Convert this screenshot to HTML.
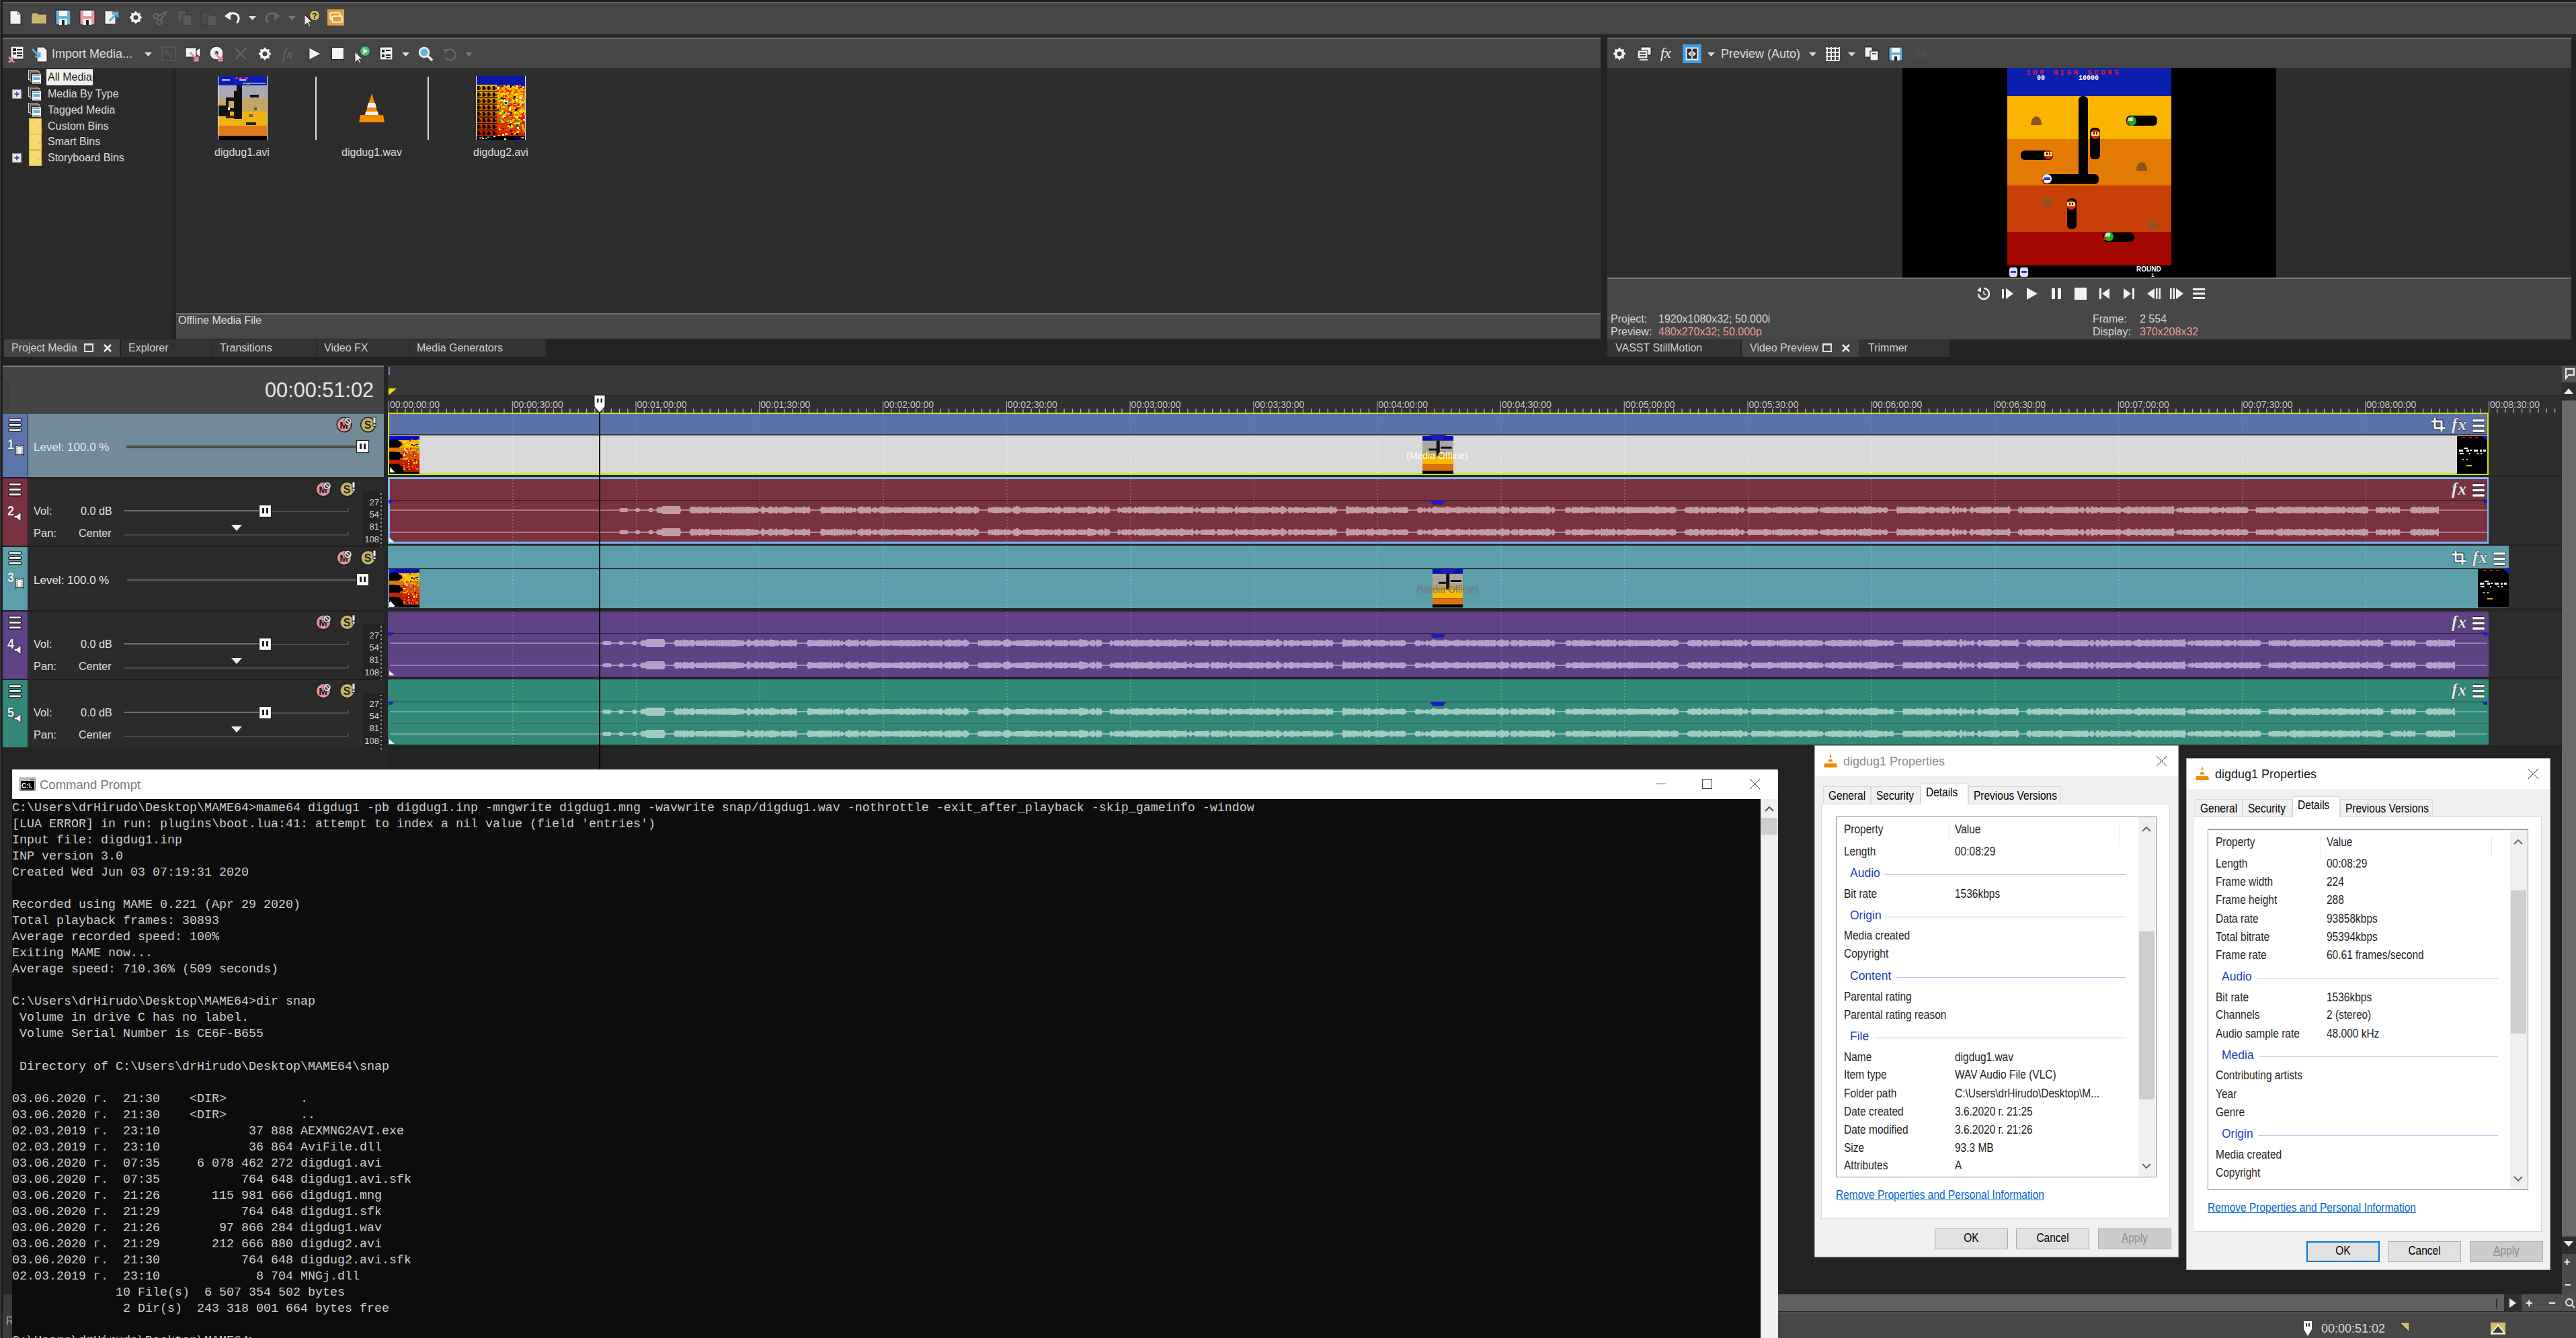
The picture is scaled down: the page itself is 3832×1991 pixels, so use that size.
<!DOCTYPE html>
<html><head><meta charset="utf-8">
<style>
*{margin:0;padding:0;box-sizing:border-box}
html,body{width:3832px;height:1991px;overflow:hidden;background:#252525;font-family:"Liberation Sans",sans-serif;color:#ddd}
.a{position:absolute}
.t{position:absolute;white-space:nowrap}
svg.a{overflow:visible}
</style></head><body>
<div class="a" style="left:0px;top:0px;width:3832px;height:3px;background:#1e1e1e;"></div>
<div class="a" style="left:0px;top:0px;width:5px;height:1991px;background:#1e1e1e;"></div>
<div class="a" style="left:0px;top:0px;width:1px;height:1991px;background:#3e3e3e;"></div>
<div class="a" style="left:4px;top:3px;width:3828px;height:48px;background:#464646;border-top:1px solid #6a6a6a"></div>
<div class="a" style="left:4px;top:51px;width:3828px;height:5px;background:#262626;"></div>
<svg class="a" style="left:14px;top:15px;" width="18" height="22" viewBox="0 0 18 22"><path d="M1 1 L12 1 L17 6 L17 21 L1 21 Z" fill="#f2f2f2" stroke="#2a2a2a" stroke-width="1"/><path d="M12 1 L12 6 L17 6" fill="none" stroke="#666" stroke-width="1"/></svg>
<svg class="a" style="left:46px;top:16px;" width="24" height="20" viewBox="0 0 24 20"><path d="M1 3 L9 3 L11 5 L23 5 L23 19 L1 19 Z" fill="#c8b46a" stroke="#2a2a2a" stroke-width="1"/><rect x="1" y="7" width="22" height="12" fill="#c9b56b"/></svg>
<svg class="a" style="left:82px;top:14px;" width="24" height="24" viewBox="0 0 24 24"><rect x="1" y="1" width="22" height="22" fill="#68b4d8" stroke="#222" stroke-width="1"/><rect x="6" y="2" width="12" height="8" fill="#f4f4f4"/><rect x="6" y="14" width="12" height="9" fill="#f4f4f4"/><rect x="10" y="16" width="4" height="7" fill="#222"/></svg>
<svg class="a" style="left:118px;top:14px;" width="24" height="24" viewBox="0 0 24 24"><rect x="1" y="1" width="22" height="22" fill="#e898a4" stroke="#222" stroke-width="1"/><rect x="6" y="2" width="12" height="8" fill="#f4f4f4"/><rect x="6" y="14" width="12" height="9" fill="#f4f4f4"/><rect x="10" y="16" width="4" height="7" fill="#222"/></svg>
<svg class="a" style="left:155px;top:15px;" width="18" height="22" viewBox="0 0 18 22"><path d="M1 1 L12 1 L17 6 L17 21 L1 21 Z" fill="#f2f2f2" stroke="#2a2a2a" stroke-width="1"/><path d="M12 1 L12 6 L17 6" fill="none" stroke="#666" stroke-width="1"/></svg>
<svg class="a" style="left:160px;top:16px;" width="18" height="18" viewBox="0 0 18 18"><path d="M3 15 L14 4 M8 3 L15 3 L15 10" fill="none" stroke="#5aaee0" stroke-width="3"/></svg>
<svg class="a" style="left:191px;top:15px;" width="22" height="22" viewBox="0 0 22 22"><polygon points="21.5,11.0 17.9,13.9 18.4,18.4 13.9,17.9 11.0,21.5 8.1,17.9 3.6,18.4 4.1,13.9 0.5,11.0 4.1,8.1 3.6,3.6 8.1,4.1 11.0,0.5 13.9,4.1 18.4,3.6 17.9,8.1" fill="#f2f2f2" stroke="#222" stroke-width="0.8"/><circle cx="11" cy="11" r="3.5" fill="#444"/></svg>
<svg class="a" style="left:227px;top:15px;" width="22" height="22" viewBox="0 0 22 22"><circle cx="5" cy="9" r="3.5" fill="none" stroke="#6a6a6a" stroke-width="2"/><circle cx="10" cy="18" r="3.5" fill="none" stroke="#6a6a6a" stroke-width="2"/><path d="M8 9 L21 2 M11 15 L20 5" stroke="#6a6a6a" stroke-width="2"/></svg>
<svg class="a" style="left:263px;top:15px;" width="24" height="24" viewBox="0 0 24 24"><rect x="1" y="1" width="13" height="16" fill="#555" stroke="#3a3a3a"/><rect x="9" y="7" width="13" height="16" fill="#5a5a5a" stroke="#3a3a3a"/></svg>
<svg class="a" style="left:299px;top:15px;" width="24" height="24" viewBox="0 0 24 24"><rect x="1" y="3" width="15" height="19" fill="#4e4e4e" stroke="#3a3a3a"/><rect x="10" y="8" width="13" height="15" fill="#5a5a5a" stroke="#3a3a3a"/></svg>
<svg class="a" style="left:334px;top:16px;" width="24" height="20" viewBox="0 0 24 20"><path d="M6 8 A8 8 0 1 1 18 18" fill="none" stroke="#f2f2f2" stroke-width="3"/><path d="M0 8 L9 1 L9 14 Z" fill="#f2f2f2"/></svg>
<svg class="a" style="left:370px;top:24px;" width="11" height="6" viewBox="0 0 11 6"><path d="M0 0 L11 0 L5.5 6 Z" fill="#ddd"/></svg>
<svg class="a" style="left:393px;top:16px;" width="24" height="20" viewBox="0 0 24 20"><path d="M18 8 A8 8 0 1 0 6 18" fill="none" stroke="#666" stroke-width="3"/><path d="M24 8 L15 1 L15 14 Z" fill="#666"/></svg>
<svg class="a" style="left:429px;top:24px;" width="11" height="6" viewBox="0 0 11 6"><path d="M0 0 L11 0 L5.5 6 Z" fill="#777"/></svg>
<svg class="a" style="left:452px;top:14px;" width="24" height="26" viewBox="0 0 24 26"><path d="M1 8 L1 24 L5 20 L8 26 L10 25 L7 19 L12 19 Z" fill="#eee" stroke="#222" stroke-width="0.8"/><circle cx="16" cy="9" r="7.5" fill="#d4c060" stroke="#222" stroke-width="0.8"/><text x="16" y="13.5" font-family="Liberation Sans" font-weight="bold" font-size="12" fill="#222" text-anchor="middle">?</text></svg>
<div class="a" style="left:487px;top:14px;width:25px;height:24px;background:#e0a040;"></div>
<svg class="a" style="left:490px;top:18px;" width="20" height="17" viewBox="0 0 20 17"><rect x="1" y="1" width="15" height="9" rx="2" fill="none" stroke="#fff" stroke-width="1.6"/><rect x="4" y="6" width="15" height="9" rx="2" fill="#e0a040" stroke="#fff" stroke-width="1.6"/></svg>
<div class="a" style="left:4px;top:56px;width:2377px;height:45px;background:#464646;border-top:2px solid #6e6e6e"></div>
<svg class="a" style="left:13px;top:68px;" width="24" height="26" viewBox="0 0 24 26"><rect x="3" y="1" width="19" height="19" fill="#f2f2f2" stroke="#222"/><rect x="6" y="4" width="5" height="4" fill="#222"/><rect x="12" y="5" width="8" height="2" fill="#222"/><rect x="6" y="10" width="5" height="3" fill="#222"/><rect x="12" y="10" width="8" height="2" fill="#222"/><rect x="12" y="14" width="8" height="2" fill="#222"/><path d="M0 17 L8 25 M8 17 L0 25" stroke="#e88a98" stroke-width="2.5"/></svg>
<svg class="a" style="left:47px;top:68px;" width="24" height="26" viewBox="0 0 24 26"><path d="M8 2 L18 2 L23 7 L23 24 L8 24 Z" fill="#f2f2f2" stroke="#222"/><path d="M1 5 L12 16 M5 16 L12 16 L12 9" fill="none" stroke="#5aaee0" stroke-width="3"/></svg>
<div class="t" style="left:77px;top:71.0px;font-size:18px;line-height:18px;color:#dcdcdc;font-family:'Liberation Sans';">Import Media...</div>
<svg class="a" style="left:215px;top:78px;" width="11" height="6" viewBox="0 0 11 6"><path d="M0 0 L11 0 L5.5 6 Z" fill="#ddd"/></svg>
<svg class="a" style="left:240px;top:69px;" width="22" height="22" viewBox="0 0 22 22"><rect x="1" y="1" width="20" height="20" fill="none" stroke="#5a5a5a" stroke-width="1.5"/><path d="M4 6 L16 18 M6 4 L18 16" stroke="#555" stroke-width="1.5"/></svg>
<svg class="a" style="left:275px;top:68px;" width="24" height="26" viewBox="0 0 24 26"><rect x="1" y="3" width="16" height="14" fill="#f2f2f2" stroke="#222"/><path d="M17 7 L23 3 L23 17 L17 13 Z" fill="#f2f2f2" stroke="#222"/><path d="M8 10 L19 22 M13 22 L19 22 L19 16" fill="none" stroke="#e88a98" stroke-width="3"/></svg>
<svg class="a" style="left:311px;top:68px;" width="24" height="26" viewBox="0 0 24 26"><circle cx="11" cy="11" r="10" fill="#f2f2f2" stroke="#222"/><circle cx="11" cy="11" r="3" fill="#444"/><path d="M8 10 L19 22 M13 22 L19 22 L19 16" fill="none" stroke="#e88a98" stroke-width="3"/></svg>
<svg class="a" style="left:348px;top:70px;" width="20" height="20" viewBox="0 0 20 20"><path d="M2 2 L18 18 M18 2 L2 18" stroke="#666" stroke-width="2"/></svg>
<svg class="a" style="left:383px;top:69px;" width="22" height="22" viewBox="0 0 22 22"><polygon points="21.5,11.0 17.9,13.9 18.4,18.4 13.9,17.9 11.0,21.5 8.1,17.9 3.6,18.4 4.1,13.9 0.5,11.0 4.1,8.1 3.6,3.6 8.1,4.1 11.0,0.5 13.9,4.1 18.4,3.6 17.9,8.1" fill="#f2f2f2" stroke="#222" stroke-width="0.8"/><circle cx="11" cy="11" r="3.5" fill="#444"/></svg>
<div class="t" style="left:420px;top:69.0px;font-size:22px;line-height:22px;color:#666;font-family:'Liberation Serif';"><i>fx</i></div>
<svg class="a" style="left:459px;top:70px;" width="19" height="20" viewBox="0 0 19 20"><path d="M1 1 L18 10 L1 19 Z" fill="#f2f2f2" stroke="#222" stroke-width="0.8"/></svg>
<div class="a" style="left:493px;top:70px;width:19px;height:19px;background:#f2f2f2;border:1px solid #222"></div>
<svg class="a" style="left:527px;top:67px;" width="24" height="28" viewBox="0 0 24 28"><path d="M1 10 L1 26 L5 22 L8 27 L10 26 L7 21 L12 21 Z" fill="#eee" stroke="#222" stroke-width="0.8"/><circle cx="16" cy="9" r="7.5" fill="#4ec070" stroke="#222" stroke-width="0.8"/><path d="M13.5 5 L20 9 L13.5 13 Z" fill="#fff"/></svg>
<svg class="a" style="left:564px;top:69px;" width="21" height="21" viewBox="0 0 21 21"><rect x="1" y="1" width="19" height="19" fill="#f2f2f2" stroke="#222"/><rect x="4" y="5" width="4" height="4" fill="#222"/><rect x="10" y="5" width="7" height="2" fill="#222"/><rect x="4" y="12" width="4" height="4" fill="#222"/><rect x="10" y="12" width="7" height="2" fill="#222"/><rect x="10" y="16" width="7" height="1.5" fill="#222"/></svg>
<svg class="a" style="left:598px;top:78px;" width="11" height="6" viewBox="0 0 11 6"><path d="M0 0 L11 0 L5.5 6 Z" fill="#ddd"/></svg>
<svg class="a" style="left:622px;top:69px;" width="22" height="22" viewBox="0 0 22 22"><circle cx="9" cy="9" r="7" fill="#6ab4e0" stroke="#f2f2f2" stroke-width="2.5"/><line x1="14" y1="14" x2="21" y2="21" stroke="#f2f2f2" stroke-width="3.5"/></svg>
<svg class="a" style="left:658px;top:70px;" width="21" height="21" viewBox="0 0 21 21"><path d="M6 6 A8 8 0 1 1 5 16" fill="none" stroke="#666" stroke-width="2.5"/><path d="M1 3 L9 3 L5 10 Z" fill="#666"/></svg>
<svg class="a" style="left:692px;top:78px;" width="11" height="6" viewBox="0 0 11 6"><path d="M0 0 L11 0 L5.5 6 Z" fill="#777"/></svg>
<div class="a" style="left:4px;top:101px;width:251px;height:430px;background:#2b2b2b;"></div>
<div class="a" style="left:255px;top:101px;width:7px;height:430px;background:#252525;"></div>
<div class="a" style="left:69px;top:103px;width:69px;height:24px;background:#efefef;"></div>
<svg class="a" style="left:42px;top:104px;" width="21" height="22" viewBox="0 0 21 22"><rect x="0.5" y="0.5" width="14" height="14" fill="#2b2b2b" stroke="#ddd"/><rect x="3" y="3" width="14" height="14" fill="#2b2b2b" stroke="#ddd"/><rect x="5.5" y="6" width="14" height="15" fill="#f2f2f2" stroke="#333"/><rect x="7.5" y="11" width="10" height="4" fill="#6ab4e0"/><path d="M7 8.5 L18 8.5 M7 18.5 L18 18.5" stroke="#555" stroke-dasharray="1.5 1.2"/></svg>
<div class="t" style="left:71px;top:107.0px;font-size:16px;line-height:16px;color:#1a1a1a;font-family:'Liberation Sans';">All Media</div>
<svg class="a" style="left:18px;top:132.6px;" width="14" height="14" viewBox="0 0 14 14"><rect x="0.5" y="0.5" width="13" height="13" fill="#e8e8e8" stroke="#999"/><path d="M3.5 7 L10.5 7 M7 3.5 L7 10.5" stroke="#3050a0" stroke-width="1.8"/></svg>
<svg class="a" style="left:42px;top:128.6px;" width="21" height="22" viewBox="0 0 21 22"><rect x="0.5" y="0.5" width="14" height="14" fill="#2b2b2b" stroke="#ddd"/><rect x="3" y="3" width="14" height="14" fill="#2b2b2b" stroke="#ddd"/><rect x="5.5" y="6" width="14" height="15" fill="#f2f2f2" stroke="#333"/><rect x="7.5" y="11" width="10" height="4" fill="#6ab4e0"/><path d="M7 8.5 L18 8.5 M7 18.5 L18 18.5" stroke="#555" stroke-dasharray="1.5 1.2"/></svg>
<div class="t" style="left:71px;top:131.6px;font-size:16px;line-height:16px;color:#dcdcdc;font-family:'Liberation Sans';">Media By Type</div>
<svg class="a" style="left:42px;top:152.5px;" width="21" height="22" viewBox="0 0 21 22"><rect x="0.5" y="0.5" width="14" height="14" fill="#2b2b2b" stroke="#ddd"/><rect x="3" y="3" width="14" height="14" fill="#2b2b2b" stroke="#ddd"/><rect x="5.5" y="6" width="14" height="15" fill="#f2f2f2" stroke="#333"/><rect x="7.5" y="11" width="10" height="4" fill="#6ab4e0"/><path d="M7 8.5 L18 8.5 M7 18.5 L18 18.5" stroke="#555" stroke-dasharray="1.5 1.2"/></svg>
<div class="t" style="left:71px;top:155.5px;font-size:16px;line-height:16px;color:#dcdcdc;font-family:'Liberation Sans';">Tagged Media</div>
<svg class="a" style="left:43px;top:175.7px;" width="21" height="24" viewBox="0 0 21 24"><rect x="0.5" y="0.5" width="18" height="23" fill="#f5d870" stroke="#d4b040" stroke-width="1"/><path d="M14 14 L19 14 L19 24" fill="none" stroke="#d4b040"/></svg>
<div class="t" style="left:71px;top:179.7px;font-size:16px;line-height:16px;color:#dcdcdc;font-family:'Liberation Sans';">Custom Bins</div>
<svg class="a" style="left:43px;top:199.4px;" width="21" height="24" viewBox="0 0 21 24"><rect x="0.5" y="0.5" width="18" height="23" fill="#f5d870" stroke="#d4b040" stroke-width="1"/><path d="M14 14 L19 14 L19 24" fill="none" stroke="#d4b040"/></svg>
<div class="t" style="left:71px;top:203.4px;font-size:16px;line-height:16px;color:#dcdcdc;font-family:'Liberation Sans';">Smart Bins</div>
<svg class="a" style="left:18px;top:228.3px;" width="14" height="14" viewBox="0 0 14 14"><rect x="0.5" y="0.5" width="13" height="13" fill="#e8e8e8" stroke="#999"/><path d="M3.5 7 L10.5 7 M7 3.5 L7 10.5" stroke="#3050a0" stroke-width="1.8"/></svg>
<svg class="a" style="left:43px;top:223.3px;" width="21" height="24" viewBox="0 0 21 24"><rect x="0.5" y="0.5" width="18" height="23" fill="#f5d870" stroke="#d4b040" stroke-width="1"/><path d="M14 14 L19 14 L19 24" fill="none" stroke="#d4b040"/></svg>
<div class="t" style="left:71px;top:227.3px;font-size:16px;line-height:16px;color:#dcdcdc;font-family:'Liberation Sans';">Storyboard Bins</div>
<div class="a" style="left:262px;top:101px;width:2119px;height:365px;background:#2d2d2d;"></div>
<svg class="a" style="left:324px;top:113px;" width="74" height="95" viewBox="0 0 74 95"><rect width="74" height="95" fill="#eee"/><rect x="1" y="0" width="72" height="95" fill="#000"/><rect x="1" y="0" width="72" height="14" fill="#0c1cb8"/><rect x="1" y="14" width="72" height="19" fill="#aaa8b4"/><rect x="1" y="33" width="72" height="20" fill="#c4a664"/><rect x="1" y="53" width="72" height="21" fill="#eeb414"/><rect x="1" y="74" width="72" height="15" fill="#e07a18"/><rect x="28" y="14" width="8" height="50" fill="#111"/><rect x="24" y="22" width="6" height="42" fill="#111"/><path d="M1 44 L12 44 L12 32 L26 32 L26 37 L16 37 L16 48 L8 48 L8 60 L1 60 Z" fill="#111"/><path d="M1 48 L36 48 L36 53 L18 53 L18 60 L1 60 Z" fill="#111"/><rect x="48" y="28" width="13" height="4" fill="#111"/><rect x="12" y="59" width="13" height="4" fill="#222"/><rect x="42" y="69" width="15" height="4" fill="#222"/><rect x="26" y="2" width="4" height="3" fill="#e03040"/><rect x="32" y="2" width="4" height="3" fill="#e03040"/><rect x="40" y="2" width="5" height="3" fill="#e03040"/><rect x="6" y="5" width="12" height="2" fill="#ccd"/><rect x="32" y="5" width="10" height="2" fill="#ccd"/><rect x="37" y="10" width="34" height="2" fill="#aab" opacity="0.8"/><rect x="43" y="12" width="4" height="4" fill="#30b040"/><rect x="15" y="47" width="3" height="4" fill="#fff"/><rect x="46" y="57" width="6" height="4" fill="#806030"/><rect x="54" y="47" width="4" height="4" fill="#705020"/></svg>
<div class="t" style="left:300.0px;top:219.0px;width:120px;text-align:center;font-size:16px;line-height:16px;color:#dcdcdc;font-family:'Liberation Sans';">digdug1.avi</div>
<div class="a" style="left:469px;top:114px;width:2px;height:94px;background:#dcdcdc;"></div>
<svg class="a" style="left:533px;top:137px;" width="40" height="46" viewBox="0 0 40 46"><path d="M20 2 L30 34 L10 34 Z" fill="#f28a00"/><path d="M15 16 L25 16 L27 23 L13 23 Z" fill="#f4f4f4"/><path d="M11 29 L29 29 L30 34 L10 34 Z" fill="#f4f4f4"/><path d="M3 34 L37 34 L39 45 L1 45 Z" fill="#f28a00"/></svg>
<div class="t" style="left:493.0px;top:219.0px;width:120px;text-align:center;font-size:16px;line-height:16px;color:#dcdcdc;font-family:'Liberation Sans';">digdug1.wav</div>
<div class="a" style="left:636px;top:114px;width:2px;height:94px;background:#dcdcdc;"></div>
<svg class="a" style="left:708px;top:113px;overflow:hidden" width="74" height="95" viewBox="0 0 74 95"><defs><linearGradient id="fg" x1="0" y1="0" x2="0" y2="1"><stop offset="0" stop-color="#f8c400"/><stop offset="0.45" stop-color="#f08000"/><stop offset="1" stop-color="#c01400"/></linearGradient></defs><rect width="74" height="95" fill="#eee"/><rect x="1" y="0" width="72" height="95" fill="url(#fg)"/><rect x="1" y="0" width="72" height="13" fill="#0818a8"/><rect x="32" y="13" width="41" height="5" fill="#0818a8"/><rect x="2.0" y="15.0" width="3.5" height="6" fill="#000"/><rect x="5.5" y="17.0" width="2.5" height="3" fill="#000" opacity="0.7"/><rect x="9.6" y="15.0" width="3.5" height="6" fill="#000"/><rect x="13.1" y="17.0" width="2.5" height="3" fill="#000" opacity="0.7"/><rect x="17.2" y="15.0" width="3.5" height="6" fill="#000"/><rect x="20.7" y="17.0" width="2.5" height="3" fill="#000" opacity="0.7"/><rect x="24.8" y="15.0" width="3.5" height="6" fill="#000"/><rect x="28.3" y="17.0" width="2.5" height="3" fill="#000" opacity="0.7"/><rect x="1" y="22.0" width="31" height="1.6" fill="#000" opacity="0.8"/><rect x="2.0" y="24.6" width="3.5" height="6" fill="#000"/><rect x="5.5" y="26.6" width="2.5" height="3" fill="#000" opacity="0.7"/><rect x="9.6" y="24.6" width="3.5" height="6" fill="#000"/><rect x="13.1" y="26.6" width="2.5" height="3" fill="#000" opacity="0.7"/><rect x="17.2" y="24.6" width="3.5" height="6" fill="#000"/><rect x="20.7" y="26.6" width="2.5" height="3" fill="#000" opacity="0.7"/><rect x="24.8" y="24.6" width="3.5" height="6" fill="#000"/><rect x="28.3" y="26.6" width="2.5" height="3" fill="#000" opacity="0.7"/><rect x="1" y="31.6" width="31" height="1.6" fill="#000" opacity="0.8"/><rect x="2.0" y="34.2" width="3.5" height="6" fill="#000"/><rect x="5.5" y="36.2" width="2.5" height="3" fill="#000" opacity="0.7"/><rect x="9.6" y="34.2" width="3.5" height="6" fill="#000"/><rect x="13.1" y="36.2" width="2.5" height="3" fill="#000" opacity="0.7"/><rect x="17.2" y="34.2" width="3.5" height="6" fill="#000"/><rect x="20.7" y="36.2" width="2.5" height="3" fill="#000" opacity="0.7"/><rect x="24.8" y="34.2" width="3.5" height="6" fill="#000"/><rect x="28.3" y="36.2" width="2.5" height="3" fill="#000" opacity="0.7"/><rect x="1" y="41.2" width="31" height="1.6" fill="#000" opacity="0.8"/><rect x="2.0" y="43.8" width="3.5" height="6" fill="#000"/><rect x="5.5" y="45.8" width="2.5" height="3" fill="#000" opacity="0.7"/><rect x="9.6" y="43.8" width="3.5" height="6" fill="#000"/><rect x="13.1" y="45.8" width="2.5" height="3" fill="#000" opacity="0.7"/><rect x="17.2" y="43.8" width="3.5" height="6" fill="#000"/><rect x="20.7" y="45.8" width="2.5" height="3" fill="#000" opacity="0.7"/><rect x="24.8" y="43.8" width="3.5" height="6" fill="#000"/><rect x="28.3" y="45.8" width="2.5" height="3" fill="#000" opacity="0.7"/><rect x="1" y="50.8" width="31" height="1.6" fill="#000" opacity="0.8"/><rect x="2.0" y="53.4" width="3.5" height="6" fill="#000"/><rect x="5.5" y="55.4" width="2.5" height="3" fill="#000" opacity="0.7"/><rect x="9.6" y="53.4" width="3.5" height="6" fill="#000"/><rect x="13.1" y="55.4" width="2.5" height="3" fill="#000" opacity="0.7"/><rect x="17.2" y="53.4" width="3.5" height="6" fill="#000"/><rect x="20.7" y="55.4" width="2.5" height="3" fill="#000" opacity="0.7"/><rect x="24.8" y="53.4" width="3.5" height="6" fill="#000"/><rect x="28.3" y="55.4" width="2.5" height="3" fill="#000" opacity="0.7"/><rect x="1" y="60.4" width="31" height="1.6" fill="#000" opacity="0.8"/><rect x="2.0" y="63.0" width="3.5" height="6" fill="#000"/><rect x="5.5" y="65.0" width="2.5" height="3" fill="#000" opacity="0.7"/><rect x="9.6" y="63.0" width="3.5" height="6" fill="#000"/><rect x="13.1" y="65.0" width="2.5" height="3" fill="#000" opacity="0.7"/><rect x="17.2" y="63.0" width="3.5" height="6" fill="#000"/><rect x="20.7" y="65.0" width="2.5" height="3" fill="#000" opacity="0.7"/><rect x="24.8" y="63.0" width="3.5" height="6" fill="#000"/><rect x="28.3" y="65.0" width="2.5" height="3" fill="#000" opacity="0.7"/><rect x="1" y="70.0" width="31" height="1.6" fill="#000" opacity="0.8"/><rect x="2.0" y="72.6" width="3.5" height="6" fill="#000"/><rect x="5.5" y="74.6" width="2.5" height="3" fill="#000" opacity="0.7"/><rect x="9.6" y="72.6" width="3.5" height="6" fill="#000"/><rect x="13.1" y="74.6" width="2.5" height="3" fill="#000" opacity="0.7"/><rect x="17.2" y="72.6" width="3.5" height="6" fill="#000"/><rect x="20.7" y="74.6" width="2.5" height="3" fill="#000" opacity="0.7"/><rect x="24.8" y="72.6" width="3.5" height="6" fill="#000"/><rect x="28.3" y="74.6" width="2.5" height="3" fill="#000" opacity="0.7"/><rect x="1" y="79.6" width="31" height="1.6" fill="#000" opacity="0.8"/><rect x="2.0" y="82.2" width="3.5" height="6" fill="#000"/><rect x="5.5" y="84.2" width="2.5" height="3" fill="#000" opacity="0.7"/><rect x="9.6" y="82.2" width="3.5" height="6" fill="#000"/><rect x="13.1" y="84.2" width="2.5" height="3" fill="#000" opacity="0.7"/><rect x="17.2" y="82.2" width="3.5" height="6" fill="#000"/><rect x="20.7" y="84.2" width="2.5" height="3" fill="#000" opacity="0.7"/><rect x="24.8" y="82.2" width="3.5" height="6" fill="#000"/><rect x="28.3" y="84.2" width="2.5" height="3" fill="#000" opacity="0.7"/><rect x="1" y="89.2" width="31" height="1.6" fill="#000" opacity="0.8"/><rect x="2.0" y="91.8" width="3.5" height="6" fill="#000"/><rect x="5.5" y="93.8" width="2.5" height="3" fill="#000" opacity="0.7"/><rect x="9.6" y="91.8" width="3.5" height="6" fill="#000"/><rect x="13.1" y="93.8" width="2.5" height="3" fill="#000" opacity="0.7"/><rect x="17.2" y="91.8" width="3.5" height="6" fill="#000"/><rect x="20.7" y="93.8" width="2.5" height="3" fill="#000" opacity="0.7"/><rect x="24.8" y="91.8" width="3.5" height="6" fill="#000"/><rect x="28.3" y="93.8" width="2.5" height="3" fill="#000" opacity="0.7"/><rect x="1" y="98.8" width="31" height="1.6" fill="#000" opacity="0.8"/><rect x="56" y="70" width="3" height="3" fill="#fff"/><rect x="69" y="70" width="3" height="3" fill="#000"/><rect x="33" y="49" width="3" height="3" fill="#000"/><rect x="57" y="82" width="3" height="3" fill="#e02000"/><rect x="42" y="55" width="3" height="3" fill="#ff2000"/><rect x="33" y="30" width="3" height="3" fill="#ffe000"/><rect x="68" y="72" width="3" height="3" fill="#ffe000"/><rect x="37" y="61" width="3" height="3" fill="#e02000"/><rect x="66" y="29" width="3" height="3" fill="#ffe000"/><rect x="70" y="80" width="3" height="3" fill="#ffe000"/><rect x="53" y="65" width="3" height="3" fill="#ffe000"/><rect x="59" y="87" width="3" height="3" fill="#1020c0"/><rect x="44" y="41" width="3" height="3" fill="#ffe000"/><rect x="38" y="18" width="3" height="3" fill="#f8b000"/><rect x="56" y="13" width="3" height="3" fill="#e05000"/><rect x="45" y="37" width="3" height="3" fill="#fff"/><rect x="51" y="37" width="3" height="3" fill="#f8b000"/><rect x="59" y="17" width="3" height="3" fill="#f0a000"/><rect x="33" y="71" width="3" height="3" fill="#20c020"/><rect x="33" y="74" width="3" height="3" fill="#f8b000"/><rect x="32" y="17" width="3" height="3" fill="#ffe000"/><rect x="69" y="28" width="3" height="3" fill="#e05000"/><rect x="68" y="86" width="3" height="3" fill="#e02000"/><rect x="52" y="73" width="3" height="3" fill="#ffe000"/><rect x="63" y="79" width="3" height="3" fill="#ffe000"/><rect x="36" y="39" width="3" height="3" fill="#ff2000"/><rect x="68" y="39" width="3" height="3" fill="#000"/><rect x="53" y="37" width="3" height="3" fill="#f8b000"/><rect x="39" y="19" width="3" height="3" fill="#ffe000"/><rect x="59" y="90" width="3" height="3" fill="#e02000"/><rect x="70" y="54" width="3" height="3" fill="#f8b000"/><rect x="41" y="59" width="3" height="3" fill="#fff"/><rect x="50" y="45" width="3" height="3" fill="#ffe000"/><rect x="68" y="16" width="3" height="3" fill="#f8b000"/><rect x="65" y="23" width="3" height="3" fill="#e05000"/><rect x="69" y="62" width="3" height="3" fill="#fff"/><rect x="36" y="46" width="3" height="3" fill="#ffe000"/><rect x="65" y="36" width="3" height="3" fill="#f8b000"/><rect x="71" y="79" width="3" height="3" fill="#f0a000"/><rect x="50" y="51" width="3" height="3" fill="#e05000"/><rect x="51" y="35" width="3" height="3" fill="#f8b000"/><rect x="38" y="42" width="3" height="3" fill="#e02000"/><rect x="69" y="61" width="3" height="3" fill="#e02000"/><rect x="35" y="34" width="3" height="3" fill="#fff"/><rect x="66" y="41" width="3" height="3" fill="#fff"/><rect x="62" y="66" width="3" height="3" fill="#e05000"/><rect x="62" y="41" width="3" height="3" fill="#e05000"/><rect x="43" y="50" width="3" height="3" fill="#e05000"/><rect x="59" y="36" width="3" height="3" fill="#000"/><rect x="57" y="58" width="3" height="3" fill="#ffe000"/><rect x="42" y="65" width="3" height="3" fill="#f8b000"/><rect x="57" y="74" width="3" height="3" fill="#f8b000"/><rect x="61" y="77" width="3" height="3" fill="#f8b000"/><rect x="66" y="66" width="3" height="3" fill="#f0a000"/><rect x="69" y="53" width="3" height="3" fill="#ff2000"/><rect x="38" y="77" width="3" height="3" fill="#000"/><rect x="51" y="66" width="3" height="3" fill="#e05000"/><rect x="60" y="26" width="3" height="3" fill="#fff"/><rect x="55" y="64" width="3" height="3" fill="#f8b000"/><rect x="62" y="62" width="3" height="3" fill="#e05000"/><rect x="33" y="25" width="3" height="3" fill="#f8b000"/><rect x="57" y="30" width="3" height="3" fill="#e05000"/><rect x="57" y="16" width="3" height="3" fill="#f8b000"/><rect x="41" y="17" width="3" height="3" fill="#ffe000"/><rect x="44" y="27" width="3" height="3" fill="#ffe000"/><rect x="33" y="49" width="3" height="3" fill="#f8b000"/><rect x="56" y="58" width="3" height="3" fill="#ffe000"/><rect x="32" y="44" width="3" height="3" fill="#ffe000"/><rect x="48" y="22" width="3" height="3" fill="#20c020"/><rect x="47" y="16" width="3" height="3" fill="#ff2000"/><rect x="36" y="55" width="3" height="3" fill="#f8b000"/><rect x="55" y="87" width="3" height="3" fill="#fff"/><rect x="48" y="76" width="3" height="3" fill="#ff2000"/><rect x="46" y="24" width="3" height="3" fill="#ff2000"/><rect x="54" y="87" width="3" height="3" fill="#f0a000"/><rect x="56" y="40" width="3" height="3" fill="#1020c0"/><rect x="32" y="21" width="3" height="3" fill="#ff2000"/><rect x="56" y="24" width="3" height="3" fill="#ff2000"/><rect x="67" y="42" width="3" height="3" fill="#f8b000"/><rect x="41" y="35" width="3" height="3" fill="#f0a000"/><rect x="47" y="87" width="3" height="3" fill="#1020c0"/><rect x="55" y="33" width="3" height="3" fill="#e02000"/><rect x="51" y="45" width="3" height="3" fill="#f8b000"/><rect x="70" y="51" width="3" height="3" fill="#ffe000"/><rect x="51" y="22" width="3" height="3" fill="#ff2000"/><rect x="49" y="36" width="3" height="3" fill="#fff"/><rect x="64" y="14" width="3" height="3" fill="#ff2000"/><rect x="43" y="85" width="3" height="3" fill="#fff"/><rect x="42" y="34" width="3" height="3" fill="#ffe000"/><rect x="71" y="36" width="3" height="3" fill="#ff2000"/><rect x="51" y="63" width="3" height="3" fill="#ff2000"/><rect x="61" y="22" width="3" height="3" fill="#e05000"/><rect x="44" y="54" width="3" height="3" fill="#f8b000"/><rect x="44" y="54" width="3" height="3" fill="#f8b000"/><rect x="46" y="70" width="3" height="3" fill="#ff2000"/><rect x="33" y="32" width="3" height="3" fill="#f8b000"/><rect x="68" y="81" width="3" height="3" fill="#ff2000"/><rect x="33" y="73" width="3" height="3" fill="#f8b000"/><rect x="60" y="62" width="3" height="3" fill="#f8b000"/><rect x="47" y="43" width="3" height="3" fill="#20c020"/><rect x="40" y="36" width="3" height="3" fill="#20c020"/><rect x="35" y="77" width="3" height="3" fill="#e05000"/><rect x="49" y="35" width="3" height="3" fill="#fff"/><rect x="68" y="24" width="3" height="3" fill="#f8b000"/><rect x="53" y="51" width="3" height="3" fill="#f8b000"/><rect x="38" y="58" width="3" height="3" fill="#fff"/><rect x="35" y="31" width="3" height="3" fill="#fff"/><rect x="63" y="64" width="3" height="3" fill="#ffe000"/><rect x="70" y="90" width="3" height="3" fill="#e05000"/><rect x="34" y="78" width="3" height="3" fill="#ffe000"/><rect x="69" y="68" width="3" height="3" fill="#e02000"/><rect x="68" y="25" width="3" height="3" fill="#ff2000"/><rect x="48" y="25" width="3" height="3" fill="#ff2000"/><rect x="34" y="21" width="3" height="3" fill="#f8b000"/><rect x="35" y="17" width="3" height="3" fill="#ff2000"/><rect x="61" y="81" width="3" height="3" fill="#e02000"/><rect x="44" y="59" width="3" height="3" fill="#f8b000"/><rect x="47" y="17" width="3" height="3" fill="#e05000"/><rect x="38" y="62" width="3" height="3" fill="#ff2000"/><rect x="68" y="56" width="3" height="3" fill="#ff2000"/><rect x="42" y="55" width="3" height="3" fill="#ffe000"/><rect x="52" y="23" width="3" height="3" fill="#ffe000"/><rect x="46" y="70" width="3" height="3" fill="#ffe000"/><rect x="58" y="20" width="3" height="3" fill="#e05000"/><rect x="36" y="23" width="3" height="3" fill="#ff2000"/><rect x="41" y="81" width="3" height="3" fill="#e02000"/><rect x="63" y="15" width="3" height="3" fill="#e05000"/><rect x="34" y="25" width="3" height="3" fill="#000"/><rect x="59" y="30" width="3" height="3" fill="#ffe000"/><rect x="70" y="64" width="3" height="3" fill="#fff"/><rect x="37" y="61" width="3" height="3" fill="#e02000"/><rect x="45" y="60" width="3" height="3" fill="#e02000"/><rect x="37" y="77" width="3" height="3" fill="#ff2000"/><rect x="63" y="46" width="3" height="3" fill="#20c020"/><rect x="52" y="59" width="3" height="3" fill="#ff2000"/><rect x="61" y="43" width="3" height="3" fill="#ffe000"/><rect x="33" y="29" width="3" height="3" fill="#ffe000"/><rect x="67" y="50" width="3" height="3" fill="#e05000"/><rect x="32" y="49" width="3" height="3" fill="#1020c0"/><rect x="56" y="46" width="3" height="3" fill="#f8b000"/><rect x="36" y="25" width="3" height="3" fill="#ffe000"/><rect x="47" y="43" width="3" height="3" fill="#1020c0"/><rect x="38" y="33" width="3" height="3" fill="#ffe000"/><rect x="38" y="35" width="3" height="3" fill="#ffe000"/><rect x="51" y="15" width="3" height="3" fill="#000"/><rect x="46" y="85" width="3" height="3" fill="#e05000"/><rect x="58" y="49" width="3" height="3" fill="#000"/><rect x="37" y="64" width="3" height="3" fill="#ffe000"/><rect x="60" y="26" width="3" height="3" fill="#ffe000"/><rect x="33" y="31" width="3" height="3" fill="#ffe000"/><rect x="48" y="88" width="3" height="3" fill="#e02000"/><rect x="50" y="35" width="3" height="3" fill="#e05000"/><rect x="60" y="26" width="3" height="3" fill="#ffe000"/><rect x="58" y="85" width="3" height="3" fill="#ff2000"/><rect x="49" y="88" width="3" height="3" fill="#e02000"/><rect x="62" y="45" width="3" height="3" fill="#ffe000"/><rect x="53" y="89" width="3" height="3" fill="#ff2000"/><rect x="46" y="20" width="3" height="3" fill="#ffe000"/><rect x="67" y="51" width="3" height="3" fill="#000"/><rect x="34" y="32" width="3" height="3" fill="#ffe000"/><rect x="47" y="18" width="3" height="3" fill="#ffe000"/><rect x="48" y="37" width="3" height="3" fill="#ffe000"/><rect x="33" y="88" width="3" height="3" fill="#ffe000"/><rect x="48" y="54" width="3" height="3" fill="#ffe000"/><rect x="44" y="21" width="3" height="3" fill="#ff2000"/><rect x="68" y="59" width="3" height="3" fill="#20c020"/><rect x="40" y="14" width="3" height="3" fill="#ff2000"/><rect x="51" y="57" width="3" height="3" fill="#f8b000"/><rect x="60" y="83" width="3" height="3" fill="#e02000"/><rect x="64" y="30" width="3" height="3" fill="#ffe000"/><rect x="44" y="20" width="3" height="3" fill="#fff"/><rect x="64" y="37" width="3" height="3" fill="#ffe000"/><rect x="35" y="32" width="3" height="3" fill="#ffe000"/><rect x="49" y="57" width="3" height="3" fill="#e02000"/><rect x="59" y="17" width="3" height="3" fill="#ffe000"/><rect x="43" y="42" width="3" height="3" fill="#ffe000"/><rect x="48" y="37" width="3" height="3" fill="#e05000"/><rect x="54" y="82" width="3" height="3" fill="#e05000"/><rect x="62" y="57" width="3" height="3" fill="#f8b000"/><rect x="58" y="87" width="3" height="3" fill="#e05000"/><rect x="59" y="34" width="3" height="3" fill="#fff"/><rect x="47" y="23" width="3" height="3" fill="#ffe000"/><rect x="39" y="33" width="3" height="3" fill="#e05000"/><rect x="43" y="18" width="3" height="3" fill="#e05000"/><rect x="54" y="15" width="3" height="3" fill="#ffe000"/><rect x="37" y="41" width="3" height="3" fill="#20c020"/><rect x="69" y="60" width="3" height="3" fill="#e02000"/><rect x="46" y="38" width="3" height="3" fill="#ffe000"/><rect x="55" y="77" width="3" height="3" fill="#e05000"/><rect x="36" y="54" width="3" height="3" fill="#ffe000"/><rect x="60" y="47" width="3" height="3" fill="#000"/><rect x="63" y="22" width="3" height="3" fill="#f8b000"/><rect x="68" y="48" width="3" height="3" fill="#f8b000"/><rect x="49" y="72" width="3" height="3" fill="#000"/><rect x="53" y="88" width="3" height="3" fill="#ff2000"/><rect x="36" y="76" width="3" height="3" fill="#e02000"/><rect x="70" y="16" width="3" height="3" fill="#ff2000"/><rect x="51" y="81" width="3" height="3" fill="#e02000"/><rect x="43" y="28" width="3" height="3" fill="#ff2000"/><rect x="46" y="71" width="3" height="3" fill="#e02000"/><rect x="42" y="89" width="3" height="3" fill="#20c020"/><rect x="65" y="61" width="3" height="3" fill="#e02000"/><rect x="64" y="51" width="3" height="3" fill="#ffe000"/><rect x="39" y="21" width="3" height="3" fill="#e05000"/><rect x="67" y="28" width="3" height="3" fill="#fff"/><rect x="45" y="66" width="3" height="3" fill="#20c020"/><rect x="56" y="75" width="3" height="3" fill="#e02000"/><rect x="52" y="58" width="3" height="3" fill="#e02000"/><rect x="44" y="15" width="3" height="3" fill="#f8b000"/><rect x="47" y="50" width="3" height="3" fill="#e05000"/><rect x="48" y="89" width="3" height="3" fill="#fff"/><rect x="68" y="66" width="3" height="3" fill="#e05000"/><rect x="53" y="74" width="3" height="3" fill="#f8b000"/><rect x="58" y="53" width="3" height="3" fill="#ffe000"/><rect x="35" y="20" width="3" height="3" fill="#f8b000"/><rect x="55" y="71" width="3" height="3" fill="#e05000"/><rect x="44" y="85" width="3" height="3" fill="#ffe000"/><rect x="35" y="71" width="3" height="3" fill="#e05000"/><rect x="69" y="82" width="3" height="3" fill="#e05000"/><rect x="65" y="70" width="3" height="3" fill="#ff2000"/><rect x="40" y="53" width="3" height="3" fill="#1020c0"/><rect x="41" y="88" width="3" height="3" fill="#ff2000"/><rect x="47" y="13" width="3" height="3" fill="#f8b000"/><rect x="39" y="63" width="3" height="3" fill="#1020c0"/><rect x="67" y="60" width="3" height="3" fill="#e02000"/><rect x="59" y="56" width="3" height="3" fill="#e05000"/><rect x="47" y="81" width="3" height="3" fill="#e02000"/><rect x="42" y="61" width="3" height="3" fill="#1020c0"/><rect x="39" y="62" width="3" height="3" fill="#e05000"/><rect x="41" y="18" width="3" height="3" fill="#ff2000"/><rect x="64" y="81" width="3" height="3" fill="#e05000"/><rect x="48" y="46" width="3" height="3" fill="#ff2000"/><rect x="67" y="36" width="3" height="3" fill="#ffe000"/><rect x="56" y="87" width="3" height="3" fill="#e02000"/><rect x="37" y="56" width="3" height="3" fill="#ff2000"/><rect x="39" y="28" width="3" height="3" fill="#ff2000"/><rect x="57" y="66" width="3" height="3" fill="#e05000"/><rect x="34" y="50" width="3" height="3" fill="#20c020"/><rect x="69" y="38" width="3" height="3" fill="#20c020"/><rect x="57" y="84" width="3" height="3" fill="#ffe000"/><rect x="65" y="50" width="3" height="3" fill="#ffe000"/><rect x="40" y="25" width="3" height="3" fill="#ffe000"/><rect x="38" y="60" width="3" height="3" fill="#ffe000"/><rect x="61" y="76" width="3" height="3" fill="#fff"/><rect x="60" y="84" width="3" height="3" fill="#000"/><rect x="56" y="87" width="3" height="3" fill="#e02000"/><rect x="35" y="29" width="3" height="3" fill="#f8b000"/><rect x="50" y="65" width="3" height="3" fill="#e05000"/><rect x="35" y="44" width="3" height="3" fill="#ff2000"/><rect x="47" y="22" width="3" height="3" fill="#ff2000"/><rect x="47" y="66" width="3" height="3" fill="#f8b000"/><rect x="69" y="19" width="3" height="3" fill="#e05000"/><rect x="60" y="36" width="3" height="3" fill="#ffe000"/><rect x="51" y="40" width="3" height="3" fill="#e05000"/><rect x="68" y="42" width="3" height="3" fill="#ffe000"/><rect x="51" y="67" width="3" height="3" fill="#fff"/><rect x="54" y="36" width="3" height="3" fill="#f8b000"/><rect x="65" y="53" width="3" height="3" fill="#ffe000"/><rect x="48" y="31" width="3" height="3" fill="#e05000"/><rect x="35" y="34" width="3" height="3" fill="#ffe000"/><rect x="51" y="89" width="3" height="3" fill="#ff2000"/><rect x="47" y="85" width="3" height="3" fill="#e02000"/><rect x="64" y="13" width="3" height="3" fill="#e05000"/><rect x="46" y="14" width="3" height="3" fill="#ffe000"/><rect x="50" y="42" width="3" height="3" fill="#ff2000"/><rect x="34" y="30" width="3" height="3" fill="#f0a000"/><rect x="49" y="49" width="3" height="3" fill="#ffe000"/><rect x="43" y="87" width="3" height="3" fill="#e05000"/><rect x="52" y="17" width="3" height="3" fill="#f8b000"/><rect x="62" y="46" width="3" height="3" fill="#ff2000"/><rect x="67" y="63" width="3" height="3" fill="#ff2000"/><rect x="33" y="15" width="3" height="3" fill="#e05000"/><rect x="48" y="80" width="3" height="3" fill="#fff"/><rect x="68" y="42" width="3" height="3" fill="#e02000"/><rect x="61" y="82" width="3" height="3" fill="#ffe000"/><rect x="48" y="88" width="3" height="3" fill="#e02000"/><rect x="40" y="45" width="3" height="3" fill="#ffe000"/><rect x="50" y="35" width="3" height="3" fill="#e05000"/><rect x="37" y="26" width="3" height="3" fill="#f8b000"/><rect x="35" y="42" width="3" height="3" fill="#1020c0"/><rect x="67" y="28" width="3" height="3" fill="#ffe000"/><rect x="64" y="87" width="3" height="3" fill="#ff2000"/><rect x="37" y="31" width="3" height="3" fill="#000"/><rect x="69" y="15" width="3" height="3" fill="#ffe000"/><rect x="49" y="34" width="3" height="3" fill="#e05000"/><rect x="47" y="73" width="3" height="3" fill="#ffe000"/><rect x="70" y="67" width="3" height="3" fill="#e02000"/><rect x="57" y="42" width="3" height="3" fill="#f8b000"/><rect x="51" y="58" width="3" height="3" fill="#f0a000"/><rect x="41" y="57" width="3" height="3" fill="#ffe000"/><rect x="61" y="23" width="3" height="3" fill="#f8b000"/><rect x="60" y="14" width="3" height="3" fill="#fff"/><rect x="48" y="52" width="3" height="3" fill="#ff2000"/><rect x="63" y="17" width="3" height="3" fill="#ff2000"/><rect x="33" y="43" width="3" height="3" fill="#f8b000"/><rect x="33" y="36" width="3" height="3" fill="#f8b000"/><rect x="58" y="84" width="3" height="3" fill="#f8b000"/><rect x="60" y="85" width="3" height="3" fill="#000"/><rect x="71" y="36" width="3" height="3" fill="#ffe000"/><rect x="68" y="19" width="3" height="3" fill="#f8b000"/><rect x="61" y="54" width="3" height="3" fill="#f8b000"/><rect x="68" y="36" width="3" height="3" fill="#ff2000"/><rect x="64" y="24" width="3" height="3" fill="#f8b000"/><rect x="51" y="57" width="3" height="3" fill="#e02000"/><rect x="34" y="20" width="3" height="3" fill="#f8b000"/><rect x="38" y="87" width="3" height="3" fill="#e02000"/><rect x="63" y="70" width="3" height="3" fill="#ffe000"/><rect x="56" y="43" width="3" height="3" fill="#ff2000"/><rect x="42" y="33" width="3" height="3" fill="#1020c0"/><rect x="49" y="82" width="3" height="3" fill="#e02000"/><rect x="34" y="70" width="3" height="3" fill="#ff2000"/><rect x="32" y="16" width="3" height="3" fill="#fff"/><rect x="51" y="80" width="3" height="3" fill="#ffe000"/><rect x="37" y="69" width="3" height="3" fill="#ff2000"/><rect x="56" y="30" width="3" height="3" fill="#000"/><rect x="36" y="18" width="3" height="3" fill="#e05000"/><rect x="36" y="18" width="3" height="3" fill="#f8b000"/><rect x="57" y="82" width="3" height="3" fill="#e05000"/><rect x="35" y="63" width="3" height="3" fill="#20c020"/><rect x="37" y="71" width="3" height="3" fill="#e02000"/><rect x="32" y="71" width="3" height="3" fill="#ff2000"/><rect x="67" y="49" width="3" height="3" fill="#ffe000"/><rect x="40" y="33" width="3" height="3" fill="#000"/><rect x="40" y="20" width="3" height="3" fill="#f8b000"/><rect x="35" y="46" width="3" height="3" fill="#ff2000"/><rect x="57" y="26" width="3" height="3" fill="#ffe000"/><rect x="51" y="66" width="3" height="3" fill="#f8b000"/><rect x="68" y="24" width="3" height="3" fill="#ffe000"/><rect x="51" y="54" width="3" height="3" fill="#1020c0"/><rect x="54" y="64" width="3" height="3" fill="#f8b000"/><rect x="65" y="36" width="3" height="3" fill="#ffe000"/><rect x="42" y="41" width="3" height="3" fill="#1020c0"/><rect x="42" y="61" width="3" height="3" fill="#ff2000"/><rect x="69" y="22" width="3" height="3" fill="#e05000"/><rect x="45" y="21" width="3" height="3" fill="#ff2000"/><rect x="65" y="58" width="3" height="3" fill="#ffe000"/><rect x="47" y="62" width="3" height="3" fill="#e05000"/><rect x="42" y="44" width="3" height="3" fill="#f8b000"/><rect x="36" y="18" width="3" height="3" fill="#e05000"/><rect x="48" y="80" width="3" height="3" fill="#e02000"/><rect x="39" y="86" width="3" height="3" fill="#fff"/><rect x="67" y="52" width="3" height="3" fill="#ffe000"/><rect x="48" y="30" width="3" height="3" fill="#ffe000"/><rect x="54" y="35" width="3" height="3" fill="#ffe000"/><rect x="52" y="85" width="3" height="3" fill="#000"/><rect x="50" y="21" width="3" height="3" fill="#e05000"/><rect x="36" y="54" width="3" height="3" fill="#ffe000"/><rect x="71" y="55" width="3" height="3" fill="#f8b000"/><rect x="43" y="55" width="3" height="3" fill="#f0a000"/><rect x="49" y="29" width="3" height="3" fill="#ff2000"/><rect x="68" y="42" width="3" height="3" fill="#ff2000"/><rect x="68" y="38" width="3" height="3" fill="#fff"/><rect x="53" y="24" width="3" height="3" fill="#ffe000"/><rect x="69" y="49" width="3" height="3" fill="#f8b000"/><rect x="68" y="57" width="3" height="3" fill="#ff2000"/><rect x="43" y="70" width="3" height="3" fill="#e02000"/><rect x="62" y="60" width="3" height="3" fill="#e02000"/><rect x="59" y="69" width="3" height="3" fill="#ffe000"/><rect x="37" y="26" width="3" height="3" fill="#ffe000"/><rect x="49" y="61" width="3" height="3" fill="#20c020"/><rect x="38" y="67" width="3" height="3" fill="#ffe000"/><rect x="42" y="40" width="3" height="3" fill="#ffe000"/><rect x="60" y="22" width="3" height="3" fill="#e05000"/><rect x="45" y="59" width="3" height="3" fill="#ff2000"/><rect x="51" y="80" width="3" height="3" fill="#1020c0"/><rect x="43" y="39" width="3" height="3" fill="#1020c0"/><rect x="37" y="45" width="3" height="3" fill="#f8b000"/><rect x="70" y="23" width="3" height="3" fill="#e05000"/><rect x="62" y="69" width="3" height="3" fill="#ffe000"/><rect x="44" y="79" width="3" height="3" fill="#e05000"/><rect x="48" y="78" width="3" height="3" fill="#e05000"/><rect x="45" y="69" width="3" height="3" fill="#ff2000"/><rect x="60" y="60" width="3" height="3" fill="#fff"/><rect x="38" y="51" width="3" height="3" fill="#ffe000"/><rect x="63" y="72" width="3" height="3" fill="#20c020"/><rect x="34" y="54" width="3" height="3" fill="#f8b000"/><rect x="37" y="29" width="3" height="3" fill="#f0a000"/><rect x="65" y="31" width="3" height="3" fill="#fff"/><rect x="57" y="43" width="3" height="3" fill="#ff2000"/><rect x="41" y="34" width="3" height="3" fill="#ffe000"/><rect x="58" y="58" width="3" height="3" fill="#e05000"/><rect x="52" y="46" width="3" height="3" fill="#f8b000"/><rect x="61" y="42" width="3" height="3" fill="#ff2000"/><rect x="62" y="47" width="3" height="3" fill="#e05000"/><rect x="34" y="33" width="3" height="3" fill="#20c020"/><rect x="38" y="17" width="3" height="3" fill="#ffe000"/><rect x="62" y="21" width="3" height="3" fill="#f8b000"/><rect x="49" y="75" width="3" height="3" fill="#f8b000"/><rect x="33" y="74" width="3" height="3" fill="#e05000"/><rect x="56" y="77" width="3" height="3" fill="#ff2000"/><rect x="60" y="79" width="3" height="3" fill="#ff2000"/><rect x="33" y="81" width="3" height="3" fill="#e02000"/><rect x="40" y="18" width="3" height="3" fill="#f8b000"/><rect x="36" y="41" width="3" height="3" fill="#ffe000"/><rect x="41" y="13" width="3" height="3" fill="#f8b000"/><rect x="44" y="69" width="3" height="3" fill="#e02000"/><rect x="69" y="82" width="3" height="3" fill="#e05000"/><rect x="40" y="44" width="3" height="3" fill="#f8b000"/><rect x="48" y="15" width="3" height="3" fill="#f8b000"/><rect x="62" y="66" width="3" height="3" fill="#20c020"/><rect x="59" y="72" width="3" height="3" fill="#1020c0"/><rect x="68" y="74" width="3" height="3" fill="#f8b000"/><rect x="58" y="81" width="3" height="3" fill="#e05000"/><rect x="49" y="28" width="3" height="3" fill="#f8b000"/><rect x="42" y="66" width="3" height="3" fill="#e05000"/><rect x="39" y="54" width="3" height="3" fill="#20c020"/><rect x="46" y="20" width="3" height="3" fill="#ff2000"/><rect x="46" y="24" width="3" height="3" fill="#ffe000"/><rect x="32" y="24" width="3" height="3" fill="#f8b000"/><rect x="36" y="13" width="3" height="3" fill="#ff2000"/><rect x="69" y="77" width="3" height="3" fill="#f8b000"/><rect x="35" y="25" width="3" height="3" fill="#ffe000"/><rect x="34" y="59" width="3" height="3" fill="#e05000"/><rect x="51" y="75" width="3" height="3" fill="#f8b000"/><rect x="56" y="54" width="3" height="3" fill="#ffe000"/><rect x="49" y="47" width="3" height="3" fill="#fff"/><rect x="41" y="36" width="3" height="3" fill="#fff"/><rect x="35" y="54" width="3" height="3" fill="#ffe000"/><rect x="58" y="59" width="3" height="3" fill="#ffe000"/><rect x="48" y="38" width="3" height="3" fill="#20c020"/><rect x="1" y="89" width="72" height="6" fill="#000"/><rect x="55" y="90" width="3" height="2" fill="#20c"/><rect x="65" y="93" width="3" height="2" fill="#20c"/><rect x="5" y="91" width="3" height="2" fill="#2c2"/><rect x="17" y="90" width="3" height="2" fill="#2c2"/><rect x="21" y="91" width="3" height="2" fill="#20c"/><rect x="68" y="91" width="3" height="2" fill="#fff"/><rect x="59" y="91" width="3" height="2" fill="#20c"/><rect x="65" y="90" width="3" height="2" fill="#20c"/><rect x="13" y="92" width="3" height="2" fill="#2c2"/><rect x="8" y="90" width="3" height="2" fill="#c22"/><rect x="26" y="89" width="3" height="2" fill="#fff"/><rect x="9" y="92" width="3" height="2" fill="#fff"/><rect x="4" y="93" width="3" height="2" fill="#20c"/><rect x="42" y="93" width="3" height="2" fill="#fff"/></svg>
<div class="t" style="left:685.0px;top:219.0px;width:120px;text-align:center;font-size:16px;line-height:16px;color:#dcdcdc;font-family:'Liberation Sans';">digdug2.avi</div>
<div class="a" style="left:262px;top:466px;width:2119px;height:38px;background:#474747;border-top:2px solid #6e6e6e"></div>
<div class="t" style="left:265px;top:469.0px;font-size:16px;line-height:16px;color:#dcdcdc;font-family:'Liberation Sans';">Offline Media File</div>
<div class="a" style="left:4px;top:504px;width:2377px;height:27px;background:#232323;"></div>
<div class="a" style="left:6px;top:505px;width:172px;height:26px;background:#434343;"></div>
<div class="t" style="left:17px;top:509.5px;font-size:16px;line-height:16px;color:#d0d0d0;font-family:'Liberation Sans';">Project Media</div>
<div class="a" style="left:180px;top:505px;width:135px;height:26px;background:#333333;"></div>
<div class="t" style="left:191px;top:509.5px;font-size:16px;line-height:16px;color:#d0d0d0;font-family:'Liberation Sans';">Explorer</div>
<div class="a" style="left:316px;top:505px;width:154px;height:26px;background:#333333;"></div>
<div class="t" style="left:327px;top:509.5px;font-size:16px;line-height:16px;color:#d0d0d0;font-family:'Liberation Sans';">Transitions</div>
<div class="a" style="left:471px;top:505px;width:137px;height:26px;background:#333333;"></div>
<div class="t" style="left:482px;top:509.5px;font-size:16px;line-height:16px;color:#d0d0d0;font-family:'Liberation Sans';">Video FX</div>
<div class="a" style="left:609px;top:505px;width:203px;height:26px;background:#333333;"></div>
<div class="t" style="left:620px;top:509.5px;font-size:16px;line-height:16px;color:#d0d0d0;font-family:'Liberation Sans';">Media Generators</div>
<div class="a" style="left:125px;top:511px;width:14px;height:13px;background:transparent;border:2px solid #ddd;border-top-width:3px"></div>
<svg class="a" style="left:153px;top:511px;" width="14" height="14" viewBox="0 0 14 14"><path d="M2 2 L12 12 M12 2 L2 12" stroke="#eee" stroke-width="2.5"/></svg>
<div class="a" style="left:2381px;top:56px;width:10px;height:475px;background:#232323;"></div>
<div class="a" style="left:2391px;top:56px;width:1434px;height:45px;background:#464646;border-top:2px solid #6e6e6e"></div>
<div class="a" style="left:2391px;top:101px;width:1434px;height:312px;background:#2d2d2d;"></div>
<svg class="a" style="left:2398px;top:69px;" width="22" height="22" viewBox="0 0 22 22"><polygon points="21.5,11.0 17.9,13.9 18.4,18.4 13.9,17.9 11.0,21.5 8.1,17.9 3.6,18.4 4.1,13.9 0.5,11.0 4.1,8.1 3.6,3.6 8.1,4.1 11.0,0.5 13.9,4.1 18.4,3.6 17.9,8.1" fill="#f2f2f2" stroke="#222" stroke-width="0.8"/><circle cx="11" cy="11" r="3.5" fill="#444"/></svg>
<svg class="a" style="left:2435px;top:69px;" width="22" height="22" viewBox="0 0 22 22"><rect x="6" y="1" width="15" height="12" fill="#f2f2f2" stroke="#222"/><rect x="1" y="6" width="15" height="12" fill="#f2f2f2" stroke="#222"/><rect x="4" y="9" width="9" height="2" fill="#444"/><rect x="4" y="13" width="9" height="2" fill="#444"/><rect x="4" y="19" width="12" height="2" fill="#ddd"/></svg>
<div class="t" style="left:2470px;top:68.0px;font-size:22px;line-height:22px;color:#eee;font-family:'Liberation Serif';"><i>fx</i></div>
<div class="a" style="left:2503px;top:66px;width:28px;height:28px;background:#3aa0e8;"></div>
<svg class="a" style="left:2507px;top:70px;" width="20" height="20" viewBox="0 0 20 20"><rect x="1.5" y="1.5" width="17" height="17" fill="#2a2a2a" stroke="#fff" stroke-width="1.8"/><path d="M10 1 L10 19" stroke="#fff" stroke-width="1.5"/><path d="M8 6 L4 10 L8 14 Z M12 6 L16 10 L12 14 Z" fill="#fff"/></svg>
<svg class="a" style="left:2540px;top:78px;" width="11" height="6" viewBox="0 0 11 6"><path d="M0 0 L11 0 L5.5 6 Z" fill="#ddd"/></svg>
<div class="t" style="left:2560px;top:71.0px;font-size:18px;line-height:18px;color:#dcdcdc;font-family:'Liberation Sans';">Preview (Auto)</div>
<svg class="a" style="left:2691px;top:78px;" width="11" height="6" viewBox="0 0 11 6"><path d="M0 0 L11 0 L5.5 6 Z" fill="#ddd"/></svg>
<svg class="a" style="left:2715px;top:69px;" width="22" height="22" viewBox="0 0 22 22"><rect x="2" y="1" width="2" height="20" fill="#f2f2f2"/><rect x="1" y="2" width="20" height="2" fill="#f2f2f2"/><rect x="8" y="1" width="2" height="20" fill="#f2f2f2"/><rect x="1" y="8" width="20" height="2" fill="#f2f2f2"/><rect x="14" y="1" width="2" height="20" fill="#f2f2f2"/><rect x="1" y="14" width="20" height="2" fill="#f2f2f2"/><rect x="20" y="1" width="2" height="20" fill="#f2f2f2"/><rect x="1" y="20" width="20" height="2" fill="#f2f2f2"/></svg>
<svg class="a" style="left:2749px;top:78px;" width="11" height="6" viewBox="0 0 11 6"><path d="M0 0 L11 0 L5.5 6 Z" fill="#ddd"/></svg>
<svg class="a" style="left:2773px;top:69px;" width="22" height="22" viewBox="0 0 22 22"><rect x="1" y="1" width="11" height="15" fill="#f2f2f2" stroke="#222"/><rect x="9" y="7" width="12" height="14" fill="#f2f2f2" stroke="#222"/><rect x="12" y="10" width="6" height="2" fill="#666"/></svg>
<svg class="a" style="left:2809px;top:69px;" width="22" height="22" viewBox="0 0 22 22"><rect x="1" y="1" width="20" height="20" fill="#68b4d8" stroke="#222"/><rect x="5" y="2" width="12" height="7" fill="#f4f4f4"/><rect x="5" y="13" width="12" height="8" fill="#f4f4f4"/><rect x="9" y="15" width="4" height="6" fill="#222"/></svg>
<svg class="a" style="left:2846px;top:69px;" width="22" height="22" viewBox="0 0 22 22"><circle cx="11" cy="11" r="8" fill="none" stroke="#5a5a5a" stroke-width="1.5" stroke-dasharray="3 2"/><text x="11" y="15" font-size="9" fill="#5a5a5a" text-anchor="middle" font-family="Liberation Sans">10</text></svg>
<div class="a" style="left:2830px;top:101px;width:556px;height:312px;background:#000;"></div>
<svg class="a" style="left:2986px;top:101px;" width="244" height="312" viewBox="0 0 244 312"><rect x="0" y="0" width="244" height="42" fill="#0b1fae"/><rect x="0" y="42" width="244" height="64" fill="#fbb400"/><rect x="0" y="106" width="244" height="69" fill="#e27a04"/><rect x="0" y="175" width="244" height="69" fill="#c84008"/><rect x="0" y="244" width="244" height="50" fill="#a40600"/><rect x="0" y="294" width="244" height="18" fill="#000"/><rect x="106" y="42" width="14" height="122" rx="6" fill="#000"/><rect x="52" y="158" width="84" height="15" rx="6" fill="#000"/><rect x="177" y="71" width="46" height="15" rx="6" fill="#000"/><rect x="123" y="89" width="15" height="47" rx="6" fill="#000"/><rect x="20" y="123" width="48" height="14" rx="6" fill="#000"/><rect x="89" y="194" width="14" height="46" rx="6" fill="#000"/><rect x="142" y="245" width="47" height="14" rx="6" fill="#000"/><path d="M35 85 Q36 73 43 72 Q51 73 51 85 Z" fill="#8a5424"/><path d="M192 153 Q193 141 200 140 Q208 141 208 153 Z" fill="#8a5424"/><path d="M52 206 Q53 194 60 193 Q68 194 68 206 Z" fill="#8a5424"/><path d="M209 240 Q210 228 217 227 Q225 228 225 240 Z" fill="#8a5424"/><circle cx="131" cy="99" r="7" fill="#e02010"/><rect x="125" y="95" width="12" height="6" fill="#f8e060"/><rect x="128" y="96" width="2" height="3" fill="#000"/><rect x="132" y="96" width="2" height="3" fill="#000"/><circle cx="61" cy="129" r="7" fill="#e02010"/><rect x="55" y="125" width="12" height="6" fill="#f8e060"/><rect x="58" y="126" width="2" height="3" fill="#000"/><rect x="62" y="126" width="2" height="3" fill="#000"/><circle cx="95" cy="204" r="7" fill="#e02010"/><rect x="89" y="200" width="12" height="6" fill="#f8e060"/><rect x="92" y="201" width="2" height="3" fill="#000"/><rect x="96" y="201" width="2" height="3" fill="#000"/><circle cx="185" cy="79" r="7" fill="#20b020"/><rect x="180" y="74" width="7" height="5" fill="#ddd"/><rect x="177" y="80" width="4" height="4" fill="#e02010"/><circle cx="151" cy="251" r="7" fill="#20b020"/><rect x="146" y="246" width="7" height="5" fill="#ddd"/><rect x="143" y="252" width="4" height="4" fill="#e02010"/><circle cx="59" cy="165" r="7" fill="#f0f0ff"/><rect x="54" y="163" width="10" height="4" fill="#2040e0"/><rect x="51" y="166" width="4" height="4" fill="#e02010"/><text x="28" y="10" font-family="Liberation Mono" font-weight="bold" font-size="11" fill="#e02020" textLength="138">1UP  HIGH SCORE</text><text x="44" y="18" font-family="Liberation Mono" font-weight="bold" font-size="10" fill="#fff">00</text><text x="106" y="18" font-family="Liberation Mono" font-weight="bold" font-size="10" fill="#fff">10000</text><text x="192" y="303" font-family="Liberation Sans" font-weight="bold" font-size="10" fill="#fff">ROUND</text><text x="214" y="311" font-family="Liberation Sans" font-weight="bold" font-size="8" fill="#fff">1</text><rect x="3" y="297" width="12" height="14" rx="3" fill="#dde"/><rect x="19" y="297" width="12" height="14" rx="3" fill="#dde"/><rect x="5" y="302" width="8" height="3" fill="#2040e0"/><rect x="21" y="302" width="8" height="3" fill="#2040e0"/></svg>
<div class="a" style="left:2391px;top:413px;width:1434px;height:92px;background:#474747;border-top:2px solid #777"></div>
<div class="a" style="left:2391px;top:505px;width:1441px;height:26px;background:#232323;"></div>
<div class="a" style="left:3825px;top:56px;width:7px;height:475px;background:#232323;"></div>
<svg class="a" style="left:2940px;top:426px;" width="22" height="22" viewBox="0 0 22 22"><path d="M11 3 A8 8 0 1 1 3 11" fill="none" stroke="#f2f2f2" stroke-width="2.5"/><path d="M1 6 L7 1 L7 9 Z" fill="#f2f2f2"/><path d="M11 7 L11 11 L14 13" stroke="#f2f2f2" stroke-width="1.5" fill="none"/></svg>
<svg class="a" style="left:2977px;top:428px;" width="20" height="18" viewBox="0 0 20 18"><rect x="1" y="2" width="3" height="14" fill="#f2f2f2"/><path d="M7 1 L18 9 L7 17 Z" fill="#f2f2f2"/></svg>
<svg class="a" style="left:3014px;top:427px;" width="18" height="20" viewBox="0 0 18 20"><path d="M1 1 L17 10 L1 19 Z" fill="#f2f2f2"/></svg>
<svg class="a" style="left:3050px;top:428px;" width="18" height="18" viewBox="0 0 18 18"><rect x="2" y="1" width="5" height="16" fill="#f2f2f2"/><rect x="11" y="1" width="5" height="16" fill="#f2f2f2"/></svg>
<div class="a" style="left:3086px;top:428px;width:18px;height:18px;background:#f2f2f2;"></div>
<svg class="a" style="left:3122px;top:428px;" width="18" height="18" viewBox="0 0 18 18"><rect x="1" y="1" width="3" height="16" fill="#f2f2f2"/><path d="M16 1 L5 9 L16 17 Z" fill="#f2f2f2"/></svg>
<svg class="a" style="left:3158px;top:428px;" width="18" height="18" viewBox="0 0 18 18"><rect x="14" y="1" width="3" height="16" fill="#f2f2f2"/><path d="M1 1 L12 9 L1 17 Z" fill="#f2f2f2"/></svg>
<svg class="a" style="left:3193px;top:428px;" width="22" height="18" viewBox="0 0 22 18"><path d="M12 1 L1 9 L12 17 Z" fill="#f2f2f2"/><rect x="14" y="1" width="2.5" height="16" fill="#f2f2f2"/><rect x="18.5" y="1" width="2.5" height="16" fill="#f2f2f2"/></svg>
<svg class="a" style="left:3227px;top:428px;" width="22" height="18" viewBox="0 0 22 18"><rect x="1" y="1" width="2.5" height="16" fill="#f2f2f2"/><rect x="5.5" y="1" width="2.5" height="16" fill="#f2f2f2"/><path d="M10 1 L21 9 L10 17 Z" fill="#f2f2f2"/></svg>
<svg class="a" style="left:3261px;top:428px;" width="20" height="18" viewBox="0 0 20 18"><rect x="1" y="1" width="18" height="3" fill="#f2f2f2"/><rect x="1" y="7.5" width="18" height="3" fill="#f2f2f2"/><rect x="1" y="14" width="18" height="3" fill="#f2f2f2"/></svg>
<div class="t" style="left:2396px;top:466.5px;font-size:16px;line-height:16px;color:#d8d8d8;font-family:'Liberation Sans';">Project:</div>
<div class="t" style="left:2467px;top:466.5px;font-size:16px;line-height:16px;color:#d8d8d8;font-family:'Liberation Sans';">1920x1080x32; 50.000i</div>
<div class="t" style="left:2396px;top:486.0px;font-size:16px;line-height:16px;color:#d8d8d8;font-family:'Liberation Sans';">Preview:</div>
<div class="t" style="left:2467px;top:486.0px;font-size:16px;line-height:16px;color:#ef9a9a;font-family:'Liberation Sans';">480x270x32; 50.000p</div>
<div class="t" style="left:3113px;top:466.5px;font-size:16px;line-height:16px;color:#d8d8d8;font-family:'Liberation Sans';">Frame:</div>
<div class="t" style="left:3183px;top:466.5px;font-size:16px;line-height:16px;color:#d8d8d8;font-family:'Liberation Sans';">2 554</div>
<div class="t" style="left:3113px;top:486.0px;font-size:16px;line-height:16px;color:#d8d8d8;font-family:'Liberation Sans';">Display:</div>
<div class="t" style="left:3183px;top:486.0px;font-size:16px;line-height:16px;color:#ef9a9a;font-family:'Liberation Sans';">370x208x32</div>
<div class="a" style="left:2391px;top:505px;width:198px;height:26px;background:#333333;"></div>
<div class="t" style="left:2403px;top:509.5px;font-size:16px;line-height:16px;color:#d0d0d0;font-family:'Liberation Sans';">VASST StillMotion</div>
<div class="a" style="left:2591px;top:505px;width:175px;height:26px;background:#434343;"></div>
<div class="t" style="left:2603px;top:509.5px;font-size:16px;line-height:16px;color:#d0d0d0;font-family:'Liberation Sans';">Video Preview</div>
<div class="a" style="left:2767px;top:505px;width:133px;height:26px;background:#333333;"></div>
<div class="t" style="left:2779px;top:509.5px;font-size:16px;line-height:16px;color:#d0d0d0;font-family:'Liberation Sans';">Trimmer</div>
<div class="a" style="left:2711px;top:511px;width:14px;height:13px;background:transparent;border:2px solid #ddd;border-top-width:3px"></div>
<svg class="a" style="left:2739px;top:511px;" width="14" height="14" viewBox="0 0 14 14"><path d="M2 2 L12 12 M12 2 L2 12" stroke="#eee" stroke-width="2.5"/></svg>
<div class="a" style="left:4px;top:531px;width:3828px;height:13px;background:#222;"></div>
<div class="a" style="left:4px;top:544px;width:567px;height:72px;background:#444;border-top:2px solid #7a7a7a"></div>
<svg class="a" style="left:8px;top:565.0px;" width="6" height="6" viewBox="0 0 6 6"><circle cx="3" cy="3" r="2.2" fill="none" stroke="#333" stroke-width="1"/></svg>
<svg class="a" style="left:8px;top:572.5px;" width="6" height="6" viewBox="0 0 6 6"><circle cx="3" cy="3" r="2.2" fill="none" stroke="#333" stroke-width="1"/></svg>
<svg class="a" style="left:8px;top:580.0px;" width="6" height="6" viewBox="0 0 6 6"><circle cx="3" cy="3" r="2.2" fill="none" stroke="#333" stroke-width="1"/></svg>
<svg class="a" style="left:8px;top:587.5px;" width="6" height="6" viewBox="0 0 6 6"><circle cx="3" cy="3" r="2.2" fill="none" stroke="#333" stroke-width="1"/></svg>
<svg class="a" style="left:8px;top:595.0px;" width="6" height="6" viewBox="0 0 6 6"><circle cx="3" cy="3" r="2.2" fill="none" stroke="#333" stroke-width="1"/></svg>
<svg class="a" style="left:8px;top:602.5px;" width="6" height="6" viewBox="0 0 6 6"><circle cx="3" cy="3" r="2.2" fill="none" stroke="#333" stroke-width="1"/></svg>
<div class="t" style="left:394px;top:565.6px;font-size:30.7px;line-height:30.7px;color:#e6e6e6;font-family:'Liberation Sans';letter-spacing:0px">00:00:51:02</div>
<div class="a" style="left:571px;top:544px;width:6px;height:1382px;background:#262626;"></div>
<div class="a" style="left:577px;top:544px;width:3234px;height:44px;background:#383838;border-top:2px solid #3e3e3e"></div>
<div class="a" style="left:577px;top:588px;width:3234px;height:27px;background:#2f2f2f;border-top:1px solid #262626"></div>
<svg class="a" style="left:578px;top:578px;" width="12" height="10" viewBox="0 0 12 10"><path d="M0 0 L12 0 L0 10 Z" fill="#f0e000"/></svg>
<div class="a" style="left:578px;top:546px;width:2px;height:12px;background:#5b8fd8;"></div>
<svg class="a" style="left:577px;top:589px;" width="3234" height="26" viewBox="0 0 3234 26"><line x1="1.5" y1="8" x2="1.5" y2="26" stroke="#c8c8c8" stroke-width="1"/><line x1="13.8" y1="19" x2="13.8" y2="25" stroke="#b8b8b8" stroke-width="1.3"/><line x1="26.0" y1="19" x2="26.0" y2="25" stroke="#b8b8b8" stroke-width="1.3"/><line x1="38.3" y1="19" x2="38.3" y2="25" stroke="#b8b8b8" stroke-width="1.3"/><line x1="50.5" y1="19" x2="50.5" y2="25" stroke="#b8b8b8" stroke-width="1.3"/><line x1="62.8" y1="19" x2="62.8" y2="25" stroke="#b8b8b8" stroke-width="1.3"/><line x1="75.0" y1="19" x2="75.0" y2="25" stroke="#b8b8b8" stroke-width="1.3"/><line x1="87.3" y1="19" x2="87.3" y2="25" stroke="#b8b8b8" stroke-width="1.3"/><line x1="99.5" y1="19" x2="99.5" y2="25" stroke="#b8b8b8" stroke-width="1.3"/><line x1="111.8" y1="19" x2="111.8" y2="25" stroke="#b8b8b8" stroke-width="1.3"/><line x1="124.0" y1="19" x2="124.0" y2="25" stroke="#b8b8b8" stroke-width="1.3"/><line x1="136.3" y1="19" x2="136.3" y2="25" stroke="#b8b8b8" stroke-width="1.3"/><line x1="148.5" y1="19" x2="148.5" y2="25" stroke="#b8b8b8" stroke-width="1.3"/><line x1="160.8" y1="19" x2="160.8" y2="25" stroke="#b8b8b8" stroke-width="1.3"/><line x1="173.0" y1="19" x2="173.0" y2="25" stroke="#b8b8b8" stroke-width="1.3"/><line x1="185.3" y1="8" x2="185.3" y2="26" stroke="#c8c8c8" stroke-width="1"/><line x1="197.5" y1="19" x2="197.5" y2="25" stroke="#b8b8b8" stroke-width="1.3"/><line x1="209.8" y1="19" x2="209.8" y2="25" stroke="#b8b8b8" stroke-width="1.3"/><line x1="222.0" y1="19" x2="222.0" y2="25" stroke="#b8b8b8" stroke-width="1.3"/><line x1="234.3" y1="19" x2="234.3" y2="25" stroke="#b8b8b8" stroke-width="1.3"/><line x1="246.5" y1="19" x2="246.5" y2="25" stroke="#b8b8b8" stroke-width="1.3"/><line x1="258.8" y1="19" x2="258.8" y2="25" stroke="#b8b8b8" stroke-width="1.3"/><line x1="271.0" y1="19" x2="271.0" y2="25" stroke="#b8b8b8" stroke-width="1.3"/><line x1="283.3" y1="19" x2="283.3" y2="25" stroke="#b8b8b8" stroke-width="1.3"/><line x1="295.5" y1="19" x2="295.5" y2="25" stroke="#b8b8b8" stroke-width="1.3"/><line x1="307.8" y1="19" x2="307.8" y2="25" stroke="#b8b8b8" stroke-width="1.3"/><line x1="320.0" y1="19" x2="320.0" y2="25" stroke="#b8b8b8" stroke-width="1.3"/><line x1="332.3" y1="19" x2="332.3" y2="25" stroke="#b8b8b8" stroke-width="1.3"/><line x1="344.5" y1="19" x2="344.5" y2="25" stroke="#b8b8b8" stroke-width="1.3"/><line x1="356.8" y1="19" x2="356.8" y2="25" stroke="#b8b8b8" stroke-width="1.3"/><line x1="369.0" y1="8" x2="369.0" y2="26" stroke="#c8c8c8" stroke-width="1"/><line x1="381.3" y1="19" x2="381.3" y2="25" stroke="#b8b8b8" stroke-width="1.3"/><line x1="393.5" y1="19" x2="393.5" y2="25" stroke="#b8b8b8" stroke-width="1.3"/><line x1="405.8" y1="19" x2="405.8" y2="25" stroke="#b8b8b8" stroke-width="1.3"/><line x1="418.0" y1="19" x2="418.0" y2="25" stroke="#b8b8b8" stroke-width="1.3"/><line x1="430.3" y1="19" x2="430.3" y2="25" stroke="#b8b8b8" stroke-width="1.3"/><line x1="442.5" y1="19" x2="442.5" y2="25" stroke="#b8b8b8" stroke-width="1.3"/><line x1="454.8" y1="19" x2="454.8" y2="25" stroke="#b8b8b8" stroke-width="1.3"/><line x1="467.1" y1="19" x2="467.1" y2="25" stroke="#b8b8b8" stroke-width="1.3"/><line x1="479.3" y1="19" x2="479.3" y2="25" stroke="#b8b8b8" stroke-width="1.3"/><line x1="491.6" y1="19" x2="491.6" y2="25" stroke="#b8b8b8" stroke-width="1.3"/><line x1="503.8" y1="19" x2="503.8" y2="25" stroke="#b8b8b8" stroke-width="1.3"/><line x1="516.1" y1="19" x2="516.1" y2="25" stroke="#b8b8b8" stroke-width="1.3"/><line x1="528.3" y1="19" x2="528.3" y2="25" stroke="#b8b8b8" stroke-width="1.3"/><line x1="540.6" y1="19" x2="540.6" y2="25" stroke="#b8b8b8" stroke-width="1.3"/><line x1="552.8" y1="8" x2="552.8" y2="26" stroke="#c8c8c8" stroke-width="1"/><line x1="565.1" y1="19" x2="565.1" y2="25" stroke="#b8b8b8" stroke-width="1.3"/><line x1="577.3" y1="19" x2="577.3" y2="25" stroke="#b8b8b8" stroke-width="1.3"/><line x1="589.6" y1="19" x2="589.6" y2="25" stroke="#b8b8b8" stroke-width="1.3"/><line x1="601.8" y1="19" x2="601.8" y2="25" stroke="#b8b8b8" stroke-width="1.3"/><line x1="614.1" y1="19" x2="614.1" y2="25" stroke="#b8b8b8" stroke-width="1.3"/><line x1="626.3" y1="19" x2="626.3" y2="25" stroke="#b8b8b8" stroke-width="1.3"/><line x1="638.6" y1="19" x2="638.6" y2="25" stroke="#b8b8b8" stroke-width="1.3"/><line x1="650.8" y1="19" x2="650.8" y2="25" stroke="#b8b8b8" stroke-width="1.3"/><line x1="663.1" y1="19" x2="663.1" y2="25" stroke="#b8b8b8" stroke-width="1.3"/><line x1="675.3" y1="19" x2="675.3" y2="25" stroke="#b8b8b8" stroke-width="1.3"/><line x1="687.6" y1="19" x2="687.6" y2="25" stroke="#b8b8b8" stroke-width="1.3"/><line x1="699.8" y1="19" x2="699.8" y2="25" stroke="#b8b8b8" stroke-width="1.3"/><line x1="712.1" y1="19" x2="712.1" y2="25" stroke="#b8b8b8" stroke-width="1.3"/><line x1="724.3" y1="19" x2="724.3" y2="25" stroke="#b8b8b8" stroke-width="1.3"/><line x1="736.6" y1="8" x2="736.6" y2="26" stroke="#c8c8c8" stroke-width="1"/><line x1="748.8" y1="19" x2="748.8" y2="25" stroke="#b8b8b8" stroke-width="1.3"/><line x1="761.1" y1="19" x2="761.1" y2="25" stroke="#b8b8b8" stroke-width="1.3"/><line x1="773.3" y1="19" x2="773.3" y2="25" stroke="#b8b8b8" stroke-width="1.3"/><line x1="785.6" y1="19" x2="785.6" y2="25" stroke="#b8b8b8" stroke-width="1.3"/><line x1="797.8" y1="19" x2="797.8" y2="25" stroke="#b8b8b8" stroke-width="1.3"/><line x1="810.1" y1="19" x2="810.1" y2="25" stroke="#b8b8b8" stroke-width="1.3"/><line x1="822.3" y1="19" x2="822.3" y2="25" stroke="#b8b8b8" stroke-width="1.3"/><line x1="834.6" y1="19" x2="834.6" y2="25" stroke="#b8b8b8" stroke-width="1.3"/><line x1="846.8" y1="19" x2="846.8" y2="25" stroke="#b8b8b8" stroke-width="1.3"/><line x1="859.1" y1="19" x2="859.1" y2="25" stroke="#b8b8b8" stroke-width="1.3"/><line x1="871.3" y1="19" x2="871.3" y2="25" stroke="#b8b8b8" stroke-width="1.3"/><line x1="883.6" y1="19" x2="883.6" y2="25" stroke="#b8b8b8" stroke-width="1.3"/><line x1="895.8" y1="19" x2="895.8" y2="25" stroke="#b8b8b8" stroke-width="1.3"/><line x1="908.1" y1="19" x2="908.1" y2="25" stroke="#b8b8b8" stroke-width="1.3"/><line x1="920.3" y1="8" x2="920.3" y2="26" stroke="#c8c8c8" stroke-width="1"/><line x1="932.6" y1="19" x2="932.6" y2="25" stroke="#b8b8b8" stroke-width="1.3"/><line x1="944.9" y1="19" x2="944.9" y2="25" stroke="#b8b8b8" stroke-width="1.3"/><line x1="957.1" y1="19" x2="957.1" y2="25" stroke="#b8b8b8" stroke-width="1.3"/><line x1="969.4" y1="19" x2="969.4" y2="25" stroke="#b8b8b8" stroke-width="1.3"/><line x1="981.6" y1="19" x2="981.6" y2="25" stroke="#b8b8b8" stroke-width="1.3"/><line x1="993.9" y1="19" x2="993.9" y2="25" stroke="#b8b8b8" stroke-width="1.3"/><line x1="1006.1" y1="19" x2="1006.1" y2="25" stroke="#b8b8b8" stroke-width="1.3"/><line x1="1018.4" y1="19" x2="1018.4" y2="25" stroke="#b8b8b8" stroke-width="1.3"/><line x1="1030.6" y1="19" x2="1030.6" y2="25" stroke="#b8b8b8" stroke-width="1.3"/><line x1="1042.9" y1="19" x2="1042.9" y2="25" stroke="#b8b8b8" stroke-width="1.3"/><line x1="1055.1" y1="19" x2="1055.1" y2="25" stroke="#b8b8b8" stroke-width="1.3"/><line x1="1067.4" y1="19" x2="1067.4" y2="25" stroke="#b8b8b8" stroke-width="1.3"/><line x1="1079.6" y1="19" x2="1079.6" y2="25" stroke="#b8b8b8" stroke-width="1.3"/><line x1="1091.9" y1="19" x2="1091.9" y2="25" stroke="#b8b8b8" stroke-width="1.3"/><line x1="1104.1" y1="8" x2="1104.1" y2="26" stroke="#c8c8c8" stroke-width="1"/><line x1="1116.4" y1="19" x2="1116.4" y2="25" stroke="#b8b8b8" stroke-width="1.3"/><line x1="1128.6" y1="19" x2="1128.6" y2="25" stroke="#b8b8b8" stroke-width="1.3"/><line x1="1140.9" y1="19" x2="1140.9" y2="25" stroke="#b8b8b8" stroke-width="1.3"/><line x1="1153.1" y1="19" x2="1153.1" y2="25" stroke="#b8b8b8" stroke-width="1.3"/><line x1="1165.4" y1="19" x2="1165.4" y2="25" stroke="#b8b8b8" stroke-width="1.3"/><line x1="1177.6" y1="19" x2="1177.6" y2="25" stroke="#b8b8b8" stroke-width="1.3"/><line x1="1189.9" y1="19" x2="1189.9" y2="25" stroke="#b8b8b8" stroke-width="1.3"/><line x1="1202.1" y1="19" x2="1202.1" y2="25" stroke="#b8b8b8" stroke-width="1.3"/><line x1="1214.4" y1="19" x2="1214.4" y2="25" stroke="#b8b8b8" stroke-width="1.3"/><line x1="1226.6" y1="19" x2="1226.6" y2="25" stroke="#b8b8b8" stroke-width="1.3"/><line x1="1238.9" y1="19" x2="1238.9" y2="25" stroke="#b8b8b8" stroke-width="1.3"/><line x1="1251.1" y1="19" x2="1251.1" y2="25" stroke="#b8b8b8" stroke-width="1.3"/><line x1="1263.4" y1="19" x2="1263.4" y2="25" stroke="#b8b8b8" stroke-width="1.3"/><line x1="1275.6" y1="19" x2="1275.6" y2="25" stroke="#b8b8b8" stroke-width="1.3"/><line x1="1287.9" y1="8" x2="1287.9" y2="26" stroke="#c8c8c8" stroke-width="1"/><line x1="1300.1" y1="19" x2="1300.1" y2="25" stroke="#b8b8b8" stroke-width="1.3"/><line x1="1312.4" y1="19" x2="1312.4" y2="25" stroke="#b8b8b8" stroke-width="1.3"/><line x1="1324.6" y1="19" x2="1324.6" y2="25" stroke="#b8b8b8" stroke-width="1.3"/><line x1="1336.9" y1="19" x2="1336.9" y2="25" stroke="#b8b8b8" stroke-width="1.3"/><line x1="1349.1" y1="19" x2="1349.1" y2="25" stroke="#b8b8b8" stroke-width="1.3"/><line x1="1361.4" y1="19" x2="1361.4" y2="25" stroke="#b8b8b8" stroke-width="1.3"/><line x1="1373.6" y1="19" x2="1373.6" y2="25" stroke="#b8b8b8" stroke-width="1.3"/><line x1="1385.9" y1="19" x2="1385.9" y2="25" stroke="#b8b8b8" stroke-width="1.3"/><line x1="1398.2" y1="19" x2="1398.2" y2="25" stroke="#b8b8b8" stroke-width="1.3"/><line x1="1410.4" y1="19" x2="1410.4" y2="25" stroke="#b8b8b8" stroke-width="1.3"/><line x1="1422.7" y1="19" x2="1422.7" y2="25" stroke="#b8b8b8" stroke-width="1.3"/><line x1="1434.9" y1="19" x2="1434.9" y2="25" stroke="#b8b8b8" stroke-width="1.3"/><line x1="1447.2" y1="19" x2="1447.2" y2="25" stroke="#b8b8b8" stroke-width="1.3"/><line x1="1459.4" y1="19" x2="1459.4" y2="25" stroke="#b8b8b8" stroke-width="1.3"/><line x1="1471.7" y1="8" x2="1471.7" y2="26" stroke="#c8c8c8" stroke-width="1"/><line x1="1483.9" y1="19" x2="1483.9" y2="25" stroke="#b8b8b8" stroke-width="1.3"/><line x1="1496.2" y1="19" x2="1496.2" y2="25" stroke="#b8b8b8" stroke-width="1.3"/><line x1="1508.4" y1="19" x2="1508.4" y2="25" stroke="#b8b8b8" stroke-width="1.3"/><line x1="1520.7" y1="19" x2="1520.7" y2="25" stroke="#b8b8b8" stroke-width="1.3"/><line x1="1532.9" y1="19" x2="1532.9" y2="25" stroke="#b8b8b8" stroke-width="1.3"/><line x1="1545.2" y1="19" x2="1545.2" y2="25" stroke="#b8b8b8" stroke-width="1.3"/><line x1="1557.4" y1="19" x2="1557.4" y2="25" stroke="#b8b8b8" stroke-width="1.3"/><line x1="1569.7" y1="19" x2="1569.7" y2="25" stroke="#b8b8b8" stroke-width="1.3"/><line x1="1581.9" y1="19" x2="1581.9" y2="25" stroke="#b8b8b8" stroke-width="1.3"/><line x1="1594.2" y1="19" x2="1594.2" y2="25" stroke="#b8b8b8" stroke-width="1.3"/><line x1="1606.4" y1="19" x2="1606.4" y2="25" stroke="#b8b8b8" stroke-width="1.3"/><line x1="1618.7" y1="19" x2="1618.7" y2="25" stroke="#b8b8b8" stroke-width="1.3"/><line x1="1630.9" y1="19" x2="1630.9" y2="25" stroke="#b8b8b8" stroke-width="1.3"/><line x1="1643.2" y1="19" x2="1643.2" y2="25" stroke="#b8b8b8" stroke-width="1.3"/><line x1="1655.4" y1="8" x2="1655.4" y2="26" stroke="#c8c8c8" stroke-width="1"/><line x1="1667.7" y1="19" x2="1667.7" y2="25" stroke="#b8b8b8" stroke-width="1.3"/><line x1="1679.9" y1="19" x2="1679.9" y2="25" stroke="#b8b8b8" stroke-width="1.3"/><line x1="1692.2" y1="19" x2="1692.2" y2="25" stroke="#b8b8b8" stroke-width="1.3"/><line x1="1704.4" y1="19" x2="1704.4" y2="25" stroke="#b8b8b8" stroke-width="1.3"/><line x1="1716.7" y1="19" x2="1716.7" y2="25" stroke="#b8b8b8" stroke-width="1.3"/><line x1="1728.9" y1="19" x2="1728.9" y2="25" stroke="#b8b8b8" stroke-width="1.3"/><line x1="1741.2" y1="19" x2="1741.2" y2="25" stroke="#b8b8b8" stroke-width="1.3"/><line x1="1753.4" y1="19" x2="1753.4" y2="25" stroke="#b8b8b8" stroke-width="1.3"/><line x1="1765.7" y1="19" x2="1765.7" y2="25" stroke="#b8b8b8" stroke-width="1.3"/><line x1="1777.9" y1="19" x2="1777.9" y2="25" stroke="#b8b8b8" stroke-width="1.3"/><line x1="1790.2" y1="19" x2="1790.2" y2="25" stroke="#b8b8b8" stroke-width="1.3"/><line x1="1802.4" y1="19" x2="1802.4" y2="25" stroke="#b8b8b8" stroke-width="1.3"/><line x1="1814.7" y1="19" x2="1814.7" y2="25" stroke="#b8b8b8" stroke-width="1.3"/><line x1="1826.9" y1="19" x2="1826.9" y2="25" stroke="#b8b8b8" stroke-width="1.3"/><line x1="1839.2" y1="8" x2="1839.2" y2="26" stroke="#c8c8c8" stroke-width="1"/><line x1="1851.5" y1="19" x2="1851.5" y2="25" stroke="#b8b8b8" stroke-width="1.3"/><line x1="1863.7" y1="19" x2="1863.7" y2="25" stroke="#b8b8b8" stroke-width="1.3"/><line x1="1876.0" y1="19" x2="1876.0" y2="25" stroke="#b8b8b8" stroke-width="1.3"/><line x1="1888.2" y1="19" x2="1888.2" y2="25" stroke="#b8b8b8" stroke-width="1.3"/><line x1="1900.5" y1="19" x2="1900.5" y2="25" stroke="#b8b8b8" stroke-width="1.3"/><line x1="1912.7" y1="19" x2="1912.7" y2="25" stroke="#b8b8b8" stroke-width="1.3"/><line x1="1925.0" y1="19" x2="1925.0" y2="25" stroke="#b8b8b8" stroke-width="1.3"/><line x1="1937.2" y1="19" x2="1937.2" y2="25" stroke="#b8b8b8" stroke-width="1.3"/><line x1="1949.5" y1="19" x2="1949.5" y2="25" stroke="#b8b8b8" stroke-width="1.3"/><line x1="1961.7" y1="19" x2="1961.7" y2="25" stroke="#b8b8b8" stroke-width="1.3"/><line x1="1974.0" y1="19" x2="1974.0" y2="25" stroke="#b8b8b8" stroke-width="1.3"/><line x1="1986.2" y1="19" x2="1986.2" y2="25" stroke="#b8b8b8" stroke-width="1.3"/><line x1="1998.5" y1="19" x2="1998.5" y2="25" stroke="#b8b8b8" stroke-width="1.3"/><line x1="2010.7" y1="19" x2="2010.7" y2="25" stroke="#b8b8b8" stroke-width="1.3"/><line x1="2023.0" y1="8" x2="2023.0" y2="26" stroke="#c8c8c8" stroke-width="1"/><line x1="2035.2" y1="19" x2="2035.2" y2="25" stroke="#b8b8b8" stroke-width="1.3"/><line x1="2047.5" y1="19" x2="2047.5" y2="25" stroke="#b8b8b8" stroke-width="1.3"/><line x1="2059.7" y1="19" x2="2059.7" y2="25" stroke="#b8b8b8" stroke-width="1.3"/><line x1="2072.0" y1="19" x2="2072.0" y2="25" stroke="#b8b8b8" stroke-width="1.3"/><line x1="2084.2" y1="19" x2="2084.2" y2="25" stroke="#b8b8b8" stroke-width="1.3"/><line x1="2096.5" y1="19" x2="2096.5" y2="25" stroke="#b8b8b8" stroke-width="1.3"/><line x1="2108.7" y1="19" x2="2108.7" y2="25" stroke="#b8b8b8" stroke-width="1.3"/><line x1="2121.0" y1="19" x2="2121.0" y2="25" stroke="#b8b8b8" stroke-width="1.3"/><line x1="2133.2" y1="19" x2="2133.2" y2="25" stroke="#b8b8b8" stroke-width="1.3"/><line x1="2145.5" y1="19" x2="2145.5" y2="25" stroke="#b8b8b8" stroke-width="1.3"/><line x1="2157.7" y1="19" x2="2157.7" y2="25" stroke="#b8b8b8" stroke-width="1.3"/><line x1="2170.0" y1="19" x2="2170.0" y2="25" stroke="#b8b8b8" stroke-width="1.3"/><line x1="2182.2" y1="19" x2="2182.2" y2="25" stroke="#b8b8b8" stroke-width="1.3"/><line x1="2194.5" y1="19" x2="2194.5" y2="25" stroke="#b8b8b8" stroke-width="1.3"/><line x1="2206.7" y1="8" x2="2206.7" y2="26" stroke="#c8c8c8" stroke-width="1"/><line x1="2219.0" y1="19" x2="2219.0" y2="25" stroke="#b8b8b8" stroke-width="1.3"/><line x1="2231.2" y1="19" x2="2231.2" y2="25" stroke="#b8b8b8" stroke-width="1.3"/><line x1="2243.5" y1="19" x2="2243.5" y2="25" stroke="#b8b8b8" stroke-width="1.3"/><line x1="2255.7" y1="19" x2="2255.7" y2="25" stroke="#b8b8b8" stroke-width="1.3"/><line x1="2268.0" y1="19" x2="2268.0" y2="25" stroke="#b8b8b8" stroke-width="1.3"/><line x1="2280.2" y1="19" x2="2280.2" y2="25" stroke="#b8b8b8" stroke-width="1.3"/><line x1="2292.5" y1="19" x2="2292.5" y2="25" stroke="#b8b8b8" stroke-width="1.3"/><line x1="2304.8" y1="19" x2="2304.8" y2="25" stroke="#b8b8b8" stroke-width="1.3"/><line x1="2317.0" y1="19" x2="2317.0" y2="25" stroke="#b8b8b8" stroke-width="1.3"/><line x1="2329.3" y1="19" x2="2329.3" y2="25" stroke="#b8b8b8" stroke-width="1.3"/><line x1="2341.5" y1="19" x2="2341.5" y2="25" stroke="#b8b8b8" stroke-width="1.3"/><line x1="2353.8" y1="19" x2="2353.8" y2="25" stroke="#b8b8b8" stroke-width="1.3"/><line x1="2366.0" y1="19" x2="2366.0" y2="25" stroke="#b8b8b8" stroke-width="1.3"/><line x1="2378.3" y1="19" x2="2378.3" y2="25" stroke="#b8b8b8" stroke-width="1.3"/><line x1="2390.5" y1="8" x2="2390.5" y2="26" stroke="#c8c8c8" stroke-width="1"/><line x1="2402.8" y1="19" x2="2402.8" y2="25" stroke="#b8b8b8" stroke-width="1.3"/><line x1="2415.0" y1="19" x2="2415.0" y2="25" stroke="#b8b8b8" stroke-width="1.3"/><line x1="2427.3" y1="19" x2="2427.3" y2="25" stroke="#b8b8b8" stroke-width="1.3"/><line x1="2439.5" y1="19" x2="2439.5" y2="25" stroke="#b8b8b8" stroke-width="1.3"/><line x1="2451.8" y1="19" x2="2451.8" y2="25" stroke="#b8b8b8" stroke-width="1.3"/><line x1="2464.0" y1="19" x2="2464.0" y2="25" stroke="#b8b8b8" stroke-width="1.3"/><line x1="2476.3" y1="19" x2="2476.3" y2="25" stroke="#b8b8b8" stroke-width="1.3"/><line x1="2488.5" y1="19" x2="2488.5" y2="25" stroke="#b8b8b8" stroke-width="1.3"/><line x1="2500.8" y1="19" x2="2500.8" y2="25" stroke="#b8b8b8" stroke-width="1.3"/><line x1="2513.0" y1="19" x2="2513.0" y2="25" stroke="#b8b8b8" stroke-width="1.3"/><line x1="2525.3" y1="19" x2="2525.3" y2="25" stroke="#b8b8b8" stroke-width="1.3"/><line x1="2537.5" y1="19" x2="2537.5" y2="25" stroke="#b8b8b8" stroke-width="1.3"/><line x1="2549.8" y1="19" x2="2549.8" y2="25" stroke="#b8b8b8" stroke-width="1.3"/><line x1="2562.0" y1="19" x2="2562.0" y2="25" stroke="#b8b8b8" stroke-width="1.3"/><line x1="2574.3" y1="8" x2="2574.3" y2="26" stroke="#c8c8c8" stroke-width="1"/><line x1="2586.5" y1="19" x2="2586.5" y2="25" stroke="#b8b8b8" stroke-width="1.3"/><line x1="2598.8" y1="19" x2="2598.8" y2="25" stroke="#b8b8b8" stroke-width="1.3"/><line x1="2611.0" y1="19" x2="2611.0" y2="25" stroke="#b8b8b8" stroke-width="1.3"/><line x1="2623.3" y1="19" x2="2623.3" y2="25" stroke="#b8b8b8" stroke-width="1.3"/><line x1="2635.5" y1="19" x2="2635.5" y2="25" stroke="#b8b8b8" stroke-width="1.3"/><line x1="2647.8" y1="19" x2="2647.8" y2="25" stroke="#b8b8b8" stroke-width="1.3"/><line x1="2660.0" y1="19" x2="2660.0" y2="25" stroke="#b8b8b8" stroke-width="1.3"/><line x1="2672.3" y1="19" x2="2672.3" y2="25" stroke="#b8b8b8" stroke-width="1.3"/><line x1="2684.5" y1="19" x2="2684.5" y2="25" stroke="#b8b8b8" stroke-width="1.3"/><line x1="2696.8" y1="19" x2="2696.8" y2="25" stroke="#b8b8b8" stroke-width="1.3"/><line x1="2709.0" y1="19" x2="2709.0" y2="25" stroke="#b8b8b8" stroke-width="1.3"/><line x1="2721.3" y1="19" x2="2721.3" y2="25" stroke="#b8b8b8" stroke-width="1.3"/><line x1="2733.5" y1="19" x2="2733.5" y2="25" stroke="#b8b8b8" stroke-width="1.3"/><line x1="2745.8" y1="19" x2="2745.8" y2="25" stroke="#b8b8b8" stroke-width="1.3"/><line x1="2758.1" y1="8" x2="2758.1" y2="26" stroke="#c8c8c8" stroke-width="1"/><line x1="2770.3" y1="19" x2="2770.3" y2="25" stroke="#b8b8b8" stroke-width="1.3"/><line x1="2782.6" y1="19" x2="2782.6" y2="25" stroke="#b8b8b8" stroke-width="1.3"/><line x1="2794.8" y1="19" x2="2794.8" y2="25" stroke="#b8b8b8" stroke-width="1.3"/><line x1="2807.1" y1="19" x2="2807.1" y2="25" stroke="#b8b8b8" stroke-width="1.3"/><line x1="2819.3" y1="19" x2="2819.3" y2="25" stroke="#b8b8b8" stroke-width="1.3"/><line x1="2831.6" y1="19" x2="2831.6" y2="25" stroke="#b8b8b8" stroke-width="1.3"/><line x1="2843.8" y1="19" x2="2843.8" y2="25" stroke="#b8b8b8" stroke-width="1.3"/><line x1="2856.1" y1="19" x2="2856.1" y2="25" stroke="#b8b8b8" stroke-width="1.3"/><line x1="2868.3" y1="19" x2="2868.3" y2="25" stroke="#b8b8b8" stroke-width="1.3"/><line x1="2880.6" y1="19" x2="2880.6" y2="25" stroke="#b8b8b8" stroke-width="1.3"/><line x1="2892.8" y1="19" x2="2892.8" y2="25" stroke="#b8b8b8" stroke-width="1.3"/><line x1="2905.1" y1="19" x2="2905.1" y2="25" stroke="#b8b8b8" stroke-width="1.3"/><line x1="2917.3" y1="19" x2="2917.3" y2="25" stroke="#b8b8b8" stroke-width="1.3"/><line x1="2929.6" y1="19" x2="2929.6" y2="25" stroke="#b8b8b8" stroke-width="1.3"/><line x1="2941.8" y1="8" x2="2941.8" y2="26" stroke="#c8c8c8" stroke-width="1"/><line x1="2954.1" y1="19" x2="2954.1" y2="25" stroke="#b8b8b8" stroke-width="1.3"/><line x1="2966.3" y1="19" x2="2966.3" y2="25" stroke="#b8b8b8" stroke-width="1.3"/><line x1="2978.6" y1="19" x2="2978.6" y2="25" stroke="#b8b8b8" stroke-width="1.3"/><line x1="2990.8" y1="19" x2="2990.8" y2="25" stroke="#b8b8b8" stroke-width="1.3"/><line x1="3003.1" y1="19" x2="3003.1" y2="25" stroke="#b8b8b8" stroke-width="1.3"/><line x1="3015.3" y1="19" x2="3015.3" y2="25" stroke="#b8b8b8" stroke-width="1.3"/><line x1="3027.6" y1="19" x2="3027.6" y2="25" stroke="#b8b8b8" stroke-width="1.3"/><line x1="3039.8" y1="19" x2="3039.8" y2="25" stroke="#b8b8b8" stroke-width="1.3"/><line x1="3052.1" y1="19" x2="3052.1" y2="25" stroke="#b8b8b8" stroke-width="1.3"/><line x1="3064.3" y1="19" x2="3064.3" y2="25" stroke="#b8b8b8" stroke-width="1.3"/><line x1="3076.6" y1="19" x2="3076.6" y2="25" stroke="#b8b8b8" stroke-width="1.3"/><line x1="3088.8" y1="19" x2="3088.8" y2="25" stroke="#b8b8b8" stroke-width="1.3"/><line x1="3101.1" y1="19" x2="3101.1" y2="25" stroke="#b8b8b8" stroke-width="1.3"/><line x1="3113.3" y1="19" x2="3113.3" y2="25" stroke="#b8b8b8" stroke-width="1.3"/><line x1="3125.6" y1="8" x2="3125.6" y2="26" stroke="#c8c8c8" stroke-width="1"/><line x1="3137.8" y1="19" x2="3137.8" y2="25" stroke="#b8b8b8" stroke-width="1.3"/><line x1="3150.1" y1="19" x2="3150.1" y2="25" stroke="#b8b8b8" stroke-width="1.3"/><line x1="3162.3" y1="19" x2="3162.3" y2="25" stroke="#b8b8b8" stroke-width="1.3"/><line x1="3174.6" y1="19" x2="3174.6" y2="25" stroke="#b8b8b8" stroke-width="1.3"/><line x1="3186.8" y1="19" x2="3186.8" y2="25" stroke="#b8b8b8" stroke-width="1.3"/><line x1="3199.1" y1="19" x2="3199.1" y2="25" stroke="#b8b8b8" stroke-width="1.3"/><line x1="3211.3" y1="19" x2="3211.3" y2="25" stroke="#b8b8b8" stroke-width="1.3"/><line x1="3223.6" y1="19" x2="3223.6" y2="25" stroke="#b8b8b8" stroke-width="1.3"/></svg>
<div class="t" style="left:580.0px;top:595.0px;font-size:14px;line-height:14px;color:#c4c4c4;font-family:'Liberation Sans';">00:00:00:00</div>
<div class="t" style="left:763.77px;top:595.0px;font-size:14px;line-height:14px;color:#c4c4c4;font-family:'Liberation Sans';">00:00:30:00</div>
<div class="t" style="left:947.54px;top:595.0px;font-size:14px;line-height:14px;color:#c4c4c4;font-family:'Liberation Sans';">00:01:00:00</div>
<div class="t" style="left:1131.31px;top:595.0px;font-size:14px;line-height:14px;color:#c4c4c4;font-family:'Liberation Sans';">00:01:30:00</div>
<div class="t" style="left:1315.08px;top:595.0px;font-size:14px;line-height:14px;color:#c4c4c4;font-family:'Liberation Sans';">00:02:00:00</div>
<div class="t" style="left:1498.85px;top:595.0px;font-size:14px;line-height:14px;color:#c4c4c4;font-family:'Liberation Sans';">00:02:30:00</div>
<div class="t" style="left:1682.6200000000001px;top:595.0px;font-size:14px;line-height:14px;color:#c4c4c4;font-family:'Liberation Sans';">00:03:00:00</div>
<div class="t" style="left:1866.39px;top:595.0px;font-size:14px;line-height:14px;color:#c4c4c4;font-family:'Liberation Sans';">00:03:30:00</div>
<div class="t" style="left:2050.16px;top:595.0px;font-size:14px;line-height:14px;color:#c4c4c4;font-family:'Liberation Sans';">00:04:00:00</div>
<div class="t" style="left:2233.9300000000003px;top:595.0px;font-size:14px;line-height:14px;color:#c4c4c4;font-family:'Liberation Sans';">00:04:30:00</div>
<div class="t" style="left:2417.7px;top:595.0px;font-size:14px;line-height:14px;color:#c4c4c4;font-family:'Liberation Sans';">00:05:00:00</div>
<div class="t" style="left:2601.4700000000003px;top:595.0px;font-size:14px;line-height:14px;color:#c4c4c4;font-family:'Liberation Sans';">00:05:30:00</div>
<div class="t" style="left:2785.2400000000002px;top:595.0px;font-size:14px;line-height:14px;color:#c4c4c4;font-family:'Liberation Sans';">00:06:00:00</div>
<div class="t" style="left:2969.01px;top:595.0px;font-size:14px;line-height:14px;color:#c4c4c4;font-family:'Liberation Sans';">00:06:30:00</div>
<div class="t" style="left:3152.78px;top:595.0px;font-size:14px;line-height:14px;color:#c4c4c4;font-family:'Liberation Sans';">00:07:00:00</div>
<div class="t" style="left:3336.55px;top:595.0px;font-size:14px;line-height:14px;color:#c4c4c4;font-family:'Liberation Sans';">00:07:30:00</div>
<div class="t" style="left:3520.32px;top:595.0px;font-size:14px;line-height:14px;color:#c4c4c4;font-family:'Liberation Sans';">00:08:00:00</div>
<div class="t" style="left:3704.09px;top:595.0px;font-size:14px;line-height:14px;color:#c4c4c4;font-family:'Liberation Sans';">00:08:30:00</div>
<div class="a" style="left:4px;top:1112px;width:567px;height:814px;background:#252525;"></div>
<div class="a" style="left:577px;top:614px;width:3234px;height:496px;background:#2d2d2d;"></div>
<div class="a" style="left:577px;top:1109px;width:3234px;height:817px;background:#232323;"></div>
<div class="a" style="left:577px;top:1007px;width:3234px;height:4px;background:#262626;"></div>
<div class="a" style="left:577px;top:905px;width:3234px;height:5px;background:#262626;"></div>
<div class="a" style="left:577px;top:809px;width:3234px;height:3px;background:#262626;"></div>
<div class="a" style="left:577px;top:707px;width:3234px;height:3px;background:#262626;"></div>
<div class="a" style="left:4px;top:616px;width:567px;height:496px;background:#1f1f1f;"></div>
<div class="a" style="left:4px;top:616px;width:37px;height:94px;background:#5b74a9;"></div>
<div class="a" style="left:42px;top:616px;width:529px;height:94px;background:#728b98;"></div>
<svg class="a" style="left:12px;top:622px;" width="21" height="21" viewBox="0 0 21 21"><rect x="0.8" y="0.8" width="19" height="4.2" rx="2.1" fill="#fafafa" stroke="#1a1a1a" stroke-width="1.3"/><rect x="0.8" y="8.3" width="19" height="4.2" rx="2.1" fill="#fafafa" stroke="#1a1a1a" stroke-width="1.3"/><rect x="0.8" y="15.8" width="19" height="4.2" rx="2.1" fill="#fafafa" stroke="#1a1a1a" stroke-width="1.3"/></svg>
<div class="t" style="left:11px;top:649.5px;font-size:21px;line-height:21px;color:#f0f0f0;font-family:'Liberation Sans';font-weight:bold;text-shadow:0 0 1.5px #000;transform:scaleX(0.85);transform-origin:left">1</div>
<svg class="a" style="left:21.5px;top:662px;" width="14" height="16" viewBox="0 0 14 16"><path d="M1 1 Q7 3 13 1 L13 15 Q7 13 1 15 Z" fill="#f2f2f2" stroke="#222" stroke-width="1.1"/><rect x="2.5" y="3.0" width="1.5" height="1.5" fill="#555"/><rect x="10" y="3.0" width="1.5" height="1.5" fill="#555"/><rect x="2.5" y="5.8" width="1.5" height="1.5" fill="#555"/><rect x="10" y="5.8" width="1.5" height="1.5" fill="#555"/><rect x="2.5" y="8.6" width="1.5" height="1.5" fill="#555"/><rect x="10" y="8.6" width="1.5" height="1.5" fill="#555"/><rect x="2.5" y="11.4" width="1.5" height="1.5" fill="#555"/><rect x="10" y="11.4" width="1.5" height="1.5" fill="#555"/></svg>
<svg class="a" style="left:499.5px;top:620px;" width="24" height="24" viewBox="0 0 24 24"><circle cx="12" cy="12" r="10.8" fill="#e8949e" stroke="#222" stroke-width="1.5"/><text x="11.5" y="18" font-family="Liberation Sans" font-weight="bold" font-size="15" fill="#1a1a1a" text-anchor="middle">M</text><circle cx="17.5" cy="7" r="5.6" fill="#333" stroke="#222" stroke-width="1"/><circle cx="17.5" cy="7" r="4.4" fill="#3a3a3a" stroke="#e8e8e8" stroke-width="1.8"/><line x1="14.6" y1="4.1" x2="20.4" y2="9.9" stroke="#e8e8e8" stroke-width="1.6"/></svg>
<svg class="a" style="left:535.5px;top:620px;" width="24" height="24" viewBox="0 0 24 24"><circle cx="11.5" cy="12" r="10.8" fill="#c5b468" stroke="#222" stroke-width="1.5"/><text x="11" y="18" font-family="Liberation Sans" font-weight="bold" font-size="16" fill="#2a2418" text-anchor="middle">S</text><rect x="19" y="1" width="4" height="9" fill="#f2f2f2" stroke="#222" stroke-width="0.9"/><rect x="19" y="11" width="4" height="3.4" fill="#f2f2f2" stroke="#222" stroke-width="0.9"/></svg>
<div class="t" style="left:50px;top:656.5px;font-size:17px;line-height:17px;color:#e8e8e8;font-family:'Liberation Sans';">Level: 100.0 %</div>
<div class="a" style="left:188px;top:663px;width:342px;height:4px;background:#5a5a5a;border:1px solid #3a3a3a;border-radius:2px"></div>
<svg class="a" style="left:530px;top:655px;" width="19" height="19" viewBox="0 0 19 19"><rect x="0.5" y="0.5" width="18" height="18" fill="#fff" stroke="#222" stroke-width="1.2"/><rect x="5" y="5" width="3" height="8" fill="#222"/><rect x="11" y="5" width="3" height="8" fill="#222"/></svg>
<div class="a" style="left:4px;top:712px;width:37px;height:100px;background:#7b3240;"></div>
<div class="a" style="left:42px;top:712px;width:529px;height:100px;background:#2b2b2b;"></div>
<svg class="a" style="left:12px;top:718px;" width="21" height="21" viewBox="0 0 21 21"><rect x="0.8" y="0.8" width="19" height="4.2" rx="2.1" fill="#fafafa" stroke="#1a1a1a" stroke-width="1.3"/><rect x="0.8" y="8.3" width="19" height="4.2" rx="2.1" fill="#fafafa" stroke="#1a1a1a" stroke-width="1.3"/><rect x="0.8" y="15.8" width="19" height="4.2" rx="2.1" fill="#fafafa" stroke="#1a1a1a" stroke-width="1.3"/></svg>
<div class="t" style="left:11px;top:748.5px;font-size:21px;line-height:21px;color:#f0f0f0;font-family:'Liberation Sans';font-weight:bold;text-shadow:0 0 1.5px #000;transform:scaleX(0.85);transform-origin:left">2</div>
<svg class="a" style="left:20px;top:761px;" width="13" height="16" viewBox="0 0 13 16"><path d="M1 6 L5 6 L11 1 L11 15 L5 10 L1 10 Z" fill="#f2f2f2" stroke="#222" stroke-width="1"/></svg>
<svg class="a" style="left:469px;top:716px;" width="24" height="24" viewBox="0 0 24 24"><circle cx="12" cy="12" r="10.8" fill="#e8949e" stroke="#222" stroke-width="1.5"/><text x="11.5" y="18" font-family="Liberation Sans" font-weight="bold" font-size="15" fill="#1a1a1a" text-anchor="middle">M</text><circle cx="17.5" cy="7" r="5.6" fill="#333" stroke="#222" stroke-width="1"/><circle cx="17.5" cy="7" r="4.4" fill="#3a3a3a" stroke="#e8e8e8" stroke-width="1.8"/><line x1="14.6" y1="4.1" x2="20.4" y2="9.9" stroke="#e8e8e8" stroke-width="1.6"/></svg>
<svg class="a" style="left:505px;top:716px;" width="24" height="24" viewBox="0 0 24 24"><circle cx="11.5" cy="12" r="10.8" fill="#c5b468" stroke="#222" stroke-width="1.5"/><text x="11" y="18" font-family="Liberation Sans" font-weight="bold" font-size="16" fill="#2a2418" text-anchor="middle">S</text><rect x="19" y="1" width="4" height="9" fill="#f2f2f2" stroke="#222" stroke-width="0.9"/><rect x="19" y="11" width="4" height="3.4" fill="#f2f2f2" stroke="#222" stroke-width="0.9"/></svg>
<div class="t" style="left:50px;top:751.8px;font-size:16.5px;line-height:16.5px;color:#e0e0e0;font-family:'Liberation Sans';">Vol:</div>
<div class="t" style="left:120px;top:751.9px;font-size:16.2px;line-height:16.2px;color:#e0e0e0;font-family:'Liberation Sans';">0.0 dB</div>
<div class="a" style="left:184px;top:759px;width:201px;height:2px;background:#6e6e6e;"></div>
<div class="a" style="left:402px;top:760px;width:116px;height:1.5px;background:#4e4e4e;"></div>
<div class="a" style="left:517px;top:756px;width:1.5px;height:5px;background:#4e4e4e;"></div>
<svg class="a" style="left:385px;top:751px;" width="19" height="19" viewBox="0 0 19 19"><rect x="0.5" y="0.5" width="18" height="18" fill="#fff" stroke="#222" stroke-width="1.2"/><rect x="5" y="5" width="3" height="8" fill="#222"/><rect x="11" y="5" width="3" height="8" fill="#222"/></svg>
<div class="t" style="left:50px;top:784.8px;font-size:16.5px;line-height:16.5px;color:#e0e0e0;font-family:'Liberation Sans';">Pan:</div>
<div class="t" style="left:117px;top:784.9px;font-size:16.2px;line-height:16.2px;color:#e0e0e0;font-family:'Liberation Sans';">Center</div>
<div class="a" style="left:184px;top:795px;width:334px;height:1.5px;background:#4a4a4a;"></div>
<div class="a" style="left:517px;top:791px;width:1.5px;height:5px;background:#4a4a4a;"></div>
<svg class="a" style="left:344px;top:781px;" width="16" height="9" viewBox="0 0 16 9"><path d="M0 0 L16 0 L8 9 Z" fill="#f0f0f0"/></svg>
<div class="a" style="left:540px;top:731px;width:31px;height:81px;background:#232323;"></div>
<div class="t" style="left:534px;top:741.0px;width:30px;text-align:right;font-size:13px;line-height:14px;color:#d8d8d8">27</div>
<div class="t" style="left:534px;top:759.2px;width:30px;text-align:right;font-size:13px;line-height:14px;color:#d8d8d8">54</div>
<div class="t" style="left:534px;top:777.4px;width:30px;text-align:right;font-size:13px;line-height:14px;color:#d8d8d8">81</div>
<div class="t" style="left:534px;top:795.6px;width:30px;text-align:right;font-size:13px;line-height:14px;color:#d8d8d8">108</div>
<svg class="a" style="left:565px;top:734px;" width="4" height="78" viewBox="0 0 4 78"><rect x="1" y="0.0" width="2" height="2" fill="#aaa"/><rect x="1" y="6.1" width="2" height="2" fill="#aaa"/><rect x="1" y="12.2" width="2" height="2" fill="#aaa"/><rect x="1" y="18.3" width="2" height="2" fill="#aaa"/><rect x="1" y="24.4" width="2" height="2" fill="#aaa"/><rect x="1" y="30.5" width="2" height="2" fill="#aaa"/><rect x="1" y="36.6" width="2" height="2" fill="#aaa"/><rect x="1" y="42.7" width="2" height="2" fill="#aaa"/><rect x="1" y="48.8" width="2" height="2" fill="#aaa"/><rect x="1" y="54.9" width="2" height="2" fill="#aaa"/><rect x="1" y="61.0" width="2" height="2" fill="#aaa"/><rect x="1" y="67.1" width="2" height="2" fill="#aaa"/><rect x="1" y="73.2" width="2" height="2" fill="#aaa"/><rect x="1" y="79.3" width="2" height="2" fill="#aaa"/></svg>
<div class="a" style="left:4px;top:814px;width:37px;height:94px;background:#5c9fab;"></div>
<div class="a" style="left:42px;top:814px;width:529px;height:94px;background:#2b2b2b;"></div>
<svg class="a" style="left:12px;top:820px;" width="21" height="21" viewBox="0 0 21 21"><rect x="0.8" y="0.8" width="19" height="4.2" rx="2.1" fill="#fafafa" stroke="#1a1a1a" stroke-width="1.3"/><rect x="0.8" y="8.3" width="19" height="4.2" rx="2.1" fill="#fafafa" stroke="#1a1a1a" stroke-width="1.3"/><rect x="0.8" y="15.8" width="19" height="4.2" rx="2.1" fill="#fafafa" stroke="#1a1a1a" stroke-width="1.3"/></svg>
<div class="t" style="left:11px;top:847.5px;font-size:21px;line-height:21px;color:#f0f0f0;font-family:'Liberation Sans';font-weight:bold;text-shadow:0 0 1.5px #000;transform:scaleX(0.85);transform-origin:left">3</div>
<svg class="a" style="left:21.5px;top:860px;" width="14" height="16" viewBox="0 0 14 16"><path d="M1 1 Q7 3 13 1 L13 15 Q7 13 1 15 Z" fill="#f2f2f2" stroke="#222" stroke-width="1.1"/><rect x="2.5" y="3.0" width="1.5" height="1.5" fill="#555"/><rect x="10" y="3.0" width="1.5" height="1.5" fill="#555"/><rect x="2.5" y="5.8" width="1.5" height="1.5" fill="#555"/><rect x="10" y="5.8" width="1.5" height="1.5" fill="#555"/><rect x="2.5" y="8.6" width="1.5" height="1.5" fill="#555"/><rect x="10" y="8.6" width="1.5" height="1.5" fill="#555"/><rect x="2.5" y="11.4" width="1.5" height="1.5" fill="#555"/><rect x="10" y="11.4" width="1.5" height="1.5" fill="#555"/></svg>
<svg class="a" style="left:499.5px;top:818px;" width="24" height="24" viewBox="0 0 24 24"><circle cx="12" cy="12" r="10.8" fill="#e8949e" stroke="#222" stroke-width="1.5"/><text x="11.5" y="18" font-family="Liberation Sans" font-weight="bold" font-size="15" fill="#1a1a1a" text-anchor="middle">M</text><circle cx="17.5" cy="7" r="5.6" fill="#333" stroke="#222" stroke-width="1"/><circle cx="17.5" cy="7" r="4.4" fill="#3a3a3a" stroke="#e8e8e8" stroke-width="1.8"/><line x1="14.6" y1="4.1" x2="20.4" y2="9.9" stroke="#e8e8e8" stroke-width="1.6"/></svg>
<svg class="a" style="left:535.5px;top:818px;" width="24" height="24" viewBox="0 0 24 24"><circle cx="11.5" cy="12" r="10.8" fill="#c5b468" stroke="#222" stroke-width="1.5"/><text x="11" y="18" font-family="Liberation Sans" font-weight="bold" font-size="16" fill="#2a2418" text-anchor="middle">S</text><rect x="19" y="1" width="4" height="9" fill="#f2f2f2" stroke="#222" stroke-width="0.9"/><rect x="19" y="11" width="4" height="3.4" fill="#f2f2f2" stroke="#222" stroke-width="0.9"/></svg>
<div class="t" style="left:50px;top:854.5px;font-size:17px;line-height:17px;color:#e8e8e8;font-family:'Liberation Sans';">Level: 100.0 %</div>
<div class="a" style="left:188px;top:861px;width:342px;height:4px;background:#5a5a5a;border:1px solid #3a3a3a;border-radius:2px"></div>
<svg class="a" style="left:530px;top:853px;" width="19" height="19" viewBox="0 0 19 19"><rect x="0.5" y="0.5" width="18" height="18" fill="#fff" stroke="#222" stroke-width="1.2"/><rect x="5" y="5" width="3" height="8" fill="#222"/><rect x="11" y="5" width="3" height="8" fill="#222"/></svg>
<div class="a" style="left:4px;top:910px;width:37px;height:100px;background:#5f4287;"></div>
<div class="a" style="left:42px;top:910px;width:529px;height:100px;background:#2b2b2b;"></div>
<svg class="a" style="left:12px;top:916px;" width="21" height="21" viewBox="0 0 21 21"><rect x="0.8" y="0.8" width="19" height="4.2" rx="2.1" fill="#fafafa" stroke="#1a1a1a" stroke-width="1.3"/><rect x="0.8" y="8.3" width="19" height="4.2" rx="2.1" fill="#fafafa" stroke="#1a1a1a" stroke-width="1.3"/><rect x="0.8" y="15.8" width="19" height="4.2" rx="2.1" fill="#fafafa" stroke="#1a1a1a" stroke-width="1.3"/></svg>
<div class="t" style="left:11px;top:946.5px;font-size:21px;line-height:21px;color:#f0f0f0;font-family:'Liberation Sans';font-weight:bold;text-shadow:0 0 1.5px #000;transform:scaleX(0.85);transform-origin:left">4</div>
<svg class="a" style="left:20px;top:959px;" width="13" height="16" viewBox="0 0 13 16"><path d="M1 6 L5 6 L11 1 L11 15 L5 10 L1 10 Z" fill="#f2f2f2" stroke="#222" stroke-width="1"/></svg>
<svg class="a" style="left:469px;top:914px;" width="24" height="24" viewBox="0 0 24 24"><circle cx="12" cy="12" r="10.8" fill="#e8949e" stroke="#222" stroke-width="1.5"/><text x="11.5" y="18" font-family="Liberation Sans" font-weight="bold" font-size="15" fill="#1a1a1a" text-anchor="middle">M</text><circle cx="17.5" cy="7" r="5.6" fill="#333" stroke="#222" stroke-width="1"/><circle cx="17.5" cy="7" r="4.4" fill="#3a3a3a" stroke="#e8e8e8" stroke-width="1.8"/><line x1="14.6" y1="4.1" x2="20.4" y2="9.9" stroke="#e8e8e8" stroke-width="1.6"/></svg>
<svg class="a" style="left:505px;top:914px;" width="24" height="24" viewBox="0 0 24 24"><circle cx="11.5" cy="12" r="10.8" fill="#c5b468" stroke="#222" stroke-width="1.5"/><text x="11" y="18" font-family="Liberation Sans" font-weight="bold" font-size="16" fill="#2a2418" text-anchor="middle">S</text><rect x="19" y="1" width="4" height="9" fill="#f2f2f2" stroke="#222" stroke-width="0.9"/><rect x="19" y="11" width="4" height="3.4" fill="#f2f2f2" stroke="#222" stroke-width="0.9"/></svg>
<div class="t" style="left:50px;top:949.8px;font-size:16.5px;line-height:16.5px;color:#e0e0e0;font-family:'Liberation Sans';">Vol:</div>
<div class="t" style="left:120px;top:949.9px;font-size:16.2px;line-height:16.2px;color:#e0e0e0;font-family:'Liberation Sans';">0.0 dB</div>
<div class="a" style="left:184px;top:957px;width:201px;height:2px;background:#6e6e6e;"></div>
<div class="a" style="left:402px;top:958px;width:116px;height:1.5px;background:#4e4e4e;"></div>
<div class="a" style="left:517px;top:954px;width:1.5px;height:5px;background:#4e4e4e;"></div>
<svg class="a" style="left:385px;top:949px;" width="19" height="19" viewBox="0 0 19 19"><rect x="0.5" y="0.5" width="18" height="18" fill="#fff" stroke="#222" stroke-width="1.2"/><rect x="5" y="5" width="3" height="8" fill="#222"/><rect x="11" y="5" width="3" height="8" fill="#222"/></svg>
<div class="t" style="left:50px;top:982.8px;font-size:16.5px;line-height:16.5px;color:#e0e0e0;font-family:'Liberation Sans';">Pan:</div>
<div class="t" style="left:117px;top:982.9px;font-size:16.2px;line-height:16.2px;color:#e0e0e0;font-family:'Liberation Sans';">Center</div>
<div class="a" style="left:184px;top:993px;width:334px;height:1.5px;background:#4a4a4a;"></div>
<div class="a" style="left:517px;top:989px;width:1.5px;height:5px;background:#4a4a4a;"></div>
<svg class="a" style="left:344px;top:979px;" width="16" height="9" viewBox="0 0 16 9"><path d="M0 0 L16 0 L8 9 Z" fill="#f0f0f0"/></svg>
<div class="a" style="left:540px;top:929px;width:31px;height:81px;background:#232323;"></div>
<div class="t" style="left:534px;top:939.0px;width:30px;text-align:right;font-size:13px;line-height:14px;color:#d8d8d8">27</div>
<div class="t" style="left:534px;top:957.2px;width:30px;text-align:right;font-size:13px;line-height:14px;color:#d8d8d8">54</div>
<div class="t" style="left:534px;top:975.4px;width:30px;text-align:right;font-size:13px;line-height:14px;color:#d8d8d8">81</div>
<div class="t" style="left:534px;top:993.6px;width:30px;text-align:right;font-size:13px;line-height:14px;color:#d8d8d8">108</div>
<svg class="a" style="left:565px;top:932px;" width="4" height="78" viewBox="0 0 4 78"><rect x="1" y="0.0" width="2" height="2" fill="#aaa"/><rect x="1" y="6.1" width="2" height="2" fill="#aaa"/><rect x="1" y="12.2" width="2" height="2" fill="#aaa"/><rect x="1" y="18.3" width="2" height="2" fill="#aaa"/><rect x="1" y="24.4" width="2" height="2" fill="#aaa"/><rect x="1" y="30.5" width="2" height="2" fill="#aaa"/><rect x="1" y="36.6" width="2" height="2" fill="#aaa"/><rect x="1" y="42.7" width="2" height="2" fill="#aaa"/><rect x="1" y="48.8" width="2" height="2" fill="#aaa"/><rect x="1" y="54.9" width="2" height="2" fill="#aaa"/><rect x="1" y="61.0" width="2" height="2" fill="#aaa"/><rect x="1" y="67.1" width="2" height="2" fill="#aaa"/><rect x="1" y="73.2" width="2" height="2" fill="#aaa"/><rect x="1" y="79.3" width="2" height="2" fill="#aaa"/></svg>
<div class="a" style="left:4px;top:1012px;width:37px;height:100px;background:#32897a;"></div>
<div class="a" style="left:42px;top:1012px;width:529px;height:100px;background:#2b2b2b;"></div>
<svg class="a" style="left:12px;top:1018px;" width="21" height="21" viewBox="0 0 21 21"><rect x="0.8" y="0.8" width="19" height="4.2" rx="2.1" fill="#fafafa" stroke="#1a1a1a" stroke-width="1.3"/><rect x="0.8" y="8.3" width="19" height="4.2" rx="2.1" fill="#fafafa" stroke="#1a1a1a" stroke-width="1.3"/><rect x="0.8" y="15.8" width="19" height="4.2" rx="2.1" fill="#fafafa" stroke="#1a1a1a" stroke-width="1.3"/></svg>
<div class="t" style="left:11px;top:1048.5px;font-size:21px;line-height:21px;color:#f0f0f0;font-family:'Liberation Sans';font-weight:bold;text-shadow:0 0 1.5px #000;transform:scaleX(0.85);transform-origin:left">5</div>
<svg class="a" style="left:20px;top:1061px;" width="13" height="16" viewBox="0 0 13 16"><path d="M1 6 L5 6 L11 1 L11 15 L5 10 L1 10 Z" fill="#f2f2f2" stroke="#222" stroke-width="1"/></svg>
<svg class="a" style="left:469px;top:1016px;" width="24" height="24" viewBox="0 0 24 24"><circle cx="12" cy="12" r="10.8" fill="#e8949e" stroke="#222" stroke-width="1.5"/><text x="11.5" y="18" font-family="Liberation Sans" font-weight="bold" font-size="15" fill="#1a1a1a" text-anchor="middle">M</text><circle cx="17.5" cy="7" r="5.6" fill="#333" stroke="#222" stroke-width="1"/><circle cx="17.5" cy="7" r="4.4" fill="#3a3a3a" stroke="#e8e8e8" stroke-width="1.8"/><line x1="14.6" y1="4.1" x2="20.4" y2="9.9" stroke="#e8e8e8" stroke-width="1.6"/></svg>
<svg class="a" style="left:505px;top:1016px;" width="24" height="24" viewBox="0 0 24 24"><circle cx="11.5" cy="12" r="10.8" fill="#c5b468" stroke="#222" stroke-width="1.5"/><text x="11" y="18" font-family="Liberation Sans" font-weight="bold" font-size="16" fill="#2a2418" text-anchor="middle">S</text><rect x="19" y="1" width="4" height="9" fill="#f2f2f2" stroke="#222" stroke-width="0.9"/><rect x="19" y="11" width="4" height="3.4" fill="#f2f2f2" stroke="#222" stroke-width="0.9"/></svg>
<div class="t" style="left:50px;top:1051.8px;font-size:16.5px;line-height:16.5px;color:#e0e0e0;font-family:'Liberation Sans';">Vol:</div>
<div class="t" style="left:120px;top:1051.9px;font-size:16.2px;line-height:16.2px;color:#e0e0e0;font-family:'Liberation Sans';">0.0 dB</div>
<div class="a" style="left:184px;top:1059px;width:201px;height:2px;background:#6e6e6e;"></div>
<div class="a" style="left:402px;top:1060px;width:116px;height:1.5px;background:#4e4e4e;"></div>
<div class="a" style="left:517px;top:1056px;width:1.5px;height:5px;background:#4e4e4e;"></div>
<svg class="a" style="left:385px;top:1051px;" width="19" height="19" viewBox="0 0 19 19"><rect x="0.5" y="0.5" width="18" height="18" fill="#fff" stroke="#222" stroke-width="1.2"/><rect x="5" y="5" width="3" height="8" fill="#222"/><rect x="11" y="5" width="3" height="8" fill="#222"/></svg>
<div class="t" style="left:50px;top:1084.8px;font-size:16.5px;line-height:16.5px;color:#e0e0e0;font-family:'Liberation Sans';">Pan:</div>
<div class="t" style="left:117px;top:1084.9px;font-size:16.2px;line-height:16.2px;color:#e0e0e0;font-family:'Liberation Sans';">Center</div>
<div class="a" style="left:184px;top:1095px;width:334px;height:1.5px;background:#4a4a4a;"></div>
<div class="a" style="left:517px;top:1091px;width:1.5px;height:5px;background:#4a4a4a;"></div>
<svg class="a" style="left:344px;top:1081px;" width="16" height="9" viewBox="0 0 16 9"><path d="M0 0 L16 0 L8 9 Z" fill="#f0f0f0"/></svg>
<div class="a" style="left:540px;top:1031px;width:31px;height:81px;background:#232323;"></div>
<div class="t" style="left:534px;top:1041.0px;width:30px;text-align:right;font-size:13px;line-height:14px;color:#d8d8d8">27</div>
<div class="t" style="left:534px;top:1059.2px;width:30px;text-align:right;font-size:13px;line-height:14px;color:#d8d8d8">54</div>
<div class="t" style="left:534px;top:1077.4px;width:30px;text-align:right;font-size:13px;line-height:14px;color:#d8d8d8">81</div>
<div class="t" style="left:534px;top:1095.6px;width:30px;text-align:right;font-size:13px;line-height:14px;color:#d8d8d8">108</div>
<svg class="a" style="left:565px;top:1034px;" width="4" height="78" viewBox="0 0 4 78"><rect x="1" y="0.0" width="2" height="2" fill="#aaa"/><rect x="1" y="6.1" width="2" height="2" fill="#aaa"/><rect x="1" y="12.2" width="2" height="2" fill="#aaa"/><rect x="1" y="18.3" width="2" height="2" fill="#aaa"/><rect x="1" y="24.4" width="2" height="2" fill="#aaa"/><rect x="1" y="30.5" width="2" height="2" fill="#aaa"/><rect x="1" y="36.6" width="2" height="2" fill="#aaa"/><rect x="1" y="42.7" width="2" height="2" fill="#aaa"/><rect x="1" y="48.8" width="2" height="2" fill="#aaa"/><rect x="1" y="54.9" width="2" height="2" fill="#aaa"/><rect x="1" y="61.0" width="2" height="2" fill="#aaa"/><rect x="1" y="67.1" width="2" height="2" fill="#aaa"/><rect x="1" y="73.2" width="2" height="2" fill="#aaa"/><rect x="1" y="79.3" width="2" height="2" fill="#aaa"/></svg>
<div class="a" style="left:577px;top:614px;width:3125px;height:93px;background:#d9d9d9;border:2px solid #cde41c;border-bottom-width:3px"></div>
<div class="a" style="left:579px;top:616px;width:3121px;height:31px;background:#5b73a9;"></div>
<div class="a" style="left:579px;top:646px;width:3121px;height:2px;background:#3a3a3a;"></div>
<div class="a" style="left:577px;top:710px;width:3125px;height:99px;background:#7b3240;border:3px solid #7db4f5;border-right-width:2px"></div>
<div class="a" style="left:580px;top:744px;width:3119px;height:1px;background:#2a2020;"></div>
<div class="a" style="left:580px;top:775px;width:3119px;height:1px;background:#5a4a4d;"></div>
<div class="a" style="left:577px;top:812px;width:3155px;height:93px;background:#5c9eaa;"></div>
<div class="a" style="left:577px;top:845px;width:3155px;height:2px;background:#2e3e40;"></div>
<div class="a" style="left:577px;top:910px;width:3125px;height:97px;background:#5f4286;"></div>
<div class="a" style="left:577px;top:942px;width:3125px;height:1px;background:#2a2038;"></div>
<div class="a" style="left:577px;top:975px;width:3125px;height:1px;background:#514a60;"></div>
<div class="a" style="left:577px;top:1011px;width:3125px;height:97px;background:#32897a;"></div>
<div class="a" style="left:577px;top:1044px;width:3125px;height:1px;background:#1e3e38;"></div>
<div class="a" style="left:577px;top:1076px;width:3125px;height:1px;background:#4a6a64;"></div>
<svg class="a" style="left:577px;top:616px;" width="3125" height="30" viewBox="0 0 3125 30"><g fill="#8090ff" opacity="0.55"><rect x="185.3" y="0" width="1.2" height="2"/><rect x="185.3" y="5" width="1.2" height="2"/><rect x="185.3" y="10" width="1.2" height="2"/><rect x="185.3" y="15" width="1.2" height="2"/><rect x="185.3" y="20" width="1.2" height="2"/><rect x="185.3" y="25" width="1.2" height="2"/><rect x="369.0" y="0" width="1.2" height="2"/><rect x="369.0" y="5" width="1.2" height="2"/><rect x="369.0" y="10" width="1.2" height="2"/><rect x="369.0" y="15" width="1.2" height="2"/><rect x="369.0" y="20" width="1.2" height="2"/><rect x="369.0" y="25" width="1.2" height="2"/><rect x="552.8" y="0" width="1.2" height="2"/><rect x="552.8" y="5" width="1.2" height="2"/><rect x="552.8" y="10" width="1.2" height="2"/><rect x="552.8" y="15" width="1.2" height="2"/><rect x="552.8" y="20" width="1.2" height="2"/><rect x="552.8" y="25" width="1.2" height="2"/><rect x="736.6" y="0" width="1.2" height="2"/><rect x="736.6" y="5" width="1.2" height="2"/><rect x="736.6" y="10" width="1.2" height="2"/><rect x="736.6" y="15" width="1.2" height="2"/><rect x="736.6" y="20" width="1.2" height="2"/><rect x="736.6" y="25" width="1.2" height="2"/><rect x="920.4" y="0" width="1.2" height="2"/><rect x="920.4" y="5" width="1.2" height="2"/><rect x="920.4" y="10" width="1.2" height="2"/><rect x="920.4" y="15" width="1.2" height="2"/><rect x="920.4" y="20" width="1.2" height="2"/><rect x="920.4" y="25" width="1.2" height="2"/><rect x="1104.1" y="0" width="1.2" height="2"/><rect x="1104.1" y="5" width="1.2" height="2"/><rect x="1104.1" y="10" width="1.2" height="2"/><rect x="1104.1" y="15" width="1.2" height="2"/><rect x="1104.1" y="20" width="1.2" height="2"/><rect x="1104.1" y="25" width="1.2" height="2"/><rect x="1287.9" y="0" width="1.2" height="2"/><rect x="1287.9" y="5" width="1.2" height="2"/><rect x="1287.9" y="10" width="1.2" height="2"/><rect x="1287.9" y="15" width="1.2" height="2"/><rect x="1287.9" y="20" width="1.2" height="2"/><rect x="1287.9" y="25" width="1.2" height="2"/><rect x="1471.7" y="0" width="1.2" height="2"/><rect x="1471.7" y="5" width="1.2" height="2"/><rect x="1471.7" y="10" width="1.2" height="2"/><rect x="1471.7" y="15" width="1.2" height="2"/><rect x="1471.7" y="20" width="1.2" height="2"/><rect x="1471.7" y="25" width="1.2" height="2"/><rect x="1655.4" y="0" width="1.2" height="2"/><rect x="1655.4" y="5" width="1.2" height="2"/><rect x="1655.4" y="10" width="1.2" height="2"/><rect x="1655.4" y="15" width="1.2" height="2"/><rect x="1655.4" y="20" width="1.2" height="2"/><rect x="1655.4" y="25" width="1.2" height="2"/><rect x="1839.2" y="0" width="1.2" height="2"/><rect x="1839.2" y="5" width="1.2" height="2"/><rect x="1839.2" y="10" width="1.2" height="2"/><rect x="1839.2" y="15" width="1.2" height="2"/><rect x="1839.2" y="20" width="1.2" height="2"/><rect x="1839.2" y="25" width="1.2" height="2"/><rect x="2023.0" y="0" width="1.2" height="2"/><rect x="2023.0" y="5" width="1.2" height="2"/><rect x="2023.0" y="10" width="1.2" height="2"/><rect x="2023.0" y="15" width="1.2" height="2"/><rect x="2023.0" y="20" width="1.2" height="2"/><rect x="2023.0" y="25" width="1.2" height="2"/><rect x="2206.7" y="0" width="1.2" height="2"/><rect x="2206.7" y="5" width="1.2" height="2"/><rect x="2206.7" y="10" width="1.2" height="2"/><rect x="2206.7" y="15" width="1.2" height="2"/><rect x="2206.7" y="20" width="1.2" height="2"/><rect x="2206.7" y="25" width="1.2" height="2"/><rect x="2390.5" y="0" width="1.2" height="2"/><rect x="2390.5" y="5" width="1.2" height="2"/><rect x="2390.5" y="10" width="1.2" height="2"/><rect x="2390.5" y="15" width="1.2" height="2"/><rect x="2390.5" y="20" width="1.2" height="2"/><rect x="2390.5" y="25" width="1.2" height="2"/><rect x="2574.3" y="0" width="1.2" height="2"/><rect x="2574.3" y="5" width="1.2" height="2"/><rect x="2574.3" y="10" width="1.2" height="2"/><rect x="2574.3" y="15" width="1.2" height="2"/><rect x="2574.3" y="20" width="1.2" height="2"/><rect x="2574.3" y="25" width="1.2" height="2"/><rect x="2758.1" y="0" width="1.2" height="2"/><rect x="2758.1" y="5" width="1.2" height="2"/><rect x="2758.1" y="10" width="1.2" height="2"/><rect x="2758.1" y="15" width="1.2" height="2"/><rect x="2758.1" y="20" width="1.2" height="2"/><rect x="2758.1" y="25" width="1.2" height="2"/><rect x="2941.8" y="0" width="1.2" height="2"/><rect x="2941.8" y="5" width="1.2" height="2"/><rect x="2941.8" y="10" width="1.2" height="2"/><rect x="2941.8" y="15" width="1.2" height="2"/><rect x="2941.8" y="20" width="1.2" height="2"/><rect x="2941.8" y="25" width="1.2" height="2"/></g></svg>
<svg class="a" style="left:577px;top:648px;" width="3125" height="57" viewBox="0 0 3125 57"><g fill="#ffffff" opacity="0.55"><rect x="185.3" y="0" width="1.2" height="2"/><rect x="185.3" y="5" width="1.2" height="2"/><rect x="185.3" y="10" width="1.2" height="2"/><rect x="185.3" y="15" width="1.2" height="2"/><rect x="185.3" y="20" width="1.2" height="2"/><rect x="185.3" y="25" width="1.2" height="2"/><rect x="185.3" y="30" width="1.2" height="2"/><rect x="185.3" y="35" width="1.2" height="2"/><rect x="185.3" y="40" width="1.2" height="2"/><rect x="185.3" y="45" width="1.2" height="2"/><rect x="185.3" y="50" width="1.2" height="2"/><rect x="185.3" y="55" width="1.2" height="2"/><rect x="369.0" y="0" width="1.2" height="2"/><rect x="369.0" y="5" width="1.2" height="2"/><rect x="369.0" y="10" width="1.2" height="2"/><rect x="369.0" y="15" width="1.2" height="2"/><rect x="369.0" y="20" width="1.2" height="2"/><rect x="369.0" y="25" width="1.2" height="2"/><rect x="369.0" y="30" width="1.2" height="2"/><rect x="369.0" y="35" width="1.2" height="2"/><rect x="369.0" y="40" width="1.2" height="2"/><rect x="369.0" y="45" width="1.2" height="2"/><rect x="369.0" y="50" width="1.2" height="2"/><rect x="369.0" y="55" width="1.2" height="2"/><rect x="552.8" y="0" width="1.2" height="2"/><rect x="552.8" y="5" width="1.2" height="2"/><rect x="552.8" y="10" width="1.2" height="2"/><rect x="552.8" y="15" width="1.2" height="2"/><rect x="552.8" y="20" width="1.2" height="2"/><rect x="552.8" y="25" width="1.2" height="2"/><rect x="552.8" y="30" width="1.2" height="2"/><rect x="552.8" y="35" width="1.2" height="2"/><rect x="552.8" y="40" width="1.2" height="2"/><rect x="552.8" y="45" width="1.2" height="2"/><rect x="552.8" y="50" width="1.2" height="2"/><rect x="552.8" y="55" width="1.2" height="2"/><rect x="736.6" y="0" width="1.2" height="2"/><rect x="736.6" y="5" width="1.2" height="2"/><rect x="736.6" y="10" width="1.2" height="2"/><rect x="736.6" y="15" width="1.2" height="2"/><rect x="736.6" y="20" width="1.2" height="2"/><rect x="736.6" y="25" width="1.2" height="2"/><rect x="736.6" y="30" width="1.2" height="2"/><rect x="736.6" y="35" width="1.2" height="2"/><rect x="736.6" y="40" width="1.2" height="2"/><rect x="736.6" y="45" width="1.2" height="2"/><rect x="736.6" y="50" width="1.2" height="2"/><rect x="736.6" y="55" width="1.2" height="2"/><rect x="920.4" y="0" width="1.2" height="2"/><rect x="920.4" y="5" width="1.2" height="2"/><rect x="920.4" y="10" width="1.2" height="2"/><rect x="920.4" y="15" width="1.2" height="2"/><rect x="920.4" y="20" width="1.2" height="2"/><rect x="920.4" y="25" width="1.2" height="2"/><rect x="920.4" y="30" width="1.2" height="2"/><rect x="920.4" y="35" width="1.2" height="2"/><rect x="920.4" y="40" width="1.2" height="2"/><rect x="920.4" y="45" width="1.2" height="2"/><rect x="920.4" y="50" width="1.2" height="2"/><rect x="920.4" y="55" width="1.2" height="2"/><rect x="1104.1" y="0" width="1.2" height="2"/><rect x="1104.1" y="5" width="1.2" height="2"/><rect x="1104.1" y="10" width="1.2" height="2"/><rect x="1104.1" y="15" width="1.2" height="2"/><rect x="1104.1" y="20" width="1.2" height="2"/><rect x="1104.1" y="25" width="1.2" height="2"/><rect x="1104.1" y="30" width="1.2" height="2"/><rect x="1104.1" y="35" width="1.2" height="2"/><rect x="1104.1" y="40" width="1.2" height="2"/><rect x="1104.1" y="45" width="1.2" height="2"/><rect x="1104.1" y="50" width="1.2" height="2"/><rect x="1104.1" y="55" width="1.2" height="2"/><rect x="1287.9" y="0" width="1.2" height="2"/><rect x="1287.9" y="5" width="1.2" height="2"/><rect x="1287.9" y="10" width="1.2" height="2"/><rect x="1287.9" y="15" width="1.2" height="2"/><rect x="1287.9" y="20" width="1.2" height="2"/><rect x="1287.9" y="25" width="1.2" height="2"/><rect x="1287.9" y="30" width="1.2" height="2"/><rect x="1287.9" y="35" width="1.2" height="2"/><rect x="1287.9" y="40" width="1.2" height="2"/><rect x="1287.9" y="45" width="1.2" height="2"/><rect x="1287.9" y="50" width="1.2" height="2"/><rect x="1287.9" y="55" width="1.2" height="2"/><rect x="1471.7" y="0" width="1.2" height="2"/><rect x="1471.7" y="5" width="1.2" height="2"/><rect x="1471.7" y="10" width="1.2" height="2"/><rect x="1471.7" y="15" width="1.2" height="2"/><rect x="1471.7" y="20" width="1.2" height="2"/><rect x="1471.7" y="25" width="1.2" height="2"/><rect x="1471.7" y="30" width="1.2" height="2"/><rect x="1471.7" y="35" width="1.2" height="2"/><rect x="1471.7" y="40" width="1.2" height="2"/><rect x="1471.7" y="45" width="1.2" height="2"/><rect x="1471.7" y="50" width="1.2" height="2"/><rect x="1471.7" y="55" width="1.2" height="2"/><rect x="1655.4" y="0" width="1.2" height="2"/><rect x="1655.4" y="5" width="1.2" height="2"/><rect x="1655.4" y="10" width="1.2" height="2"/><rect x="1655.4" y="15" width="1.2" height="2"/><rect x="1655.4" y="20" width="1.2" height="2"/><rect x="1655.4" y="25" width="1.2" height="2"/><rect x="1655.4" y="30" width="1.2" height="2"/><rect x="1655.4" y="35" width="1.2" height="2"/><rect x="1655.4" y="40" width="1.2" height="2"/><rect x="1655.4" y="45" width="1.2" height="2"/><rect x="1655.4" y="50" width="1.2" height="2"/><rect x="1655.4" y="55" width="1.2" height="2"/><rect x="1839.2" y="0" width="1.2" height="2"/><rect x="1839.2" y="5" width="1.2" height="2"/><rect x="1839.2" y="10" width="1.2" height="2"/><rect x="1839.2" y="15" width="1.2" height="2"/><rect x="1839.2" y="20" width="1.2" height="2"/><rect x="1839.2" y="25" width="1.2" height="2"/><rect x="1839.2" y="30" width="1.2" height="2"/><rect x="1839.2" y="35" width="1.2" height="2"/><rect x="1839.2" y="40" width="1.2" height="2"/><rect x="1839.2" y="45" width="1.2" height="2"/><rect x="1839.2" y="50" width="1.2" height="2"/><rect x="1839.2" y="55" width="1.2" height="2"/><rect x="2023.0" y="0" width="1.2" height="2"/><rect x="2023.0" y="5" width="1.2" height="2"/><rect x="2023.0" y="10" width="1.2" height="2"/><rect x="2023.0" y="15" width="1.2" height="2"/><rect x="2023.0" y="20" width="1.2" height="2"/><rect x="2023.0" y="25" width="1.2" height="2"/><rect x="2023.0" y="30" width="1.2" height="2"/><rect x="2023.0" y="35" width="1.2" height="2"/><rect x="2023.0" y="40" width="1.2" height="2"/><rect x="2023.0" y="45" width="1.2" height="2"/><rect x="2023.0" y="50" width="1.2" height="2"/><rect x="2023.0" y="55" width="1.2" height="2"/><rect x="2206.7" y="0" width="1.2" height="2"/><rect x="2206.7" y="5" width="1.2" height="2"/><rect x="2206.7" y="10" width="1.2" height="2"/><rect x="2206.7" y="15" width="1.2" height="2"/><rect x="2206.7" y="20" width="1.2" height="2"/><rect x="2206.7" y="25" width="1.2" height="2"/><rect x="2206.7" y="30" width="1.2" height="2"/><rect x="2206.7" y="35" width="1.2" height="2"/><rect x="2206.7" y="40" width="1.2" height="2"/><rect x="2206.7" y="45" width="1.2" height="2"/><rect x="2206.7" y="50" width="1.2" height="2"/><rect x="2206.7" y="55" width="1.2" height="2"/><rect x="2390.5" y="0" width="1.2" height="2"/><rect x="2390.5" y="5" width="1.2" height="2"/><rect x="2390.5" y="10" width="1.2" height="2"/><rect x="2390.5" y="15" width="1.2" height="2"/><rect x="2390.5" y="20" width="1.2" height="2"/><rect x="2390.5" y="25" width="1.2" height="2"/><rect x="2390.5" y="30" width="1.2" height="2"/><rect x="2390.5" y="35" width="1.2" height="2"/><rect x="2390.5" y="40" width="1.2" height="2"/><rect x="2390.5" y="45" width="1.2" height="2"/><rect x="2390.5" y="50" width="1.2" height="2"/><rect x="2390.5" y="55" width="1.2" height="2"/><rect x="2574.3" y="0" width="1.2" height="2"/><rect x="2574.3" y="5" width="1.2" height="2"/><rect x="2574.3" y="10" width="1.2" height="2"/><rect x="2574.3" y="15" width="1.2" height="2"/><rect x="2574.3" y="20" width="1.2" height="2"/><rect x="2574.3" y="25" width="1.2" height="2"/><rect x="2574.3" y="30" width="1.2" height="2"/><rect x="2574.3" y="35" width="1.2" height="2"/><rect x="2574.3" y="40" width="1.2" height="2"/><rect x="2574.3" y="45" width="1.2" height="2"/><rect x="2574.3" y="50" width="1.2" height="2"/><rect x="2574.3" y="55" width="1.2" height="2"/><rect x="2758.1" y="0" width="1.2" height="2"/><rect x="2758.1" y="5" width="1.2" height="2"/><rect x="2758.1" y="10" width="1.2" height="2"/><rect x="2758.1" y="15" width="1.2" height="2"/><rect x="2758.1" y="20" width="1.2" height="2"/><rect x="2758.1" y="25" width="1.2" height="2"/><rect x="2758.1" y="30" width="1.2" height="2"/><rect x="2758.1" y="35" width="1.2" height="2"/><rect x="2758.1" y="40" width="1.2" height="2"/><rect x="2758.1" y="45" width="1.2" height="2"/><rect x="2758.1" y="50" width="1.2" height="2"/><rect x="2758.1" y="55" width="1.2" height="2"/><rect x="2941.8" y="0" width="1.2" height="2"/><rect x="2941.8" y="5" width="1.2" height="2"/><rect x="2941.8" y="10" width="1.2" height="2"/><rect x="2941.8" y="15" width="1.2" height="2"/><rect x="2941.8" y="20" width="1.2" height="2"/><rect x="2941.8" y="25" width="1.2" height="2"/><rect x="2941.8" y="30" width="1.2" height="2"/><rect x="2941.8" y="35" width="1.2" height="2"/><rect x="2941.8" y="40" width="1.2" height="2"/><rect x="2941.8" y="45" width="1.2" height="2"/><rect x="2941.8" y="50" width="1.2" height="2"/><rect x="2941.8" y="55" width="1.2" height="2"/></g></svg>
<svg class="a" style="left:577px;top:713px;" width="3125" height="93" viewBox="0 0 3125 93"><g fill="#a0b090" opacity="0.55"><rect x="185.3" y="0" width="1.2" height="2"/><rect x="185.3" y="5" width="1.2" height="2"/><rect x="185.3" y="10" width="1.2" height="2"/><rect x="185.3" y="15" width="1.2" height="2"/><rect x="185.3" y="20" width="1.2" height="2"/><rect x="185.3" y="25" width="1.2" height="2"/><rect x="185.3" y="30" width="1.2" height="2"/><rect x="185.3" y="35" width="1.2" height="2"/><rect x="185.3" y="40" width="1.2" height="2"/><rect x="185.3" y="45" width="1.2" height="2"/><rect x="185.3" y="50" width="1.2" height="2"/><rect x="185.3" y="55" width="1.2" height="2"/><rect x="185.3" y="60" width="1.2" height="2"/><rect x="185.3" y="65" width="1.2" height="2"/><rect x="185.3" y="70" width="1.2" height="2"/><rect x="185.3" y="75" width="1.2" height="2"/><rect x="185.3" y="80" width="1.2" height="2"/><rect x="185.3" y="85" width="1.2" height="2"/><rect x="185.3" y="90" width="1.2" height="2"/><rect x="369.0" y="0" width="1.2" height="2"/><rect x="369.0" y="5" width="1.2" height="2"/><rect x="369.0" y="10" width="1.2" height="2"/><rect x="369.0" y="15" width="1.2" height="2"/><rect x="369.0" y="20" width="1.2" height="2"/><rect x="369.0" y="25" width="1.2" height="2"/><rect x="369.0" y="30" width="1.2" height="2"/><rect x="369.0" y="35" width="1.2" height="2"/><rect x="369.0" y="40" width="1.2" height="2"/><rect x="369.0" y="45" width="1.2" height="2"/><rect x="369.0" y="50" width="1.2" height="2"/><rect x="369.0" y="55" width="1.2" height="2"/><rect x="369.0" y="60" width="1.2" height="2"/><rect x="369.0" y="65" width="1.2" height="2"/><rect x="369.0" y="70" width="1.2" height="2"/><rect x="369.0" y="75" width="1.2" height="2"/><rect x="369.0" y="80" width="1.2" height="2"/><rect x="369.0" y="85" width="1.2" height="2"/><rect x="369.0" y="90" width="1.2" height="2"/><rect x="552.8" y="0" width="1.2" height="2"/><rect x="552.8" y="5" width="1.2" height="2"/><rect x="552.8" y="10" width="1.2" height="2"/><rect x="552.8" y="15" width="1.2" height="2"/><rect x="552.8" y="20" width="1.2" height="2"/><rect x="552.8" y="25" width="1.2" height="2"/><rect x="552.8" y="30" width="1.2" height="2"/><rect x="552.8" y="35" width="1.2" height="2"/><rect x="552.8" y="40" width="1.2" height="2"/><rect x="552.8" y="45" width="1.2" height="2"/><rect x="552.8" y="50" width="1.2" height="2"/><rect x="552.8" y="55" width="1.2" height="2"/><rect x="552.8" y="60" width="1.2" height="2"/><rect x="552.8" y="65" width="1.2" height="2"/><rect x="552.8" y="70" width="1.2" height="2"/><rect x="552.8" y="75" width="1.2" height="2"/><rect x="552.8" y="80" width="1.2" height="2"/><rect x="552.8" y="85" width="1.2" height="2"/><rect x="552.8" y="90" width="1.2" height="2"/><rect x="736.6" y="0" width="1.2" height="2"/><rect x="736.6" y="5" width="1.2" height="2"/><rect x="736.6" y="10" width="1.2" height="2"/><rect x="736.6" y="15" width="1.2" height="2"/><rect x="736.6" y="20" width="1.2" height="2"/><rect x="736.6" y="25" width="1.2" height="2"/><rect x="736.6" y="30" width="1.2" height="2"/><rect x="736.6" y="35" width="1.2" height="2"/><rect x="736.6" y="40" width="1.2" height="2"/><rect x="736.6" y="45" width="1.2" height="2"/><rect x="736.6" y="50" width="1.2" height="2"/><rect x="736.6" y="55" width="1.2" height="2"/><rect x="736.6" y="60" width="1.2" height="2"/><rect x="736.6" y="65" width="1.2" height="2"/><rect x="736.6" y="70" width="1.2" height="2"/><rect x="736.6" y="75" width="1.2" height="2"/><rect x="736.6" y="80" width="1.2" height="2"/><rect x="736.6" y="85" width="1.2" height="2"/><rect x="736.6" y="90" width="1.2" height="2"/><rect x="920.4" y="0" width="1.2" height="2"/><rect x="920.4" y="5" width="1.2" height="2"/><rect x="920.4" y="10" width="1.2" height="2"/><rect x="920.4" y="15" width="1.2" height="2"/><rect x="920.4" y="20" width="1.2" height="2"/><rect x="920.4" y="25" width="1.2" height="2"/><rect x="920.4" y="30" width="1.2" height="2"/><rect x="920.4" y="35" width="1.2" height="2"/><rect x="920.4" y="40" width="1.2" height="2"/><rect x="920.4" y="45" width="1.2" height="2"/><rect x="920.4" y="50" width="1.2" height="2"/><rect x="920.4" y="55" width="1.2" height="2"/><rect x="920.4" y="60" width="1.2" height="2"/><rect x="920.4" y="65" width="1.2" height="2"/><rect x="920.4" y="70" width="1.2" height="2"/><rect x="920.4" y="75" width="1.2" height="2"/><rect x="920.4" y="80" width="1.2" height="2"/><rect x="920.4" y="85" width="1.2" height="2"/><rect x="920.4" y="90" width="1.2" height="2"/><rect x="1104.1" y="0" width="1.2" height="2"/><rect x="1104.1" y="5" width="1.2" height="2"/><rect x="1104.1" y="10" width="1.2" height="2"/><rect x="1104.1" y="15" width="1.2" height="2"/><rect x="1104.1" y="20" width="1.2" height="2"/><rect x="1104.1" y="25" width="1.2" height="2"/><rect x="1104.1" y="30" width="1.2" height="2"/><rect x="1104.1" y="35" width="1.2" height="2"/><rect x="1104.1" y="40" width="1.2" height="2"/><rect x="1104.1" y="45" width="1.2" height="2"/><rect x="1104.1" y="50" width="1.2" height="2"/><rect x="1104.1" y="55" width="1.2" height="2"/><rect x="1104.1" y="60" width="1.2" height="2"/><rect x="1104.1" y="65" width="1.2" height="2"/><rect x="1104.1" y="70" width="1.2" height="2"/><rect x="1104.1" y="75" width="1.2" height="2"/><rect x="1104.1" y="80" width="1.2" height="2"/><rect x="1104.1" y="85" width="1.2" height="2"/><rect x="1104.1" y="90" width="1.2" height="2"/><rect x="1287.9" y="0" width="1.2" height="2"/><rect x="1287.9" y="5" width="1.2" height="2"/><rect x="1287.9" y="10" width="1.2" height="2"/><rect x="1287.9" y="15" width="1.2" height="2"/><rect x="1287.9" y="20" width="1.2" height="2"/><rect x="1287.9" y="25" width="1.2" height="2"/><rect x="1287.9" y="30" width="1.2" height="2"/><rect x="1287.9" y="35" width="1.2" height="2"/><rect x="1287.9" y="40" width="1.2" height="2"/><rect x="1287.9" y="45" width="1.2" height="2"/><rect x="1287.9" y="50" width="1.2" height="2"/><rect x="1287.9" y="55" width="1.2" height="2"/><rect x="1287.9" y="60" width="1.2" height="2"/><rect x="1287.9" y="65" width="1.2" height="2"/><rect x="1287.9" y="70" width="1.2" height="2"/><rect x="1287.9" y="75" width="1.2" height="2"/><rect x="1287.9" y="80" width="1.2" height="2"/><rect x="1287.9" y="85" width="1.2" height="2"/><rect x="1287.9" y="90" width="1.2" height="2"/><rect x="1471.7" y="0" width="1.2" height="2"/><rect x="1471.7" y="5" width="1.2" height="2"/><rect x="1471.7" y="10" width="1.2" height="2"/><rect x="1471.7" y="15" width="1.2" height="2"/><rect x="1471.7" y="20" width="1.2" height="2"/><rect x="1471.7" y="25" width="1.2" height="2"/><rect x="1471.7" y="30" width="1.2" height="2"/><rect x="1471.7" y="35" width="1.2" height="2"/><rect x="1471.7" y="40" width="1.2" height="2"/><rect x="1471.7" y="45" width="1.2" height="2"/><rect x="1471.7" y="50" width="1.2" height="2"/><rect x="1471.7" y="55" width="1.2" height="2"/><rect x="1471.7" y="60" width="1.2" height="2"/><rect x="1471.7" y="65" width="1.2" height="2"/><rect x="1471.7" y="70" width="1.2" height="2"/><rect x="1471.7" y="75" width="1.2" height="2"/><rect x="1471.7" y="80" width="1.2" height="2"/><rect x="1471.7" y="85" width="1.2" height="2"/><rect x="1471.7" y="90" width="1.2" height="2"/><rect x="1655.4" y="0" width="1.2" height="2"/><rect x="1655.4" y="5" width="1.2" height="2"/><rect x="1655.4" y="10" width="1.2" height="2"/><rect x="1655.4" y="15" width="1.2" height="2"/><rect x="1655.4" y="20" width="1.2" height="2"/><rect x="1655.4" y="25" width="1.2" height="2"/><rect x="1655.4" y="30" width="1.2" height="2"/><rect x="1655.4" y="35" width="1.2" height="2"/><rect x="1655.4" y="40" width="1.2" height="2"/><rect x="1655.4" y="45" width="1.2" height="2"/><rect x="1655.4" y="50" width="1.2" height="2"/><rect x="1655.4" y="55" width="1.2" height="2"/><rect x="1655.4" y="60" width="1.2" height="2"/><rect x="1655.4" y="65" width="1.2" height="2"/><rect x="1655.4" y="70" width="1.2" height="2"/><rect x="1655.4" y="75" width="1.2" height="2"/><rect x="1655.4" y="80" width="1.2" height="2"/><rect x="1655.4" y="85" width="1.2" height="2"/><rect x="1655.4" y="90" width="1.2" height="2"/><rect x="1839.2" y="0" width="1.2" height="2"/><rect x="1839.2" y="5" width="1.2" height="2"/><rect x="1839.2" y="10" width="1.2" height="2"/><rect x="1839.2" y="15" width="1.2" height="2"/><rect x="1839.2" y="20" width="1.2" height="2"/><rect x="1839.2" y="25" width="1.2" height="2"/><rect x="1839.2" y="30" width="1.2" height="2"/><rect x="1839.2" y="35" width="1.2" height="2"/><rect x="1839.2" y="40" width="1.2" height="2"/><rect x="1839.2" y="45" width="1.2" height="2"/><rect x="1839.2" y="50" width="1.2" height="2"/><rect x="1839.2" y="55" width="1.2" height="2"/><rect x="1839.2" y="60" width="1.2" height="2"/><rect x="1839.2" y="65" width="1.2" height="2"/><rect x="1839.2" y="70" width="1.2" height="2"/><rect x="1839.2" y="75" width="1.2" height="2"/><rect x="1839.2" y="80" width="1.2" height="2"/><rect x="1839.2" y="85" width="1.2" height="2"/><rect x="1839.2" y="90" width="1.2" height="2"/><rect x="2023.0" y="0" width="1.2" height="2"/><rect x="2023.0" y="5" width="1.2" height="2"/><rect x="2023.0" y="10" width="1.2" height="2"/><rect x="2023.0" y="15" width="1.2" height="2"/><rect x="2023.0" y="20" width="1.2" height="2"/><rect x="2023.0" y="25" width="1.2" height="2"/><rect x="2023.0" y="30" width="1.2" height="2"/><rect x="2023.0" y="35" width="1.2" height="2"/><rect x="2023.0" y="40" width="1.2" height="2"/><rect x="2023.0" y="45" width="1.2" height="2"/><rect x="2023.0" y="50" width="1.2" height="2"/><rect x="2023.0" y="55" width="1.2" height="2"/><rect x="2023.0" y="60" width="1.2" height="2"/><rect x="2023.0" y="65" width="1.2" height="2"/><rect x="2023.0" y="70" width="1.2" height="2"/><rect x="2023.0" y="75" width="1.2" height="2"/><rect x="2023.0" y="80" width="1.2" height="2"/><rect x="2023.0" y="85" width="1.2" height="2"/><rect x="2023.0" y="90" width="1.2" height="2"/><rect x="2206.7" y="0" width="1.2" height="2"/><rect x="2206.7" y="5" width="1.2" height="2"/><rect x="2206.7" y="10" width="1.2" height="2"/><rect x="2206.7" y="15" width="1.2" height="2"/><rect x="2206.7" y="20" width="1.2" height="2"/><rect x="2206.7" y="25" width="1.2" height="2"/><rect x="2206.7" y="30" width="1.2" height="2"/><rect x="2206.7" y="35" width="1.2" height="2"/><rect x="2206.7" y="40" width="1.2" height="2"/><rect x="2206.7" y="45" width="1.2" height="2"/><rect x="2206.7" y="50" width="1.2" height="2"/><rect x="2206.7" y="55" width="1.2" height="2"/><rect x="2206.7" y="60" width="1.2" height="2"/><rect x="2206.7" y="65" width="1.2" height="2"/><rect x="2206.7" y="70" width="1.2" height="2"/><rect x="2206.7" y="75" width="1.2" height="2"/><rect x="2206.7" y="80" width="1.2" height="2"/><rect x="2206.7" y="85" width="1.2" height="2"/><rect x="2206.7" y="90" width="1.2" height="2"/><rect x="2390.5" y="0" width="1.2" height="2"/><rect x="2390.5" y="5" width="1.2" height="2"/><rect x="2390.5" y="10" width="1.2" height="2"/><rect x="2390.5" y="15" width="1.2" height="2"/><rect x="2390.5" y="20" width="1.2" height="2"/><rect x="2390.5" y="25" width="1.2" height="2"/><rect x="2390.5" y="30" width="1.2" height="2"/><rect x="2390.5" y="35" width="1.2" height="2"/><rect x="2390.5" y="40" width="1.2" height="2"/><rect x="2390.5" y="45" width="1.2" height="2"/><rect x="2390.5" y="50" width="1.2" height="2"/><rect x="2390.5" y="55" width="1.2" height="2"/><rect x="2390.5" y="60" width="1.2" height="2"/><rect x="2390.5" y="65" width="1.2" height="2"/><rect x="2390.5" y="70" width="1.2" height="2"/><rect x="2390.5" y="75" width="1.2" height="2"/><rect x="2390.5" y="80" width="1.2" height="2"/><rect x="2390.5" y="85" width="1.2" height="2"/><rect x="2390.5" y="90" width="1.2" height="2"/><rect x="2574.3" y="0" width="1.2" height="2"/><rect x="2574.3" y="5" width="1.2" height="2"/><rect x="2574.3" y="10" width="1.2" height="2"/><rect x="2574.3" y="15" width="1.2" height="2"/><rect x="2574.3" y="20" width="1.2" height="2"/><rect x="2574.3" y="25" width="1.2" height="2"/><rect x="2574.3" y="30" width="1.2" height="2"/><rect x="2574.3" y="35" width="1.2" height="2"/><rect x="2574.3" y="40" width="1.2" height="2"/><rect x="2574.3" y="45" width="1.2" height="2"/><rect x="2574.3" y="50" width="1.2" height="2"/><rect x="2574.3" y="55" width="1.2" height="2"/><rect x="2574.3" y="60" width="1.2" height="2"/><rect x="2574.3" y="65" width="1.2" height="2"/><rect x="2574.3" y="70" width="1.2" height="2"/><rect x="2574.3" y="75" width="1.2" height="2"/><rect x="2574.3" y="80" width="1.2" height="2"/><rect x="2574.3" y="85" width="1.2" height="2"/><rect x="2574.3" y="90" width="1.2" height="2"/><rect x="2758.1" y="0" width="1.2" height="2"/><rect x="2758.1" y="5" width="1.2" height="2"/><rect x="2758.1" y="10" width="1.2" height="2"/><rect x="2758.1" y="15" width="1.2" height="2"/><rect x="2758.1" y="20" width="1.2" height="2"/><rect x="2758.1" y="25" width="1.2" height="2"/><rect x="2758.1" y="30" width="1.2" height="2"/><rect x="2758.1" y="35" width="1.2" height="2"/><rect x="2758.1" y="40" width="1.2" height="2"/><rect x="2758.1" y="45" width="1.2" height="2"/><rect x="2758.1" y="50" width="1.2" height="2"/><rect x="2758.1" y="55" width="1.2" height="2"/><rect x="2758.1" y="60" width="1.2" height="2"/><rect x="2758.1" y="65" width="1.2" height="2"/><rect x="2758.1" y="70" width="1.2" height="2"/><rect x="2758.1" y="75" width="1.2" height="2"/><rect x="2758.1" y="80" width="1.2" height="2"/><rect x="2758.1" y="85" width="1.2" height="2"/><rect x="2758.1" y="90" width="1.2" height="2"/><rect x="2941.8" y="0" width="1.2" height="2"/><rect x="2941.8" y="5" width="1.2" height="2"/><rect x="2941.8" y="10" width="1.2" height="2"/><rect x="2941.8" y="15" width="1.2" height="2"/><rect x="2941.8" y="20" width="1.2" height="2"/><rect x="2941.8" y="25" width="1.2" height="2"/><rect x="2941.8" y="30" width="1.2" height="2"/><rect x="2941.8" y="35" width="1.2" height="2"/><rect x="2941.8" y="40" width="1.2" height="2"/><rect x="2941.8" y="45" width="1.2" height="2"/><rect x="2941.8" y="50" width="1.2" height="2"/><rect x="2941.8" y="55" width="1.2" height="2"/><rect x="2941.8" y="60" width="1.2" height="2"/><rect x="2941.8" y="65" width="1.2" height="2"/><rect x="2941.8" y="70" width="1.2" height="2"/><rect x="2941.8" y="75" width="1.2" height="2"/><rect x="2941.8" y="80" width="1.2" height="2"/><rect x="2941.8" y="85" width="1.2" height="2"/><rect x="2941.8" y="90" width="1.2" height="2"/></g></svg>
<svg class="a" style="left:577px;top:812px;" width="3125" height="92" viewBox="0 0 3125 92"><g fill="#7fe8f0" opacity="0.55"><rect x="185.3" y="0" width="1.2" height="2"/><rect x="185.3" y="5" width="1.2" height="2"/><rect x="185.3" y="10" width="1.2" height="2"/><rect x="185.3" y="15" width="1.2" height="2"/><rect x="185.3" y="20" width="1.2" height="2"/><rect x="185.3" y="25" width="1.2" height="2"/><rect x="185.3" y="30" width="1.2" height="2"/><rect x="185.3" y="35" width="1.2" height="2"/><rect x="185.3" y="40" width="1.2" height="2"/><rect x="185.3" y="45" width="1.2" height="2"/><rect x="185.3" y="50" width="1.2" height="2"/><rect x="185.3" y="55" width="1.2" height="2"/><rect x="185.3" y="60" width="1.2" height="2"/><rect x="185.3" y="65" width="1.2" height="2"/><rect x="185.3" y="70" width="1.2" height="2"/><rect x="185.3" y="75" width="1.2" height="2"/><rect x="185.3" y="80" width="1.2" height="2"/><rect x="185.3" y="85" width="1.2" height="2"/><rect x="185.3" y="90" width="1.2" height="2"/><rect x="369.0" y="0" width="1.2" height="2"/><rect x="369.0" y="5" width="1.2" height="2"/><rect x="369.0" y="10" width="1.2" height="2"/><rect x="369.0" y="15" width="1.2" height="2"/><rect x="369.0" y="20" width="1.2" height="2"/><rect x="369.0" y="25" width="1.2" height="2"/><rect x="369.0" y="30" width="1.2" height="2"/><rect x="369.0" y="35" width="1.2" height="2"/><rect x="369.0" y="40" width="1.2" height="2"/><rect x="369.0" y="45" width="1.2" height="2"/><rect x="369.0" y="50" width="1.2" height="2"/><rect x="369.0" y="55" width="1.2" height="2"/><rect x="369.0" y="60" width="1.2" height="2"/><rect x="369.0" y="65" width="1.2" height="2"/><rect x="369.0" y="70" width="1.2" height="2"/><rect x="369.0" y="75" width="1.2" height="2"/><rect x="369.0" y="80" width="1.2" height="2"/><rect x="369.0" y="85" width="1.2" height="2"/><rect x="369.0" y="90" width="1.2" height="2"/><rect x="552.8" y="0" width="1.2" height="2"/><rect x="552.8" y="5" width="1.2" height="2"/><rect x="552.8" y="10" width="1.2" height="2"/><rect x="552.8" y="15" width="1.2" height="2"/><rect x="552.8" y="20" width="1.2" height="2"/><rect x="552.8" y="25" width="1.2" height="2"/><rect x="552.8" y="30" width="1.2" height="2"/><rect x="552.8" y="35" width="1.2" height="2"/><rect x="552.8" y="40" width="1.2" height="2"/><rect x="552.8" y="45" width="1.2" height="2"/><rect x="552.8" y="50" width="1.2" height="2"/><rect x="552.8" y="55" width="1.2" height="2"/><rect x="552.8" y="60" width="1.2" height="2"/><rect x="552.8" y="65" width="1.2" height="2"/><rect x="552.8" y="70" width="1.2" height="2"/><rect x="552.8" y="75" width="1.2" height="2"/><rect x="552.8" y="80" width="1.2" height="2"/><rect x="552.8" y="85" width="1.2" height="2"/><rect x="552.8" y="90" width="1.2" height="2"/><rect x="736.6" y="0" width="1.2" height="2"/><rect x="736.6" y="5" width="1.2" height="2"/><rect x="736.6" y="10" width="1.2" height="2"/><rect x="736.6" y="15" width="1.2" height="2"/><rect x="736.6" y="20" width="1.2" height="2"/><rect x="736.6" y="25" width="1.2" height="2"/><rect x="736.6" y="30" width="1.2" height="2"/><rect x="736.6" y="35" width="1.2" height="2"/><rect x="736.6" y="40" width="1.2" height="2"/><rect x="736.6" y="45" width="1.2" height="2"/><rect x="736.6" y="50" width="1.2" height="2"/><rect x="736.6" y="55" width="1.2" height="2"/><rect x="736.6" y="60" width="1.2" height="2"/><rect x="736.6" y="65" width="1.2" height="2"/><rect x="736.6" y="70" width="1.2" height="2"/><rect x="736.6" y="75" width="1.2" height="2"/><rect x="736.6" y="80" width="1.2" height="2"/><rect x="736.6" y="85" width="1.2" height="2"/><rect x="736.6" y="90" width="1.2" height="2"/><rect x="920.4" y="0" width="1.2" height="2"/><rect x="920.4" y="5" width="1.2" height="2"/><rect x="920.4" y="10" width="1.2" height="2"/><rect x="920.4" y="15" width="1.2" height="2"/><rect x="920.4" y="20" width="1.2" height="2"/><rect x="920.4" y="25" width="1.2" height="2"/><rect x="920.4" y="30" width="1.2" height="2"/><rect x="920.4" y="35" width="1.2" height="2"/><rect x="920.4" y="40" width="1.2" height="2"/><rect x="920.4" y="45" width="1.2" height="2"/><rect x="920.4" y="50" width="1.2" height="2"/><rect x="920.4" y="55" width="1.2" height="2"/><rect x="920.4" y="60" width="1.2" height="2"/><rect x="920.4" y="65" width="1.2" height="2"/><rect x="920.4" y="70" width="1.2" height="2"/><rect x="920.4" y="75" width="1.2" height="2"/><rect x="920.4" y="80" width="1.2" height="2"/><rect x="920.4" y="85" width="1.2" height="2"/><rect x="920.4" y="90" width="1.2" height="2"/><rect x="1104.1" y="0" width="1.2" height="2"/><rect x="1104.1" y="5" width="1.2" height="2"/><rect x="1104.1" y="10" width="1.2" height="2"/><rect x="1104.1" y="15" width="1.2" height="2"/><rect x="1104.1" y="20" width="1.2" height="2"/><rect x="1104.1" y="25" width="1.2" height="2"/><rect x="1104.1" y="30" width="1.2" height="2"/><rect x="1104.1" y="35" width="1.2" height="2"/><rect x="1104.1" y="40" width="1.2" height="2"/><rect x="1104.1" y="45" width="1.2" height="2"/><rect x="1104.1" y="50" width="1.2" height="2"/><rect x="1104.1" y="55" width="1.2" height="2"/><rect x="1104.1" y="60" width="1.2" height="2"/><rect x="1104.1" y="65" width="1.2" height="2"/><rect x="1104.1" y="70" width="1.2" height="2"/><rect x="1104.1" y="75" width="1.2" height="2"/><rect x="1104.1" y="80" width="1.2" height="2"/><rect x="1104.1" y="85" width="1.2" height="2"/><rect x="1104.1" y="90" width="1.2" height="2"/><rect x="1287.9" y="0" width="1.2" height="2"/><rect x="1287.9" y="5" width="1.2" height="2"/><rect x="1287.9" y="10" width="1.2" height="2"/><rect x="1287.9" y="15" width="1.2" height="2"/><rect x="1287.9" y="20" width="1.2" height="2"/><rect x="1287.9" y="25" width="1.2" height="2"/><rect x="1287.9" y="30" width="1.2" height="2"/><rect x="1287.9" y="35" width="1.2" height="2"/><rect x="1287.9" y="40" width="1.2" height="2"/><rect x="1287.9" y="45" width="1.2" height="2"/><rect x="1287.9" y="50" width="1.2" height="2"/><rect x="1287.9" y="55" width="1.2" height="2"/><rect x="1287.9" y="60" width="1.2" height="2"/><rect x="1287.9" y="65" width="1.2" height="2"/><rect x="1287.9" y="70" width="1.2" height="2"/><rect x="1287.9" y="75" width="1.2" height="2"/><rect x="1287.9" y="80" width="1.2" height="2"/><rect x="1287.9" y="85" width="1.2" height="2"/><rect x="1287.9" y="90" width="1.2" height="2"/><rect x="1471.7" y="0" width="1.2" height="2"/><rect x="1471.7" y="5" width="1.2" height="2"/><rect x="1471.7" y="10" width="1.2" height="2"/><rect x="1471.7" y="15" width="1.2" height="2"/><rect x="1471.7" y="20" width="1.2" height="2"/><rect x="1471.7" y="25" width="1.2" height="2"/><rect x="1471.7" y="30" width="1.2" height="2"/><rect x="1471.7" y="35" width="1.2" height="2"/><rect x="1471.7" y="40" width="1.2" height="2"/><rect x="1471.7" y="45" width="1.2" height="2"/><rect x="1471.7" y="50" width="1.2" height="2"/><rect x="1471.7" y="55" width="1.2" height="2"/><rect x="1471.7" y="60" width="1.2" height="2"/><rect x="1471.7" y="65" width="1.2" height="2"/><rect x="1471.7" y="70" width="1.2" height="2"/><rect x="1471.7" y="75" width="1.2" height="2"/><rect x="1471.7" y="80" width="1.2" height="2"/><rect x="1471.7" y="85" width="1.2" height="2"/><rect x="1471.7" y="90" width="1.2" height="2"/><rect x="1655.4" y="0" width="1.2" height="2"/><rect x="1655.4" y="5" width="1.2" height="2"/><rect x="1655.4" y="10" width="1.2" height="2"/><rect x="1655.4" y="15" width="1.2" height="2"/><rect x="1655.4" y="20" width="1.2" height="2"/><rect x="1655.4" y="25" width="1.2" height="2"/><rect x="1655.4" y="30" width="1.2" height="2"/><rect x="1655.4" y="35" width="1.2" height="2"/><rect x="1655.4" y="40" width="1.2" height="2"/><rect x="1655.4" y="45" width="1.2" height="2"/><rect x="1655.4" y="50" width="1.2" height="2"/><rect x="1655.4" y="55" width="1.2" height="2"/><rect x="1655.4" y="60" width="1.2" height="2"/><rect x="1655.4" y="65" width="1.2" height="2"/><rect x="1655.4" y="70" width="1.2" height="2"/><rect x="1655.4" y="75" width="1.2" height="2"/><rect x="1655.4" y="80" width="1.2" height="2"/><rect x="1655.4" y="85" width="1.2" height="2"/><rect x="1655.4" y="90" width="1.2" height="2"/><rect x="1839.2" y="0" width="1.2" height="2"/><rect x="1839.2" y="5" width="1.2" height="2"/><rect x="1839.2" y="10" width="1.2" height="2"/><rect x="1839.2" y="15" width="1.2" height="2"/><rect x="1839.2" y="20" width="1.2" height="2"/><rect x="1839.2" y="25" width="1.2" height="2"/><rect x="1839.2" y="30" width="1.2" height="2"/><rect x="1839.2" y="35" width="1.2" height="2"/><rect x="1839.2" y="40" width="1.2" height="2"/><rect x="1839.2" y="45" width="1.2" height="2"/><rect x="1839.2" y="50" width="1.2" height="2"/><rect x="1839.2" y="55" width="1.2" height="2"/><rect x="1839.2" y="60" width="1.2" height="2"/><rect x="1839.2" y="65" width="1.2" height="2"/><rect x="1839.2" y="70" width="1.2" height="2"/><rect x="1839.2" y="75" width="1.2" height="2"/><rect x="1839.2" y="80" width="1.2" height="2"/><rect x="1839.2" y="85" width="1.2" height="2"/><rect x="1839.2" y="90" width="1.2" height="2"/><rect x="2023.0" y="0" width="1.2" height="2"/><rect x="2023.0" y="5" width="1.2" height="2"/><rect x="2023.0" y="10" width="1.2" height="2"/><rect x="2023.0" y="15" width="1.2" height="2"/><rect x="2023.0" y="20" width="1.2" height="2"/><rect x="2023.0" y="25" width="1.2" height="2"/><rect x="2023.0" y="30" width="1.2" height="2"/><rect x="2023.0" y="35" width="1.2" height="2"/><rect x="2023.0" y="40" width="1.2" height="2"/><rect x="2023.0" y="45" width="1.2" height="2"/><rect x="2023.0" y="50" width="1.2" height="2"/><rect x="2023.0" y="55" width="1.2" height="2"/><rect x="2023.0" y="60" width="1.2" height="2"/><rect x="2023.0" y="65" width="1.2" height="2"/><rect x="2023.0" y="70" width="1.2" height="2"/><rect x="2023.0" y="75" width="1.2" height="2"/><rect x="2023.0" y="80" width="1.2" height="2"/><rect x="2023.0" y="85" width="1.2" height="2"/><rect x="2023.0" y="90" width="1.2" height="2"/><rect x="2206.7" y="0" width="1.2" height="2"/><rect x="2206.7" y="5" width="1.2" height="2"/><rect x="2206.7" y="10" width="1.2" height="2"/><rect x="2206.7" y="15" width="1.2" height="2"/><rect x="2206.7" y="20" width="1.2" height="2"/><rect x="2206.7" y="25" width="1.2" height="2"/><rect x="2206.7" y="30" width="1.2" height="2"/><rect x="2206.7" y="35" width="1.2" height="2"/><rect x="2206.7" y="40" width="1.2" height="2"/><rect x="2206.7" y="45" width="1.2" height="2"/><rect x="2206.7" y="50" width="1.2" height="2"/><rect x="2206.7" y="55" width="1.2" height="2"/><rect x="2206.7" y="60" width="1.2" height="2"/><rect x="2206.7" y="65" width="1.2" height="2"/><rect x="2206.7" y="70" width="1.2" height="2"/><rect x="2206.7" y="75" width="1.2" height="2"/><rect x="2206.7" y="80" width="1.2" height="2"/><rect x="2206.7" y="85" width="1.2" height="2"/><rect x="2206.7" y="90" width="1.2" height="2"/><rect x="2390.5" y="0" width="1.2" height="2"/><rect x="2390.5" y="5" width="1.2" height="2"/><rect x="2390.5" y="10" width="1.2" height="2"/><rect x="2390.5" y="15" width="1.2" height="2"/><rect x="2390.5" y="20" width="1.2" height="2"/><rect x="2390.5" y="25" width="1.2" height="2"/><rect x="2390.5" y="30" width="1.2" height="2"/><rect x="2390.5" y="35" width="1.2" height="2"/><rect x="2390.5" y="40" width="1.2" height="2"/><rect x="2390.5" y="45" width="1.2" height="2"/><rect x="2390.5" y="50" width="1.2" height="2"/><rect x="2390.5" y="55" width="1.2" height="2"/><rect x="2390.5" y="60" width="1.2" height="2"/><rect x="2390.5" y="65" width="1.2" height="2"/><rect x="2390.5" y="70" width="1.2" height="2"/><rect x="2390.5" y="75" width="1.2" height="2"/><rect x="2390.5" y="80" width="1.2" height="2"/><rect x="2390.5" y="85" width="1.2" height="2"/><rect x="2390.5" y="90" width="1.2" height="2"/><rect x="2574.3" y="0" width="1.2" height="2"/><rect x="2574.3" y="5" width="1.2" height="2"/><rect x="2574.3" y="10" width="1.2" height="2"/><rect x="2574.3" y="15" width="1.2" height="2"/><rect x="2574.3" y="20" width="1.2" height="2"/><rect x="2574.3" y="25" width="1.2" height="2"/><rect x="2574.3" y="30" width="1.2" height="2"/><rect x="2574.3" y="35" width="1.2" height="2"/><rect x="2574.3" y="40" width="1.2" height="2"/><rect x="2574.3" y="45" width="1.2" height="2"/><rect x="2574.3" y="50" width="1.2" height="2"/><rect x="2574.3" y="55" width="1.2" height="2"/><rect x="2574.3" y="60" width="1.2" height="2"/><rect x="2574.3" y="65" width="1.2" height="2"/><rect x="2574.3" y="70" width="1.2" height="2"/><rect x="2574.3" y="75" width="1.2" height="2"/><rect x="2574.3" y="80" width="1.2" height="2"/><rect x="2574.3" y="85" width="1.2" height="2"/><rect x="2574.3" y="90" width="1.2" height="2"/><rect x="2758.1" y="0" width="1.2" height="2"/><rect x="2758.1" y="5" width="1.2" height="2"/><rect x="2758.1" y="10" width="1.2" height="2"/><rect x="2758.1" y="15" width="1.2" height="2"/><rect x="2758.1" y="20" width="1.2" height="2"/><rect x="2758.1" y="25" width="1.2" height="2"/><rect x="2758.1" y="30" width="1.2" height="2"/><rect x="2758.1" y="35" width="1.2" height="2"/><rect x="2758.1" y="40" width="1.2" height="2"/><rect x="2758.1" y="45" width="1.2" height="2"/><rect x="2758.1" y="50" width="1.2" height="2"/><rect x="2758.1" y="55" width="1.2" height="2"/><rect x="2758.1" y="60" width="1.2" height="2"/><rect x="2758.1" y="65" width="1.2" height="2"/><rect x="2758.1" y="70" width="1.2" height="2"/><rect x="2758.1" y="75" width="1.2" height="2"/><rect x="2758.1" y="80" width="1.2" height="2"/><rect x="2758.1" y="85" width="1.2" height="2"/><rect x="2758.1" y="90" width="1.2" height="2"/><rect x="2941.8" y="0" width="1.2" height="2"/><rect x="2941.8" y="5" width="1.2" height="2"/><rect x="2941.8" y="10" width="1.2" height="2"/><rect x="2941.8" y="15" width="1.2" height="2"/><rect x="2941.8" y="20" width="1.2" height="2"/><rect x="2941.8" y="25" width="1.2" height="2"/><rect x="2941.8" y="30" width="1.2" height="2"/><rect x="2941.8" y="35" width="1.2" height="2"/><rect x="2941.8" y="40" width="1.2" height="2"/><rect x="2941.8" y="45" width="1.2" height="2"/><rect x="2941.8" y="50" width="1.2" height="2"/><rect x="2941.8" y="55" width="1.2" height="2"/><rect x="2941.8" y="60" width="1.2" height="2"/><rect x="2941.8" y="65" width="1.2" height="2"/><rect x="2941.8" y="70" width="1.2" height="2"/><rect x="2941.8" y="75" width="1.2" height="2"/><rect x="2941.8" y="80" width="1.2" height="2"/><rect x="2941.8" y="85" width="1.2" height="2"/><rect x="2941.8" y="90" width="1.2" height="2"/></g></svg>
<svg class="a" style="left:577px;top:910px;" width="3125" height="96" viewBox="0 0 3125 96"><g fill="#8a8af0" opacity="0.55"><rect x="185.3" y="0" width="1.2" height="2"/><rect x="185.3" y="5" width="1.2" height="2"/><rect x="185.3" y="10" width="1.2" height="2"/><rect x="185.3" y="15" width="1.2" height="2"/><rect x="185.3" y="20" width="1.2" height="2"/><rect x="185.3" y="25" width="1.2" height="2"/><rect x="185.3" y="30" width="1.2" height="2"/><rect x="185.3" y="35" width="1.2" height="2"/><rect x="185.3" y="40" width="1.2" height="2"/><rect x="185.3" y="45" width="1.2" height="2"/><rect x="185.3" y="50" width="1.2" height="2"/><rect x="185.3" y="55" width="1.2" height="2"/><rect x="185.3" y="60" width="1.2" height="2"/><rect x="185.3" y="65" width="1.2" height="2"/><rect x="185.3" y="70" width="1.2" height="2"/><rect x="185.3" y="75" width="1.2" height="2"/><rect x="185.3" y="80" width="1.2" height="2"/><rect x="185.3" y="85" width="1.2" height="2"/><rect x="185.3" y="90" width="1.2" height="2"/><rect x="185.3" y="95" width="1.2" height="2"/><rect x="369.0" y="0" width="1.2" height="2"/><rect x="369.0" y="5" width="1.2" height="2"/><rect x="369.0" y="10" width="1.2" height="2"/><rect x="369.0" y="15" width="1.2" height="2"/><rect x="369.0" y="20" width="1.2" height="2"/><rect x="369.0" y="25" width="1.2" height="2"/><rect x="369.0" y="30" width="1.2" height="2"/><rect x="369.0" y="35" width="1.2" height="2"/><rect x="369.0" y="40" width="1.2" height="2"/><rect x="369.0" y="45" width="1.2" height="2"/><rect x="369.0" y="50" width="1.2" height="2"/><rect x="369.0" y="55" width="1.2" height="2"/><rect x="369.0" y="60" width="1.2" height="2"/><rect x="369.0" y="65" width="1.2" height="2"/><rect x="369.0" y="70" width="1.2" height="2"/><rect x="369.0" y="75" width="1.2" height="2"/><rect x="369.0" y="80" width="1.2" height="2"/><rect x="369.0" y="85" width="1.2" height="2"/><rect x="369.0" y="90" width="1.2" height="2"/><rect x="369.0" y="95" width="1.2" height="2"/><rect x="552.8" y="0" width="1.2" height="2"/><rect x="552.8" y="5" width="1.2" height="2"/><rect x="552.8" y="10" width="1.2" height="2"/><rect x="552.8" y="15" width="1.2" height="2"/><rect x="552.8" y="20" width="1.2" height="2"/><rect x="552.8" y="25" width="1.2" height="2"/><rect x="552.8" y="30" width="1.2" height="2"/><rect x="552.8" y="35" width="1.2" height="2"/><rect x="552.8" y="40" width="1.2" height="2"/><rect x="552.8" y="45" width="1.2" height="2"/><rect x="552.8" y="50" width="1.2" height="2"/><rect x="552.8" y="55" width="1.2" height="2"/><rect x="552.8" y="60" width="1.2" height="2"/><rect x="552.8" y="65" width="1.2" height="2"/><rect x="552.8" y="70" width="1.2" height="2"/><rect x="552.8" y="75" width="1.2" height="2"/><rect x="552.8" y="80" width="1.2" height="2"/><rect x="552.8" y="85" width="1.2" height="2"/><rect x="552.8" y="90" width="1.2" height="2"/><rect x="552.8" y="95" width="1.2" height="2"/><rect x="736.6" y="0" width="1.2" height="2"/><rect x="736.6" y="5" width="1.2" height="2"/><rect x="736.6" y="10" width="1.2" height="2"/><rect x="736.6" y="15" width="1.2" height="2"/><rect x="736.6" y="20" width="1.2" height="2"/><rect x="736.6" y="25" width="1.2" height="2"/><rect x="736.6" y="30" width="1.2" height="2"/><rect x="736.6" y="35" width="1.2" height="2"/><rect x="736.6" y="40" width="1.2" height="2"/><rect x="736.6" y="45" width="1.2" height="2"/><rect x="736.6" y="50" width="1.2" height="2"/><rect x="736.6" y="55" width="1.2" height="2"/><rect x="736.6" y="60" width="1.2" height="2"/><rect x="736.6" y="65" width="1.2" height="2"/><rect x="736.6" y="70" width="1.2" height="2"/><rect x="736.6" y="75" width="1.2" height="2"/><rect x="736.6" y="80" width="1.2" height="2"/><rect x="736.6" y="85" width="1.2" height="2"/><rect x="736.6" y="90" width="1.2" height="2"/><rect x="736.6" y="95" width="1.2" height="2"/><rect x="920.4" y="0" width="1.2" height="2"/><rect x="920.4" y="5" width="1.2" height="2"/><rect x="920.4" y="10" width="1.2" height="2"/><rect x="920.4" y="15" width="1.2" height="2"/><rect x="920.4" y="20" width="1.2" height="2"/><rect x="920.4" y="25" width="1.2" height="2"/><rect x="920.4" y="30" width="1.2" height="2"/><rect x="920.4" y="35" width="1.2" height="2"/><rect x="920.4" y="40" width="1.2" height="2"/><rect x="920.4" y="45" width="1.2" height="2"/><rect x="920.4" y="50" width="1.2" height="2"/><rect x="920.4" y="55" width="1.2" height="2"/><rect x="920.4" y="60" width="1.2" height="2"/><rect x="920.4" y="65" width="1.2" height="2"/><rect x="920.4" y="70" width="1.2" height="2"/><rect x="920.4" y="75" width="1.2" height="2"/><rect x="920.4" y="80" width="1.2" height="2"/><rect x="920.4" y="85" width="1.2" height="2"/><rect x="920.4" y="90" width="1.2" height="2"/><rect x="920.4" y="95" width="1.2" height="2"/><rect x="1104.1" y="0" width="1.2" height="2"/><rect x="1104.1" y="5" width="1.2" height="2"/><rect x="1104.1" y="10" width="1.2" height="2"/><rect x="1104.1" y="15" width="1.2" height="2"/><rect x="1104.1" y="20" width="1.2" height="2"/><rect x="1104.1" y="25" width="1.2" height="2"/><rect x="1104.1" y="30" width="1.2" height="2"/><rect x="1104.1" y="35" width="1.2" height="2"/><rect x="1104.1" y="40" width="1.2" height="2"/><rect x="1104.1" y="45" width="1.2" height="2"/><rect x="1104.1" y="50" width="1.2" height="2"/><rect x="1104.1" y="55" width="1.2" height="2"/><rect x="1104.1" y="60" width="1.2" height="2"/><rect x="1104.1" y="65" width="1.2" height="2"/><rect x="1104.1" y="70" width="1.2" height="2"/><rect x="1104.1" y="75" width="1.2" height="2"/><rect x="1104.1" y="80" width="1.2" height="2"/><rect x="1104.1" y="85" width="1.2" height="2"/><rect x="1104.1" y="90" width="1.2" height="2"/><rect x="1104.1" y="95" width="1.2" height="2"/><rect x="1287.9" y="0" width="1.2" height="2"/><rect x="1287.9" y="5" width="1.2" height="2"/><rect x="1287.9" y="10" width="1.2" height="2"/><rect x="1287.9" y="15" width="1.2" height="2"/><rect x="1287.9" y="20" width="1.2" height="2"/><rect x="1287.9" y="25" width="1.2" height="2"/><rect x="1287.9" y="30" width="1.2" height="2"/><rect x="1287.9" y="35" width="1.2" height="2"/><rect x="1287.9" y="40" width="1.2" height="2"/><rect x="1287.9" y="45" width="1.2" height="2"/><rect x="1287.9" y="50" width="1.2" height="2"/><rect x="1287.9" y="55" width="1.2" height="2"/><rect x="1287.9" y="60" width="1.2" height="2"/><rect x="1287.9" y="65" width="1.2" height="2"/><rect x="1287.9" y="70" width="1.2" height="2"/><rect x="1287.9" y="75" width="1.2" height="2"/><rect x="1287.9" y="80" width="1.2" height="2"/><rect x="1287.9" y="85" width="1.2" height="2"/><rect x="1287.9" y="90" width="1.2" height="2"/><rect x="1287.9" y="95" width="1.2" height="2"/><rect x="1471.7" y="0" width="1.2" height="2"/><rect x="1471.7" y="5" width="1.2" height="2"/><rect x="1471.7" y="10" width="1.2" height="2"/><rect x="1471.7" y="15" width="1.2" height="2"/><rect x="1471.7" y="20" width="1.2" height="2"/><rect x="1471.7" y="25" width="1.2" height="2"/><rect x="1471.7" y="30" width="1.2" height="2"/><rect x="1471.7" y="35" width="1.2" height="2"/><rect x="1471.7" y="40" width="1.2" height="2"/><rect x="1471.7" y="45" width="1.2" height="2"/><rect x="1471.7" y="50" width="1.2" height="2"/><rect x="1471.7" y="55" width="1.2" height="2"/><rect x="1471.7" y="60" width="1.2" height="2"/><rect x="1471.7" y="65" width="1.2" height="2"/><rect x="1471.7" y="70" width="1.2" height="2"/><rect x="1471.7" y="75" width="1.2" height="2"/><rect x="1471.7" y="80" width="1.2" height="2"/><rect x="1471.7" y="85" width="1.2" height="2"/><rect x="1471.7" y="90" width="1.2" height="2"/><rect x="1471.7" y="95" width="1.2" height="2"/><rect x="1655.4" y="0" width="1.2" height="2"/><rect x="1655.4" y="5" width="1.2" height="2"/><rect x="1655.4" y="10" width="1.2" height="2"/><rect x="1655.4" y="15" width="1.2" height="2"/><rect x="1655.4" y="20" width="1.2" height="2"/><rect x="1655.4" y="25" width="1.2" height="2"/><rect x="1655.4" y="30" width="1.2" height="2"/><rect x="1655.4" y="35" width="1.2" height="2"/><rect x="1655.4" y="40" width="1.2" height="2"/><rect x="1655.4" y="45" width="1.2" height="2"/><rect x="1655.4" y="50" width="1.2" height="2"/><rect x="1655.4" y="55" width="1.2" height="2"/><rect x="1655.4" y="60" width="1.2" height="2"/><rect x="1655.4" y="65" width="1.2" height="2"/><rect x="1655.4" y="70" width="1.2" height="2"/><rect x="1655.4" y="75" width="1.2" height="2"/><rect x="1655.4" y="80" width="1.2" height="2"/><rect x="1655.4" y="85" width="1.2" height="2"/><rect x="1655.4" y="90" width="1.2" height="2"/><rect x="1655.4" y="95" width="1.2" height="2"/><rect x="1839.2" y="0" width="1.2" height="2"/><rect x="1839.2" y="5" width="1.2" height="2"/><rect x="1839.2" y="10" width="1.2" height="2"/><rect x="1839.2" y="15" width="1.2" height="2"/><rect x="1839.2" y="20" width="1.2" height="2"/><rect x="1839.2" y="25" width="1.2" height="2"/><rect x="1839.2" y="30" width="1.2" height="2"/><rect x="1839.2" y="35" width="1.2" height="2"/><rect x="1839.2" y="40" width="1.2" height="2"/><rect x="1839.2" y="45" width="1.2" height="2"/><rect x="1839.2" y="50" width="1.2" height="2"/><rect x="1839.2" y="55" width="1.2" height="2"/><rect x="1839.2" y="60" width="1.2" height="2"/><rect x="1839.2" y="65" width="1.2" height="2"/><rect x="1839.2" y="70" width="1.2" height="2"/><rect x="1839.2" y="75" width="1.2" height="2"/><rect x="1839.2" y="80" width="1.2" height="2"/><rect x="1839.2" y="85" width="1.2" height="2"/><rect x="1839.2" y="90" width="1.2" height="2"/><rect x="1839.2" y="95" width="1.2" height="2"/><rect x="2023.0" y="0" width="1.2" height="2"/><rect x="2023.0" y="5" width="1.2" height="2"/><rect x="2023.0" y="10" width="1.2" height="2"/><rect x="2023.0" y="15" width="1.2" height="2"/><rect x="2023.0" y="20" width="1.2" height="2"/><rect x="2023.0" y="25" width="1.2" height="2"/><rect x="2023.0" y="30" width="1.2" height="2"/><rect x="2023.0" y="35" width="1.2" height="2"/><rect x="2023.0" y="40" width="1.2" height="2"/><rect x="2023.0" y="45" width="1.2" height="2"/><rect x="2023.0" y="50" width="1.2" height="2"/><rect x="2023.0" y="55" width="1.2" height="2"/><rect x="2023.0" y="60" width="1.2" height="2"/><rect x="2023.0" y="65" width="1.2" height="2"/><rect x="2023.0" y="70" width="1.2" height="2"/><rect x="2023.0" y="75" width="1.2" height="2"/><rect x="2023.0" y="80" width="1.2" height="2"/><rect x="2023.0" y="85" width="1.2" height="2"/><rect x="2023.0" y="90" width="1.2" height="2"/><rect x="2023.0" y="95" width="1.2" height="2"/><rect x="2206.7" y="0" width="1.2" height="2"/><rect x="2206.7" y="5" width="1.2" height="2"/><rect x="2206.7" y="10" width="1.2" height="2"/><rect x="2206.7" y="15" width="1.2" height="2"/><rect x="2206.7" y="20" width="1.2" height="2"/><rect x="2206.7" y="25" width="1.2" height="2"/><rect x="2206.7" y="30" width="1.2" height="2"/><rect x="2206.7" y="35" width="1.2" height="2"/><rect x="2206.7" y="40" width="1.2" height="2"/><rect x="2206.7" y="45" width="1.2" height="2"/><rect x="2206.7" y="50" width="1.2" height="2"/><rect x="2206.7" y="55" width="1.2" height="2"/><rect x="2206.7" y="60" width="1.2" height="2"/><rect x="2206.7" y="65" width="1.2" height="2"/><rect x="2206.7" y="70" width="1.2" height="2"/><rect x="2206.7" y="75" width="1.2" height="2"/><rect x="2206.7" y="80" width="1.2" height="2"/><rect x="2206.7" y="85" width="1.2" height="2"/><rect x="2206.7" y="90" width="1.2" height="2"/><rect x="2206.7" y="95" width="1.2" height="2"/><rect x="2390.5" y="0" width="1.2" height="2"/><rect x="2390.5" y="5" width="1.2" height="2"/><rect x="2390.5" y="10" width="1.2" height="2"/><rect x="2390.5" y="15" width="1.2" height="2"/><rect x="2390.5" y="20" width="1.2" height="2"/><rect x="2390.5" y="25" width="1.2" height="2"/><rect x="2390.5" y="30" width="1.2" height="2"/><rect x="2390.5" y="35" width="1.2" height="2"/><rect x="2390.5" y="40" width="1.2" height="2"/><rect x="2390.5" y="45" width="1.2" height="2"/><rect x="2390.5" y="50" width="1.2" height="2"/><rect x="2390.5" y="55" width="1.2" height="2"/><rect x="2390.5" y="60" width="1.2" height="2"/><rect x="2390.5" y="65" width="1.2" height="2"/><rect x="2390.5" y="70" width="1.2" height="2"/><rect x="2390.5" y="75" width="1.2" height="2"/><rect x="2390.5" y="80" width="1.2" height="2"/><rect x="2390.5" y="85" width="1.2" height="2"/><rect x="2390.5" y="90" width="1.2" height="2"/><rect x="2390.5" y="95" width="1.2" height="2"/><rect x="2574.3" y="0" width="1.2" height="2"/><rect x="2574.3" y="5" width="1.2" height="2"/><rect x="2574.3" y="10" width="1.2" height="2"/><rect x="2574.3" y="15" width="1.2" height="2"/><rect x="2574.3" y="20" width="1.2" height="2"/><rect x="2574.3" y="25" width="1.2" height="2"/><rect x="2574.3" y="30" width="1.2" height="2"/><rect x="2574.3" y="35" width="1.2" height="2"/><rect x="2574.3" y="40" width="1.2" height="2"/><rect x="2574.3" y="45" width="1.2" height="2"/><rect x="2574.3" y="50" width="1.2" height="2"/><rect x="2574.3" y="55" width="1.2" height="2"/><rect x="2574.3" y="60" width="1.2" height="2"/><rect x="2574.3" y="65" width="1.2" height="2"/><rect x="2574.3" y="70" width="1.2" height="2"/><rect x="2574.3" y="75" width="1.2" height="2"/><rect x="2574.3" y="80" width="1.2" height="2"/><rect x="2574.3" y="85" width="1.2" height="2"/><rect x="2574.3" y="90" width="1.2" height="2"/><rect x="2574.3" y="95" width="1.2" height="2"/><rect x="2758.1" y="0" width="1.2" height="2"/><rect x="2758.1" y="5" width="1.2" height="2"/><rect x="2758.1" y="10" width="1.2" height="2"/><rect x="2758.1" y="15" width="1.2" height="2"/><rect x="2758.1" y="20" width="1.2" height="2"/><rect x="2758.1" y="25" width="1.2" height="2"/><rect x="2758.1" y="30" width="1.2" height="2"/><rect x="2758.1" y="35" width="1.2" height="2"/><rect x="2758.1" y="40" width="1.2" height="2"/><rect x="2758.1" y="45" width="1.2" height="2"/><rect x="2758.1" y="50" width="1.2" height="2"/><rect x="2758.1" y="55" width="1.2" height="2"/><rect x="2758.1" y="60" width="1.2" height="2"/><rect x="2758.1" y="65" width="1.2" height="2"/><rect x="2758.1" y="70" width="1.2" height="2"/><rect x="2758.1" y="75" width="1.2" height="2"/><rect x="2758.1" y="80" width="1.2" height="2"/><rect x="2758.1" y="85" width="1.2" height="2"/><rect x="2758.1" y="90" width="1.2" height="2"/><rect x="2758.1" y="95" width="1.2" height="2"/><rect x="2941.8" y="0" width="1.2" height="2"/><rect x="2941.8" y="5" width="1.2" height="2"/><rect x="2941.8" y="10" width="1.2" height="2"/><rect x="2941.8" y="15" width="1.2" height="2"/><rect x="2941.8" y="20" width="1.2" height="2"/><rect x="2941.8" y="25" width="1.2" height="2"/><rect x="2941.8" y="30" width="1.2" height="2"/><rect x="2941.8" y="35" width="1.2" height="2"/><rect x="2941.8" y="40" width="1.2" height="2"/><rect x="2941.8" y="45" width="1.2" height="2"/><rect x="2941.8" y="50" width="1.2" height="2"/><rect x="2941.8" y="55" width="1.2" height="2"/><rect x="2941.8" y="60" width="1.2" height="2"/><rect x="2941.8" y="65" width="1.2" height="2"/><rect x="2941.8" y="70" width="1.2" height="2"/><rect x="2941.8" y="75" width="1.2" height="2"/><rect x="2941.8" y="80" width="1.2" height="2"/><rect x="2941.8" y="85" width="1.2" height="2"/><rect x="2941.8" y="90" width="1.2" height="2"/><rect x="2941.8" y="95" width="1.2" height="2"/></g></svg>
<svg class="a" style="left:577px;top:1011px;" width="3125" height="96" viewBox="0 0 3125 96"><g fill="#80f090" opacity="0.55"><rect x="185.3" y="0" width="1.2" height="2"/><rect x="185.3" y="5" width="1.2" height="2"/><rect x="185.3" y="10" width="1.2" height="2"/><rect x="185.3" y="15" width="1.2" height="2"/><rect x="185.3" y="20" width="1.2" height="2"/><rect x="185.3" y="25" width="1.2" height="2"/><rect x="185.3" y="30" width="1.2" height="2"/><rect x="185.3" y="35" width="1.2" height="2"/><rect x="185.3" y="40" width="1.2" height="2"/><rect x="185.3" y="45" width="1.2" height="2"/><rect x="185.3" y="50" width="1.2" height="2"/><rect x="185.3" y="55" width="1.2" height="2"/><rect x="185.3" y="60" width="1.2" height="2"/><rect x="185.3" y="65" width="1.2" height="2"/><rect x="185.3" y="70" width="1.2" height="2"/><rect x="185.3" y="75" width="1.2" height="2"/><rect x="185.3" y="80" width="1.2" height="2"/><rect x="185.3" y="85" width="1.2" height="2"/><rect x="185.3" y="90" width="1.2" height="2"/><rect x="185.3" y="95" width="1.2" height="2"/><rect x="369.0" y="0" width="1.2" height="2"/><rect x="369.0" y="5" width="1.2" height="2"/><rect x="369.0" y="10" width="1.2" height="2"/><rect x="369.0" y="15" width="1.2" height="2"/><rect x="369.0" y="20" width="1.2" height="2"/><rect x="369.0" y="25" width="1.2" height="2"/><rect x="369.0" y="30" width="1.2" height="2"/><rect x="369.0" y="35" width="1.2" height="2"/><rect x="369.0" y="40" width="1.2" height="2"/><rect x="369.0" y="45" width="1.2" height="2"/><rect x="369.0" y="50" width="1.2" height="2"/><rect x="369.0" y="55" width="1.2" height="2"/><rect x="369.0" y="60" width="1.2" height="2"/><rect x="369.0" y="65" width="1.2" height="2"/><rect x="369.0" y="70" width="1.2" height="2"/><rect x="369.0" y="75" width="1.2" height="2"/><rect x="369.0" y="80" width="1.2" height="2"/><rect x="369.0" y="85" width="1.2" height="2"/><rect x="369.0" y="90" width="1.2" height="2"/><rect x="369.0" y="95" width="1.2" height="2"/><rect x="552.8" y="0" width="1.2" height="2"/><rect x="552.8" y="5" width="1.2" height="2"/><rect x="552.8" y="10" width="1.2" height="2"/><rect x="552.8" y="15" width="1.2" height="2"/><rect x="552.8" y="20" width="1.2" height="2"/><rect x="552.8" y="25" width="1.2" height="2"/><rect x="552.8" y="30" width="1.2" height="2"/><rect x="552.8" y="35" width="1.2" height="2"/><rect x="552.8" y="40" width="1.2" height="2"/><rect x="552.8" y="45" width="1.2" height="2"/><rect x="552.8" y="50" width="1.2" height="2"/><rect x="552.8" y="55" width="1.2" height="2"/><rect x="552.8" y="60" width="1.2" height="2"/><rect x="552.8" y="65" width="1.2" height="2"/><rect x="552.8" y="70" width="1.2" height="2"/><rect x="552.8" y="75" width="1.2" height="2"/><rect x="552.8" y="80" width="1.2" height="2"/><rect x="552.8" y="85" width="1.2" height="2"/><rect x="552.8" y="90" width="1.2" height="2"/><rect x="552.8" y="95" width="1.2" height="2"/><rect x="736.6" y="0" width="1.2" height="2"/><rect x="736.6" y="5" width="1.2" height="2"/><rect x="736.6" y="10" width="1.2" height="2"/><rect x="736.6" y="15" width="1.2" height="2"/><rect x="736.6" y="20" width="1.2" height="2"/><rect x="736.6" y="25" width="1.2" height="2"/><rect x="736.6" y="30" width="1.2" height="2"/><rect x="736.6" y="35" width="1.2" height="2"/><rect x="736.6" y="40" width="1.2" height="2"/><rect x="736.6" y="45" width="1.2" height="2"/><rect x="736.6" y="50" width="1.2" height="2"/><rect x="736.6" y="55" width="1.2" height="2"/><rect x="736.6" y="60" width="1.2" height="2"/><rect x="736.6" y="65" width="1.2" height="2"/><rect x="736.6" y="70" width="1.2" height="2"/><rect x="736.6" y="75" width="1.2" height="2"/><rect x="736.6" y="80" width="1.2" height="2"/><rect x="736.6" y="85" width="1.2" height="2"/><rect x="736.6" y="90" width="1.2" height="2"/><rect x="736.6" y="95" width="1.2" height="2"/><rect x="920.4" y="0" width="1.2" height="2"/><rect x="920.4" y="5" width="1.2" height="2"/><rect x="920.4" y="10" width="1.2" height="2"/><rect x="920.4" y="15" width="1.2" height="2"/><rect x="920.4" y="20" width="1.2" height="2"/><rect x="920.4" y="25" width="1.2" height="2"/><rect x="920.4" y="30" width="1.2" height="2"/><rect x="920.4" y="35" width="1.2" height="2"/><rect x="920.4" y="40" width="1.2" height="2"/><rect x="920.4" y="45" width="1.2" height="2"/><rect x="920.4" y="50" width="1.2" height="2"/><rect x="920.4" y="55" width="1.2" height="2"/><rect x="920.4" y="60" width="1.2" height="2"/><rect x="920.4" y="65" width="1.2" height="2"/><rect x="920.4" y="70" width="1.2" height="2"/><rect x="920.4" y="75" width="1.2" height="2"/><rect x="920.4" y="80" width="1.2" height="2"/><rect x="920.4" y="85" width="1.2" height="2"/><rect x="920.4" y="90" width="1.2" height="2"/><rect x="920.4" y="95" width="1.2" height="2"/><rect x="1104.1" y="0" width="1.2" height="2"/><rect x="1104.1" y="5" width="1.2" height="2"/><rect x="1104.1" y="10" width="1.2" height="2"/><rect x="1104.1" y="15" width="1.2" height="2"/><rect x="1104.1" y="20" width="1.2" height="2"/><rect x="1104.1" y="25" width="1.2" height="2"/><rect x="1104.1" y="30" width="1.2" height="2"/><rect x="1104.1" y="35" width="1.2" height="2"/><rect x="1104.1" y="40" width="1.2" height="2"/><rect x="1104.1" y="45" width="1.2" height="2"/><rect x="1104.1" y="50" width="1.2" height="2"/><rect x="1104.1" y="55" width="1.2" height="2"/><rect x="1104.1" y="60" width="1.2" height="2"/><rect x="1104.1" y="65" width="1.2" height="2"/><rect x="1104.1" y="70" width="1.2" height="2"/><rect x="1104.1" y="75" width="1.2" height="2"/><rect x="1104.1" y="80" width="1.2" height="2"/><rect x="1104.1" y="85" width="1.2" height="2"/><rect x="1104.1" y="90" width="1.2" height="2"/><rect x="1104.1" y="95" width="1.2" height="2"/><rect x="1287.9" y="0" width="1.2" height="2"/><rect x="1287.9" y="5" width="1.2" height="2"/><rect x="1287.9" y="10" width="1.2" height="2"/><rect x="1287.9" y="15" width="1.2" height="2"/><rect x="1287.9" y="20" width="1.2" height="2"/><rect x="1287.9" y="25" width="1.2" height="2"/><rect x="1287.9" y="30" width="1.2" height="2"/><rect x="1287.9" y="35" width="1.2" height="2"/><rect x="1287.9" y="40" width="1.2" height="2"/><rect x="1287.9" y="45" width="1.2" height="2"/><rect x="1287.9" y="50" width="1.2" height="2"/><rect x="1287.9" y="55" width="1.2" height="2"/><rect x="1287.9" y="60" width="1.2" height="2"/><rect x="1287.9" y="65" width="1.2" height="2"/><rect x="1287.9" y="70" width="1.2" height="2"/><rect x="1287.9" y="75" width="1.2" height="2"/><rect x="1287.9" y="80" width="1.2" height="2"/><rect x="1287.9" y="85" width="1.2" height="2"/><rect x="1287.9" y="90" width="1.2" height="2"/><rect x="1287.9" y="95" width="1.2" height="2"/><rect x="1471.7" y="0" width="1.2" height="2"/><rect x="1471.7" y="5" width="1.2" height="2"/><rect x="1471.7" y="10" width="1.2" height="2"/><rect x="1471.7" y="15" width="1.2" height="2"/><rect x="1471.7" y="20" width="1.2" height="2"/><rect x="1471.7" y="25" width="1.2" height="2"/><rect x="1471.7" y="30" width="1.2" height="2"/><rect x="1471.7" y="35" width="1.2" height="2"/><rect x="1471.7" y="40" width="1.2" height="2"/><rect x="1471.7" y="45" width="1.2" height="2"/><rect x="1471.7" y="50" width="1.2" height="2"/><rect x="1471.7" y="55" width="1.2" height="2"/><rect x="1471.7" y="60" width="1.2" height="2"/><rect x="1471.7" y="65" width="1.2" height="2"/><rect x="1471.7" y="70" width="1.2" height="2"/><rect x="1471.7" y="75" width="1.2" height="2"/><rect x="1471.7" y="80" width="1.2" height="2"/><rect x="1471.7" y="85" width="1.2" height="2"/><rect x="1471.7" y="90" width="1.2" height="2"/><rect x="1471.7" y="95" width="1.2" height="2"/><rect x="1655.4" y="0" width="1.2" height="2"/><rect x="1655.4" y="5" width="1.2" height="2"/><rect x="1655.4" y="10" width="1.2" height="2"/><rect x="1655.4" y="15" width="1.2" height="2"/><rect x="1655.4" y="20" width="1.2" height="2"/><rect x="1655.4" y="25" width="1.2" height="2"/><rect x="1655.4" y="30" width="1.2" height="2"/><rect x="1655.4" y="35" width="1.2" height="2"/><rect x="1655.4" y="40" width="1.2" height="2"/><rect x="1655.4" y="45" width="1.2" height="2"/><rect x="1655.4" y="50" width="1.2" height="2"/><rect x="1655.4" y="55" width="1.2" height="2"/><rect x="1655.4" y="60" width="1.2" height="2"/><rect x="1655.4" y="65" width="1.2" height="2"/><rect x="1655.4" y="70" width="1.2" height="2"/><rect x="1655.4" y="75" width="1.2" height="2"/><rect x="1655.4" y="80" width="1.2" height="2"/><rect x="1655.4" y="85" width="1.2" height="2"/><rect x="1655.4" y="90" width="1.2" height="2"/><rect x="1655.4" y="95" width="1.2" height="2"/><rect x="1839.2" y="0" width="1.2" height="2"/><rect x="1839.2" y="5" width="1.2" height="2"/><rect x="1839.2" y="10" width="1.2" height="2"/><rect x="1839.2" y="15" width="1.2" height="2"/><rect x="1839.2" y="20" width="1.2" height="2"/><rect x="1839.2" y="25" width="1.2" height="2"/><rect x="1839.2" y="30" width="1.2" height="2"/><rect x="1839.2" y="35" width="1.2" height="2"/><rect x="1839.2" y="40" width="1.2" height="2"/><rect x="1839.2" y="45" width="1.2" height="2"/><rect x="1839.2" y="50" width="1.2" height="2"/><rect x="1839.2" y="55" width="1.2" height="2"/><rect x="1839.2" y="60" width="1.2" height="2"/><rect x="1839.2" y="65" width="1.2" height="2"/><rect x="1839.2" y="70" width="1.2" height="2"/><rect x="1839.2" y="75" width="1.2" height="2"/><rect x="1839.2" y="80" width="1.2" height="2"/><rect x="1839.2" y="85" width="1.2" height="2"/><rect x="1839.2" y="90" width="1.2" height="2"/><rect x="1839.2" y="95" width="1.2" height="2"/><rect x="2023.0" y="0" width="1.2" height="2"/><rect x="2023.0" y="5" width="1.2" height="2"/><rect x="2023.0" y="10" width="1.2" height="2"/><rect x="2023.0" y="15" width="1.2" height="2"/><rect x="2023.0" y="20" width="1.2" height="2"/><rect x="2023.0" y="25" width="1.2" height="2"/><rect x="2023.0" y="30" width="1.2" height="2"/><rect x="2023.0" y="35" width="1.2" height="2"/><rect x="2023.0" y="40" width="1.2" height="2"/><rect x="2023.0" y="45" width="1.2" height="2"/><rect x="2023.0" y="50" width="1.2" height="2"/><rect x="2023.0" y="55" width="1.2" height="2"/><rect x="2023.0" y="60" width="1.2" height="2"/><rect x="2023.0" y="65" width="1.2" height="2"/><rect x="2023.0" y="70" width="1.2" height="2"/><rect x="2023.0" y="75" width="1.2" height="2"/><rect x="2023.0" y="80" width="1.2" height="2"/><rect x="2023.0" y="85" width="1.2" height="2"/><rect x="2023.0" y="90" width="1.2" height="2"/><rect x="2023.0" y="95" width="1.2" height="2"/><rect x="2206.7" y="0" width="1.2" height="2"/><rect x="2206.7" y="5" width="1.2" height="2"/><rect x="2206.7" y="10" width="1.2" height="2"/><rect x="2206.7" y="15" width="1.2" height="2"/><rect x="2206.7" y="20" width="1.2" height="2"/><rect x="2206.7" y="25" width="1.2" height="2"/><rect x="2206.7" y="30" width="1.2" height="2"/><rect x="2206.7" y="35" width="1.2" height="2"/><rect x="2206.7" y="40" width="1.2" height="2"/><rect x="2206.7" y="45" width="1.2" height="2"/><rect x="2206.7" y="50" width="1.2" height="2"/><rect x="2206.7" y="55" width="1.2" height="2"/><rect x="2206.7" y="60" width="1.2" height="2"/><rect x="2206.7" y="65" width="1.2" height="2"/><rect x="2206.7" y="70" width="1.2" height="2"/><rect x="2206.7" y="75" width="1.2" height="2"/><rect x="2206.7" y="80" width="1.2" height="2"/><rect x="2206.7" y="85" width="1.2" height="2"/><rect x="2206.7" y="90" width="1.2" height="2"/><rect x="2206.7" y="95" width="1.2" height="2"/><rect x="2390.5" y="0" width="1.2" height="2"/><rect x="2390.5" y="5" width="1.2" height="2"/><rect x="2390.5" y="10" width="1.2" height="2"/><rect x="2390.5" y="15" width="1.2" height="2"/><rect x="2390.5" y="20" width="1.2" height="2"/><rect x="2390.5" y="25" width="1.2" height="2"/><rect x="2390.5" y="30" width="1.2" height="2"/><rect x="2390.5" y="35" width="1.2" height="2"/><rect x="2390.5" y="40" width="1.2" height="2"/><rect x="2390.5" y="45" width="1.2" height="2"/><rect x="2390.5" y="50" width="1.2" height="2"/><rect x="2390.5" y="55" width="1.2" height="2"/><rect x="2390.5" y="60" width="1.2" height="2"/><rect x="2390.5" y="65" width="1.2" height="2"/><rect x="2390.5" y="70" width="1.2" height="2"/><rect x="2390.5" y="75" width="1.2" height="2"/><rect x="2390.5" y="80" width="1.2" height="2"/><rect x="2390.5" y="85" width="1.2" height="2"/><rect x="2390.5" y="90" width="1.2" height="2"/><rect x="2390.5" y="95" width="1.2" height="2"/><rect x="2574.3" y="0" width="1.2" height="2"/><rect x="2574.3" y="5" width="1.2" height="2"/><rect x="2574.3" y="10" width="1.2" height="2"/><rect x="2574.3" y="15" width="1.2" height="2"/><rect x="2574.3" y="20" width="1.2" height="2"/><rect x="2574.3" y="25" width="1.2" height="2"/><rect x="2574.3" y="30" width="1.2" height="2"/><rect x="2574.3" y="35" width="1.2" height="2"/><rect x="2574.3" y="40" width="1.2" height="2"/><rect x="2574.3" y="45" width="1.2" height="2"/><rect x="2574.3" y="50" width="1.2" height="2"/><rect x="2574.3" y="55" width="1.2" height="2"/><rect x="2574.3" y="60" width="1.2" height="2"/><rect x="2574.3" y="65" width="1.2" height="2"/><rect x="2574.3" y="70" width="1.2" height="2"/><rect x="2574.3" y="75" width="1.2" height="2"/><rect x="2574.3" y="80" width="1.2" height="2"/><rect x="2574.3" y="85" width="1.2" height="2"/><rect x="2574.3" y="90" width="1.2" height="2"/><rect x="2574.3" y="95" width="1.2" height="2"/><rect x="2758.1" y="0" width="1.2" height="2"/><rect x="2758.1" y="5" width="1.2" height="2"/><rect x="2758.1" y="10" width="1.2" height="2"/><rect x="2758.1" y="15" width="1.2" height="2"/><rect x="2758.1" y="20" width="1.2" height="2"/><rect x="2758.1" y="25" width="1.2" height="2"/><rect x="2758.1" y="30" width="1.2" height="2"/><rect x="2758.1" y="35" width="1.2" height="2"/><rect x="2758.1" y="40" width="1.2" height="2"/><rect x="2758.1" y="45" width="1.2" height="2"/><rect x="2758.1" y="50" width="1.2" height="2"/><rect x="2758.1" y="55" width="1.2" height="2"/><rect x="2758.1" y="60" width="1.2" height="2"/><rect x="2758.1" y="65" width="1.2" height="2"/><rect x="2758.1" y="70" width="1.2" height="2"/><rect x="2758.1" y="75" width="1.2" height="2"/><rect x="2758.1" y="80" width="1.2" height="2"/><rect x="2758.1" y="85" width="1.2" height="2"/><rect x="2758.1" y="90" width="1.2" height="2"/><rect x="2758.1" y="95" width="1.2" height="2"/><rect x="2941.8" y="0" width="1.2" height="2"/><rect x="2941.8" y="5" width="1.2" height="2"/><rect x="2941.8" y="10" width="1.2" height="2"/><rect x="2941.8" y="15" width="1.2" height="2"/><rect x="2941.8" y="20" width="1.2" height="2"/><rect x="2941.8" y="25" width="1.2" height="2"/><rect x="2941.8" y="30" width="1.2" height="2"/><rect x="2941.8" y="35" width="1.2" height="2"/><rect x="2941.8" y="40" width="1.2" height="2"/><rect x="2941.8" y="45" width="1.2" height="2"/><rect x="2941.8" y="50" width="1.2" height="2"/><rect x="2941.8" y="55" width="1.2" height="2"/><rect x="2941.8" y="60" width="1.2" height="2"/><rect x="2941.8" y="65" width="1.2" height="2"/><rect x="2941.8" y="70" width="1.2" height="2"/><rect x="2941.8" y="75" width="1.2" height="2"/><rect x="2941.8" y="80" width="1.2" height="2"/><rect x="2941.8" y="85" width="1.2" height="2"/><rect x="2941.8" y="90" width="1.2" height="2"/><rect x="2941.8" y="95" width="1.2" height="2"/></g></svg>
<svg class="a" style="left:579px;top:649px;overflow:hidden" width="45" height="56" viewBox="0 0 45 56"><rect width="45" height="56" fill="#000"/><rect x="0" y="0" width="45" height="7" fill="#0a10b8"/><rect x="14" y="6" width="31" height="12" fill="#f8b800"/><path d="M0 4 L10 5 L18 9 L20 13 L14 17 L0 17 Z" fill="#000"/><rect x="0" y="17" width="45" height="7" fill="#e87800"/><rect x="16" y="23" width="29" height="12" fill="#e05010"/><path d="M0 23 L10 23 L20 28 L20 32 L11 35 L0 35 Z" fill="#000"/><rect x="0" y="35" width="45" height="7" fill="#c82000"/><rect x="16" y="41" width="29" height="12" fill="#c01800"/><path d="M0 41 L12 41 L20 46 L22 52 L18 56 L0 56 Z" fill="#000"/><rect x="23" y="25" width="2" height="2" fill="#1020c0"/><rect x="36" y="38" width="2" height="2" fill="#ffe000"/><rect x="38" y="29" width="2" height="2" fill="#ff2000"/><rect x="30" y="6" width="2" height="2" fill="#e02000"/><rect x="41" y="20" width="2" height="2" fill="#ffe000"/><rect x="37" y="14" width="2" height="2" fill="#ffe000"/><rect x="24" y="20" width="2" height="2" fill="#fff"/><rect x="41" y="14" width="2" height="2" fill="#000"/><rect x="32" y="46" width="2" height="2" fill="#1020c0"/><rect x="24" y="34" width="2" height="2" fill="#ff2000"/><rect x="20" y="23" width="2" height="2" fill="#1020c0"/><rect x="32" y="13" width="2" height="2" fill="#e02000"/><rect x="40" y="15" width="2" height="2" fill="#f8b000"/><rect x="34" y="46" width="2" height="2" fill="#ff2000"/><rect x="32" y="50" width="2" height="2" fill="#fff"/><rect x="36" y="40" width="2" height="2" fill="#ffe000"/><rect x="26" y="32" width="2" height="2" fill="#ffe000"/><rect x="28" y="44" width="2" height="2" fill="#ffe000"/><rect x="31" y="40" width="2" height="2" fill="#1020c0"/><rect x="40" y="35" width="2" height="2" fill="#ff2000"/><rect x="39" y="47" width="2" height="2" fill="#20c020"/><rect x="37" y="28" width="2" height="2" fill="#ffe000"/><rect x="33" y="11" width="2" height="2" fill="#fff"/><rect x="39" y="12" width="2" height="2" fill="#1020c0"/><rect x="36" y="10" width="2" height="2" fill="#ffe000"/><rect x="33" y="14" width="2" height="2" fill="#ffe000"/><rect x="34" y="35" width="2" height="2" fill="#1020c0"/><rect x="33" y="20" width="2" height="2" fill="#ffe000"/><rect x="23" y="13" width="2" height="2" fill="#f8b000"/><rect x="36" y="14" width="2" height="2" fill="#f8b000"/><rect x="41" y="23" width="2" height="2" fill="#20c020"/><rect x="34" y="35" width="2" height="2" fill="#ffe000"/><rect x="32" y="37" width="2" height="2" fill="#ff2000"/><rect x="38" y="45" width="2" height="2" fill="#ff2000"/><rect x="24" y="16" width="2" height="2" fill="#ffe000"/><rect x="23" y="34" width="2" height="2" fill="#ff2000"/><rect x="21" y="48" width="2" height="2" fill="#ffe000"/><rect x="32" y="26" width="2" height="2" fill="#ff2000"/><rect x="30" y="13" width="2" height="2" fill="#f8b000"/><rect x="26" y="11" width="2" height="2" fill="#ffe000"/><rect x="29" y="48" width="2" height="2" fill="#ffe000"/><rect x="42" y="23" width="2" height="2" fill="#ffe000"/><rect x="36" y="13" width="2" height="2" fill="#000"/><rect x="29" y="17" width="2" height="2" fill="#ffe000"/><rect x="27" y="48" width="2" height="2" fill="#000"/><rect x="32" y="15" width="2" height="2" fill="#ffe000"/><rect x="22" y="18" width="2" height="2" fill="#fff"/><rect x="34" y="44" width="2" height="2" fill="#e08000"/><rect x="28" y="36" width="2" height="2" fill="#ffe000"/><rect x="36" y="13" width="2" height="2" fill="#000"/><rect x="21" y="33" width="2" height="2" fill="#ffe000"/><rect x="38" y="11" width="2" height="2" fill="#e02000"/><rect x="20" y="39" width="2" height="2" fill="#20c020"/><rect x="31" y="12" width="2" height="2" fill="#f8b000"/><rect x="30" y="14" width="2" height="2" fill="#ffe000"/><rect x="39" y="30" width="2" height="2" fill="#ff2000"/><rect x="34" y="34" width="2" height="2" fill="#ff2000"/><rect x="33" y="31" width="2" height="2" fill="#ff2000"/><rect x="27" y="45" width="2" height="2" fill="#ffe000"/><rect x="25" y="22" width="2" height="2" fill="#f8b000"/><rect x="36" y="44" width="2" height="2" fill="#ff2000"/><rect x="21" y="25" width="2" height="2" fill="#ffe000"/><rect x="23" y="9" width="2" height="2" fill="#ffe000"/><rect x="34" y="8" width="2" height="2" fill="#f8b000"/><rect x="41" y="11" width="2" height="2" fill="#1020c0"/><rect x="33" y="12" width="2" height="2" fill="#000"/><rect x="36" y="22" width="2" height="2" fill="#e02000"/><rect x="22" y="43" width="2" height="2" fill="#e08000"/><rect x="23" y="47" width="2" height="2" fill="#1020c0"/><rect x="40" y="17" width="2" height="2" fill="#20c020"/><rect x="37" y="20" width="2" height="2" fill="#ffe000"/><rect x="20" y="28" width="2" height="2" fill="#ffe000"/><rect x="23" y="34" width="2" height="2" fill="#ff2000"/><rect x="31" y="28" width="2" height="2" fill="#ff2000"/><rect x="21" y="46" width="2" height="2" fill="#e08000"/><rect x="33" y="5" width="2" height="2" fill="#f8b000"/><rect x="41" y="40" width="2" height="2" fill="#20c020"/><rect x="21" y="31" width="2" height="2" fill="#ff2000"/><rect x="42" y="5" width="2" height="2" fill="#ffe000"/><rect x="39" y="10" width="2" height="2" fill="#ffe000"/><rect x="27" y="45" width="2" height="2" fill="#20c020"/><rect x="41" y="13" width="2" height="2" fill="#ffe000"/><rect x="28" y="40" width="2" height="2" fill="#fff"/><rect x="41" y="38" width="2" height="2" fill="#ff2000"/><rect x="27" y="14" width="2" height="2" fill="#ffe000"/><rect x="35" y="25" width="2" height="2" fill="#1020c0"/><rect x="20" y="47" width="2" height="2" fill="#ff2000"/><rect x="36" y="44" width="2" height="2" fill="#ff2000"/><rect x="32" y="50" width="2" height="2" fill="#ff2000"/><rect x="31" y="24" width="2" height="2" fill="#f8b000"/><rect x="24" y="12" width="2" height="2" fill="#ffe000"/><rect x="25" y="18" width="2" height="2" fill="#e02000"/><rect x="41" y="16" width="2" height="2" fill="#ffe000"/><rect x="26" y="44" width="2" height="2" fill="#ff2000"/><rect x="35" y="8" width="2" height="2" fill="#f8b000"/><rect x="24" y="33" width="2" height="2" fill="#ffe000"/><rect x="37" y="28" width="2" height="2" fill="#ffe000"/><rect x="20" y="43" width="2" height="2" fill="#ff2000"/><rect x="31" y="50" width="2" height="2" fill="#1020c0"/><rect x="28" y="48" width="2" height="2" fill="#ff2000"/><rect x="33" y="31" width="2" height="2" fill="#20c020"/><rect x="26" y="23" width="2" height="2" fill="#ffe000"/><rect x="40" y="39" width="2" height="2" fill="#ff2000"/><rect x="37" y="33" width="2" height="2" fill="#ff2000"/><rect x="31" y="9" width="2" height="2" fill="#ffe000"/><rect x="22" y="8" width="2" height="2" fill="#fff"/><rect x="38" y="43" width="2" height="2" fill="#ff2000"/><rect x="41" y="20" width="2" height="2" fill="#20c020"/><rect x="33" y="26" width="2" height="2" fill="#20c020"/><rect x="40" y="37" width="2" height="2" fill="#ffe000"/><rect x="39" y="39" width="2" height="2" fill="#ffe000"/><rect x="42" y="23" width="2" height="2" fill="#ffe000"/><rect x="41" y="48" width="2" height="2" fill="#ffe000"/><rect x="37" y="37" width="2" height="2" fill="#ff2000"/><rect x="38" y="34" width="2" height="2" fill="#000"/><rect x="31" y="17" width="2" height="2" fill="#1020c0"/><rect x="32" y="45" width="2" height="2" fill="#ff2000"/><rect x="35" y="47" width="2" height="2" fill="#ff2000"/><rect x="22" y="27" width="2" height="2" fill="#fff"/><rect x="34" y="29" width="2" height="2" fill="#ff2000"/><rect x="0" y="53" width="45" height="3" fill="#000"/><path d="M0 0 L12 0 L0 7 Z" fill="#1010ff"/><path d="M1 46 L1 54 L9 54 Z" fill="#fff"/></svg>
<svg class="a" style="left:2116px;top:649px;" width="46" height="56" viewBox="0 0 46 56"><rect width="46" height="56" fill="#000"/><rect x="0" y="0" width="46" height="6.7" fill="#0010c0"/><rect x="0" y="6.7" width="46" height="16.8" fill="#a8a8a0"/><rect x="0" y="23.5" width="46" height="6.7" fill="#d0a040"/><rect x="0" y="30.2" width="46" height="12.3" fill="#f8b800"/><rect x="0" y="42.6" width="46" height="9.0" fill="#e07010"/><rect x="20.7" y="6.7" width="5" height="22.4" fill="#111"/><rect x="9.2" y="18.5" width="13.8" height="3" fill="#111"/><rect x="27.6" y="15.7" width="16.1" height="3" fill="#111"/></svg>
<div class="t" style="left:2038.0px;top:671.0px;width:200px;text-align:center;font-size:14px;line-height:14px;color:#ffffff;font-family:'Liberation Sans';">(Media Offline)</div>
<svg class="a" style="left:3655px;top:649px;overflow:hidden" width="45" height="56" viewBox="0 0 45 56"><rect width="45" height="56" fill="#000"/><rect x="8" y="1" width="4" height="2" fill="#e01010"/><rect x="18" y="1" width="4" height="2" fill="#e01010"/><rect x="27" y="1" width="4" height="2" fill="#e01010"/><rect x="10" y="17" width="6" height="2" fill="#eee"/><rect x="3" y="20" width="6" height="3" fill="#eee"/><rect x="14" y="20" width="4" height="3" fill="#eee"/><rect x="19" y="20" width="3" height="2" fill="#eee"/><rect x="25" y="20" width="6" height="3" fill="#eee"/><rect x="34" y="20" width="3" height="3" fill="#eee"/><rect x="39" y="20" width="4" height="3" fill="#eee"/><rect x="4" y="25" width="6" height="2" fill="#ddd"/><rect x="18" y="25" width="2" height="2" fill="#ddd"/><rect x="30" y="25" width="2" height="2" fill="#ddd"/><rect x="35" y="25" width="2" height="2" fill="#ddd"/><rect x="8" y="34" width="2" height="2" fill="#ccc"/><rect x="14" y="34" width="2" height="2" fill="#ccc"/><rect x="14" y="43" width="8" height="2" fill="#e0c000"/><path d="M37 0 L45 0 L45 7 Z" fill="#1010ff"/></svg>
<svg class="a" style="left:579px;top:847px;overflow:hidden" width="45" height="57" viewBox="0 0 45 57"><rect width="45" height="57" fill="#000"/><rect x="0" y="0" width="45" height="7" fill="#0a10b8"/><rect x="14" y="6" width="31" height="12" fill="#f8b800"/><path d="M0 4 L10 5 L18 9 L20 13 L14 17 L0 17 Z" fill="#000"/><rect x="0" y="17" width="45" height="7" fill="#e87800"/><rect x="16" y="23" width="29" height="12" fill="#e05010"/><path d="M0 23 L10 23 L20 28 L20 32 L11 35 L0 35 Z" fill="#000"/><rect x="0" y="35" width="45" height="7" fill="#c82000"/><rect x="16" y="41" width="29" height="12" fill="#c01800"/><path d="M0 41 L12 41 L20 46 L22 52 L18 56 L0 56 Z" fill="#000"/><rect x="23" y="26" width="2" height="2" fill="#1020c0"/><rect x="36" y="39" width="2" height="2" fill="#ffe000"/><rect x="38" y="30" width="2" height="2" fill="#ff2000"/><rect x="30" y="6" width="2" height="2" fill="#e02000"/><rect x="41" y="20" width="2" height="2" fill="#ffe000"/><rect x="37" y="14" width="2" height="2" fill="#ffe000"/><rect x="24" y="21" width="2" height="2" fill="#fff"/><rect x="41" y="14" width="2" height="2" fill="#000"/><rect x="32" y="47" width="2" height="2" fill="#1020c0"/><rect x="24" y="35" width="2" height="2" fill="#ff2000"/><rect x="20" y="23" width="2" height="2" fill="#1020c0"/><rect x="32" y="13" width="2" height="2" fill="#e02000"/><rect x="40" y="15" width="2" height="2" fill="#f8b000"/><rect x="34" y="47" width="2" height="2" fill="#ff2000"/><rect x="32" y="50" width="2" height="2" fill="#fff"/><rect x="36" y="41" width="2" height="2" fill="#ffe000"/><rect x="26" y="32" width="2" height="2" fill="#ffe000"/><rect x="28" y="45" width="2" height="2" fill="#ffe000"/><rect x="31" y="41" width="2" height="2" fill="#1020c0"/><rect x="40" y="35" width="2" height="2" fill="#ff2000"/><rect x="39" y="48" width="2" height="2" fill="#20c020"/><rect x="37" y="29" width="2" height="2" fill="#ffe000"/><rect x="33" y="11" width="2" height="2" fill="#fff"/><rect x="39" y="12" width="2" height="2" fill="#1020c0"/><rect x="36" y="10" width="2" height="2" fill="#ffe000"/><rect x="33" y="15" width="2" height="2" fill="#ffe000"/><rect x="34" y="35" width="2" height="2" fill="#1020c0"/><rect x="33" y="20" width="2" height="2" fill="#ffe000"/><rect x="23" y="13" width="2" height="2" fill="#f8b000"/><rect x="36" y="14" width="2" height="2" fill="#f8b000"/><rect x="41" y="23" width="2" height="2" fill="#20c020"/><rect x="34" y="36" width="2" height="2" fill="#ffe000"/><rect x="32" y="38" width="2" height="2" fill="#ff2000"/><rect x="38" y="46" width="2" height="2" fill="#ff2000"/><rect x="24" y="16" width="2" height="2" fill="#ffe000"/><rect x="23" y="35" width="2" height="2" fill="#ff2000"/><rect x="21" y="49" width="2" height="2" fill="#ffe000"/><rect x="32" y="27" width="2" height="2" fill="#ff2000"/><rect x="30" y="13" width="2" height="2" fill="#f8b000"/><rect x="26" y="11" width="2" height="2" fill="#ffe000"/><rect x="29" y="49" width="2" height="2" fill="#ffe000"/><rect x="42" y="23" width="2" height="2" fill="#ffe000"/><rect x="36" y="13" width="2" height="2" fill="#000"/><rect x="29" y="17" width="2" height="2" fill="#ffe000"/><rect x="27" y="49" width="2" height="2" fill="#000"/><rect x="32" y="15" width="2" height="2" fill="#ffe000"/><rect x="22" y="18" width="2" height="2" fill="#fff"/><rect x="34" y="45" width="2" height="2" fill="#e08000"/><rect x="28" y="36" width="2" height="2" fill="#ffe000"/><rect x="36" y="13" width="2" height="2" fill="#000"/><rect x="21" y="34" width="2" height="2" fill="#ffe000"/><rect x="38" y="11" width="2" height="2" fill="#e02000"/><rect x="20" y="39" width="2" height="2" fill="#20c020"/><rect x="31" y="12" width="2" height="2" fill="#f8b000"/><rect x="30" y="14" width="2" height="2" fill="#ffe000"/><rect x="39" y="30" width="2" height="2" fill="#ff2000"/><rect x="34" y="34" width="2" height="2" fill="#ff2000"/><rect x="33" y="32" width="2" height="2" fill="#ff2000"/><rect x="27" y="45" width="2" height="2" fill="#ffe000"/><rect x="25" y="23" width="2" height="2" fill="#f8b000"/><rect x="36" y="45" width="2" height="2" fill="#ff2000"/><rect x="21" y="25" width="2" height="2" fill="#ff2000"/><rect x="23" y="9" width="2" height="2" fill="#ffe000"/><rect x="34" y="9" width="2" height="2" fill="#f8b000"/><rect x="41" y="11" width="2" height="2" fill="#1020c0"/><rect x="33" y="12" width="2" height="2" fill="#000"/><rect x="36" y="22" width="2" height="2" fill="#e02000"/><rect x="22" y="44" width="2" height="2" fill="#e08000"/><rect x="23" y="48" width="2" height="2" fill="#1020c0"/><rect x="40" y="18" width="2" height="2" fill="#20c020"/><rect x="37" y="21" width="2" height="2" fill="#ffe000"/><rect x="20" y="28" width="2" height="2" fill="#ffe000"/><rect x="23" y="34" width="2" height="2" fill="#ff2000"/><rect x="31" y="29" width="2" height="2" fill="#ff2000"/><rect x="21" y="47" width="2" height="2" fill="#e08000"/><rect x="33" y="5" width="2" height="2" fill="#f8b000"/><rect x="41" y="41" width="2" height="2" fill="#20c020"/><rect x="21" y="32" width="2" height="2" fill="#ff2000"/><rect x="42" y="5" width="2" height="2" fill="#ffe000"/><rect x="39" y="10" width="2" height="2" fill="#ffe000"/><rect x="27" y="46" width="2" height="2" fill="#20c020"/><rect x="41" y="13" width="2" height="2" fill="#ffe000"/><rect x="28" y="41" width="2" height="2" fill="#fff"/><rect x="41" y="38" width="2" height="2" fill="#ff2000"/><rect x="27" y="14" width="2" height="2" fill="#ffe000"/><rect x="35" y="25" width="2" height="2" fill="#1020c0"/><rect x="20" y="48" width="2" height="2" fill="#ff2000"/><rect x="36" y="45" width="2" height="2" fill="#ff2000"/><rect x="32" y="51" width="2" height="2" fill="#ff2000"/><rect x="31" y="24" width="2" height="2" fill="#f8b000"/><rect x="24" y="13" width="2" height="2" fill="#ffe000"/><rect x="25" y="18" width="2" height="2" fill="#e02000"/><rect x="41" y="16" width="2" height="2" fill="#ffe000"/><rect x="26" y="45" width="2" height="2" fill="#ff2000"/><rect x="35" y="8" width="2" height="2" fill="#f8b000"/><rect x="24" y="34" width="2" height="2" fill="#ffe000"/><rect x="37" y="29" width="2" height="2" fill="#ffe000"/><rect x="20" y="44" width="2" height="2" fill="#ff2000"/><rect x="31" y="51" width="2" height="2" fill="#1020c0"/><rect x="28" y="49" width="2" height="2" fill="#ff2000"/><rect x="33" y="32" width="2" height="2" fill="#20c020"/><rect x="26" y="23" width="2" height="2" fill="#ffe000"/><rect x="40" y="39" width="2" height="2" fill="#ff2000"/><rect x="37" y="34" width="2" height="2" fill="#ff2000"/><rect x="31" y="9" width="2" height="2" fill="#ffe000"/><rect x="22" y="8" width="2" height="2" fill="#fff"/><rect x="38" y="44" width="2" height="2" fill="#ff2000"/><rect x="41" y="20" width="2" height="2" fill="#20c020"/><rect x="33" y="27" width="2" height="2" fill="#20c020"/><rect x="40" y="37" width="2" height="2" fill="#ffe000"/><rect x="39" y="40" width="2" height="2" fill="#ffe000"/><rect x="42" y="23" width="2" height="2" fill="#ffe000"/><rect x="41" y="49" width="2" height="2" fill="#ffe000"/><rect x="37" y="37" width="2" height="2" fill="#ff2000"/><rect x="38" y="34" width="2" height="2" fill="#000"/><rect x="31" y="17" width="2" height="2" fill="#1020c0"/><rect x="32" y="46" width="2" height="2" fill="#ff2000"/><rect x="35" y="48" width="2" height="2" fill="#ff2000"/><rect x="22" y="28" width="2" height="2" fill="#fff"/><rect x="34" y="29" width="2" height="2" fill="#ff2000"/><rect x="0" y="54" width="45" height="3" fill="#000"/><path d="M0 0 L12 0 L0 7 Z" fill="#1010ff"/><path d="M1 47 L1 55 L9 55 Z" fill="#fff"/></svg>
<svg class="a" style="left:2131px;top:847px;" width="45" height="57" viewBox="0 0 45 57"><rect width="45" height="57" fill="#000"/><rect x="0" y="0" width="45" height="6.8" fill="#0010c0"/><rect x="0" y="6.8" width="45" height="17.1" fill="#a8a8a0"/><rect x="0" y="23.9" width="45" height="6.8" fill="#d0a040"/><rect x="0" y="30.8" width="45" height="12.5" fill="#f8b800"/><rect x="0" y="43.3" width="45" height="9.1" fill="#e07010"/><rect x="20.2" y="6.8" width="5" height="22.8" fill="#111"/><rect x="9.0" y="18.8" width="13.5" height="3" fill="#111"/><rect x="27.0" y="16.0" width="15.7" height="3" fill="#111"/></svg>
<div class="t" style="left:2053.0px;top:870.0px;width:200px;text-align:center;font-size:14px;line-height:14px;color:#6f7a7c;font-family:'Liberation Sans';">(Media Offline)</div>
<svg class="a" style="left:3686px;top:847px;overflow:hidden" width="46" height="57" viewBox="0 0 46 57"><rect width="46" height="57" fill="#000"/><rect x="8" y="1" width="4" height="2" fill="#e01010"/><rect x="18" y="1" width="4" height="2" fill="#e01010"/><rect x="27" y="1" width="4" height="2" fill="#e01010"/><rect x="10" y="17" width="6" height="2" fill="#eee"/><rect x="3" y="20" width="6" height="3" fill="#eee"/><rect x="14" y="20" width="4" height="3" fill="#eee"/><rect x="19" y="20" width="3" height="2" fill="#eee"/><rect x="25" y="20" width="6" height="3" fill="#eee"/><rect x="34" y="20" width="3" height="3" fill="#eee"/><rect x="39" y="20" width="4" height="3" fill="#eee"/><rect x="4" y="25" width="6" height="2" fill="#ddd"/><rect x="18" y="25" width="2" height="2" fill="#ddd"/><rect x="30" y="25" width="2" height="2" fill="#ddd"/><rect x="35" y="25" width="2" height="2" fill="#ddd"/><rect x="8" y="34" width="2" height="2" fill="#ccc"/><rect x="14" y="34" width="2" height="2" fill="#ccc"/><rect x="14" y="43" width="8" height="2" fill="#e0c000"/><path d="M38 0 L46 0 L46 7 Z" fill="#1010ff"/></svg>
<svg class="a" style="left:3616px;top:621px;" width="84" height="23" viewBox="0 0 84 23"><text x="31" y="19" font-family="Liberation Serif" font-style="italic" font-weight="bold" font-size="25" fill="#e6e6e6" stroke="#2a2a2a" stroke-width="1" paint-order="stroke" textLength="22">fx</text><rect x="61.5" y="2.5" width="19" height="4.5" rx="2" fill="#fafafa" stroke="#2a2a2a" stroke-width="1"/><rect x="61.5" y="10.2" width="19" height="4.5" rx="2" fill="#fafafa" stroke="#2a2a2a" stroke-width="1"/><rect x="61.5" y="17.9" width="19" height="4.5" rx="2" fill="#fafafa" stroke="#2a2a2a" stroke-width="1"/><path d="M6 1 L6 16 L21 16 M1 6 L16 6 L16 21" fill="none" stroke="#222" stroke-width="5"/><path d="M6 1 L6 16 L21 16 M1 6 L16 6 L16 21" fill="none" stroke="#fff" stroke-width="3"/></svg>
<svg class="a" style="left:3616px;top:717px;" width="84" height="23" viewBox="0 0 84 23"><text x="31" y="19" font-family="Liberation Serif" font-style="italic" font-weight="bold" font-size="25" fill="#e6e6e6" stroke="#2a2a2a" stroke-width="1" paint-order="stroke" textLength="22">fx</text><rect x="61.5" y="2.5" width="19" height="4.5" rx="2" fill="#fafafa" stroke="#2a2a2a" stroke-width="1"/><rect x="61.5" y="10.2" width="19" height="4.5" rx="2" fill="#fafafa" stroke="#2a2a2a" stroke-width="1"/><rect x="61.5" y="17.9" width="19" height="4.5" rx="2" fill="#fafafa" stroke="#2a2a2a" stroke-width="1"/></svg>
<svg class="a" style="left:3647px;top:819px;" width="84" height="23" viewBox="0 0 84 23"><text x="31" y="19" font-family="Liberation Serif" font-style="italic" font-weight="bold" font-size="25" fill="#e6e6e6" stroke="#2a2a2a" stroke-width="1" paint-order="stroke" textLength="22">fx</text><rect x="61.5" y="2.5" width="19" height="4.5" rx="2" fill="#fafafa" stroke="#2a2a2a" stroke-width="1"/><rect x="61.5" y="10.2" width="19" height="4.5" rx="2" fill="#fafafa" stroke="#2a2a2a" stroke-width="1"/><rect x="61.5" y="17.9" width="19" height="4.5" rx="2" fill="#fafafa" stroke="#2a2a2a" stroke-width="1"/><path d="M6 1 L6 16 L21 16 M1 6 L16 6 L16 21" fill="none" stroke="#222" stroke-width="5"/><path d="M6 1 L6 16 L21 16 M1 6 L16 6 L16 21" fill="none" stroke="#fff" stroke-width="3"/></svg>
<svg class="a" style="left:3616px;top:915px;" width="84" height="23" viewBox="0 0 84 23"><text x="31" y="19" font-family="Liberation Serif" font-style="italic" font-weight="bold" font-size="25" fill="#e6e6e6" stroke="#2a2a2a" stroke-width="1" paint-order="stroke" textLength="22">fx</text><rect x="61.5" y="2.5" width="19" height="4.5" rx="2" fill="#fafafa" stroke="#2a2a2a" stroke-width="1"/><rect x="61.5" y="10.2" width="19" height="4.5" rx="2" fill="#fafafa" stroke="#2a2a2a" stroke-width="1"/><rect x="61.5" y="17.9" width="19" height="4.5" rx="2" fill="#fafafa" stroke="#2a2a2a" stroke-width="1"/></svg>
<svg class="a" style="left:3616px;top:1016px;" width="84" height="23" viewBox="0 0 84 23"><text x="31" y="19" font-family="Liberation Serif" font-style="italic" font-weight="bold" font-size="25" fill="#e6e6e6" stroke="#2a2a2a" stroke-width="1" paint-order="stroke" textLength="22">fx</text><rect x="61.5" y="2.5" width="19" height="4.5" rx="2" fill="#fafafa" stroke="#2a2a2a" stroke-width="1"/><rect x="61.5" y="10.2" width="19" height="4.5" rx="2" fill="#fafafa" stroke="#2a2a2a" stroke-width="1"/><rect x="61.5" y="17.9" width="19" height="4.5" rx="2" fill="#fafafa" stroke="#2a2a2a" stroke-width="1"/></svg>
<svg class="a" style="left:0px;top:700px;" width="3832" height="420" viewBox="0 0 3832 420"><defs><path id="wf" d="M896 -0.6 898 -3 900 -3 902 -3 904 -3 906 -3 908 -3 910 -0.6 912 -0.6 914 -0.6 916 -0.6 918 -0.6 920 -0.6 922 -3 924 -3 926 -3 928 -0.6 930 -0.6 932 -0.6 934 -0.6 936 -0.6 938 -0.6 940 -0.6 942 -3 944 -3 946 -3 948 -0.6 950 -0.6 952 -0.6 954 -4 956 -4 958 -4 960 -4 962 -6 964 -6 966 -6 968 -6 970 -6 972 -6 974 -6 976 -6 978 -6 980 -6 982 -6 984 -6 986 -6 988 -6 990 -0.6 992 -0.6 994 -0.6 996 -0.6 998 -0.6 1000 -0.6 1002 -0.6 1004 -4 1006 -5 1008 -5 1010 -4 1012 -5 1014 -4 1016 -4 1018 -6 1020 -4 1022 -5 1024 -4 1026 -4 1028 -5 1030 -5 1032 -5 1034 -2 1036 -4 1038 -4 1040 -4 1042 -4 1044 -4 1046 -4 1048 -4 1050 -6 1052 -3 1054 -4 1056 -4 1058 -4 1060 -4 1062 -5 1064 -3 1066 -5 1068 -4 1070 -5 1072 -4 1074 -5 1076 -5 1078 -4 1080 -5 1082 -4 1084 -5 1086 -4 1088 -5 1090 -5 1092 -5 1094 -5 1096 -4 1098 -5 1100 -4 1102 -4 1104 -4 1106 -4 1108 -2 1110 -2 1112 -5 1114 -6 1116 -4 1118 -3 1120 -3 1122 -4 1124 -5 1126 -6 1128 -4 1130 -4 1132 -4 1134 -6 1136 -4 1138 -3 1140 -5 1142 -4 1144 -4 1146 -6 1148 -5 1150 -5 1152 -5 1154 -4 1156 -4 1158 -4 1160 -2 1162 -4 1164 -5 1166 -4 1168 -4 1170 -4 1172 -4 1174 -4 1176 -6 1178 -4 1180 -4 1182 -4 1184 -6 1186 -0.6 1188 -0.6 1190 -0.6 1192 -0.6 1194 -0.6 1196 -0.6 1198 -0.6 1200 -0.6 1202 -5 1204 -5 1206 -5 1208 -4 1210 -4 1212 -4 1214 -4 1216 -4 1218 -5 1220 -4 1222 -6 1224 -4 1226 -5 1228 -4 1230 -5 1232 -4 1234 -4 1236 -6 1238 -2 1240 -5 1242 -4 1244 -4 1246 -4 1248 -5 1250 -2 1252 -4 1254 -3 1256 -0.6 1258 -4 1260 -4 1262 -5 1264 -6 1266 -4 1268 -4 1270 -4 1272 -5 1274 -4 1276 -6 1278 -2 1280 -3 1282 -4 1284 -4 1286 -4 1288 -2 1290 -4 1292 -4 1294 -6 1296 -4 1298 -5 1300 -4 1302 -5 1304 -4 1306 -4 1308 -4 1310 -3 1312 -4 1314 -5 1316 -4 1318 -4 1320 -4 1322 -4 1324 -4 1326 -3 1328 -4 1330 -4 1332 -4 1334 -4 1336 -4 1338 -4 1340 -5 1342 -5 1344 -4 1346 -4 1348 -4 1350 -5 1352 -5 1354 -4 1356 -4 1358 -5 1360 -5 1362 -4 1364 -4 1366 -4 1368 -5 1370 -4 1372 -3 1374 -4 1376 -4 1378 -4 1380 -2 1382 -4 1384 -4 1386 -5 1388 -4 1390 -4 1392 -4 1394 -4 1396 -4 1398 -4 1400 -6 1402 -3 1404 -2 1406 -4 1408 -5 1410 -4 1412 -6 1414 -5 1416 -4 1418 -4 1420 -5 1422 -5 1424 -4 1426 -6 1428 -4 1430 -4 1432 -3 1434 -5 1436 -6 1438 -4 1440 -4 1442 -0.6 1444 -0.6 1446 -0.6 1448 -0.6 1450 -0.6 1452 -0.6 1454 -0.6 1456 -5 1458 -3 1460 -4 1462 -4 1464 -4 1466 -5 1468 -4 1470 -5 1472 -4 1474 -4 1476 -4 1478 -3 1480 -5 1482 -4 1484 -4 1486 -4 1488 -4 1490 -2 1492 -3 1494 -5 1496 -5 1498 -6 1500 -6 1502 -4 1504 -4 1506 -2 1508 -4 1510 -3 1512 -4 1514 -4 1516 -4 1518 -4 1520 -4 1522 -4 1524 -4 1526 -5 1528 -5 1530 -5 1532 -4 1534 -4 1536 -4 1538 -5 1540 -4 1542 -4 1544 -4 1546 -3 1548 -4 1550 -4 1552 -4 1554 -2 1556 -5 1558 -4 1560 -4 1562 -6 1564 -4 1566 -3 1568 -2 1570 -5 1572 -4 1574 -4 1576 -4 1578 -5 1580 -4 1582 -4 1584 -5 1586 -4 1588 -4 1590 -2 1592 -4 1594 -4 1596 -4 1598 -4 1600 -4 1602 -4 1604 -3 1606 -6 1608 -6 1610 -5 1612 -5 1614 -5 1616 -4 1618 -4 1620 -2 1622 -4 1624 -4 1626 -5 1628 -5 1630 -2 1632 -6 1634 -5 1636 -4 1638 -5 1640 -0.6 1642 -0.6 1644 -0.6 1646 -0.6 1648 -0.6 1650 -0.6 1652 -4 1654 -4 1656 -2 1658 -4 1660 -4 1662 -4 1664 -5 1666 -3 1668 -5 1670 -4 1672 -4 1674 -2 1676 -4 1678 -5 1680 -3 1682 -4 1684 -5 1686 -5 1688 -4 1690 -6 1692 -5 1694 -4 1696 -5 1698 -4 1700 -5 1702 -4 1704 -4 1706 -4 1708 -5 1710 -5 1712 -6 1714 -5 1716 -4 1718 -4 1720 -4 1722 -6 1724 -5 1726 -4 1728 -4 1730 -4 1732 -4 1734 -5 1736 -4 1738 -4 1740 -6 1742 -4 1744 -4 1746 -5 1748 -6 1750 -5 1752 -4 1754 -4 1756 -4 1758 -4 1760 -4 1762 -4 1764 -6 1766 -2 1768 -2 1770 -4 1772 -4 1774 -2 1776 -2 1778 -4 1780 -4 1782 -4 1784 -4 1786 -4 1788 -4 1790 -4 1792 -4 1794 -4 1796 -5 1798 -4 1800 -0.6 1802 -4 1804 -5 1806 -4 1808 -4 1810 -5 1812 -5 1814 -4 1816 -4 1818 -5 1820 -3 1822 -4 1824 -4 1826 -2 1828 -2 1830 -5 1832 -6 1834 -3 1836 -4 1838 -4 1840 -4 1842 -4 1844 -5 1846 -4 1848 -4 1850 -3 1852 -4 1854 -4 1856 -4 1858 -4 1860 -5 1862 -5 1864 -4 1866 -4 1868 -4 1870 -5 1872 -5 1874 -4 1876 -4 1878 -5 1880 -3 1882 -3 1884 -4 1886 -6 1888 -4 1890 -5 1892 -4 1894 -4 1896 -3 1898 -4 1900 -6 1902 -6 1904 -3 1906 -4 1908 -0.6 1910 -4 1912 -5 1914 -4 1916 -3 1918 -4 1920 -5 1922 -5 1924 -4 1926 -4 1928 -3 1930 -5 1932 -4 1934 -3 1936 -3 1938 -4 1940 -4 1942 -4 1944 -4 1946 -4 1948 -4 1950 -4 1952 -2 1954 -6 1956 -4 1958 -5 1960 -4 1962 -4 1964 -4 1966 -4 1968 -4 1970 -3 1972 -4 1974 -6 1976 -5 1978 -3 1980 -5 1982 -4 1984 -0.6 1986 -0.6 1988 -0.6 1990 -0.6 1992 -0.6 1994 -0.6 1996 -0.6 1998 -6 2000 -6 2002 -4 2004 -5 2006 -4 2008 -5 2010 -4 2012 -4 2014 -6 2016 -4 2018 -4 2020 -4 2022 -3 2024 -5 2026 -2 2028 -4 2030 -5 2032 -5 2034 -4 2036 -6 2038 -5 2040 -3 2042 -3 2044 -4 2046 -4 2048 -5 2050 -4 2052 -4 2054 -5 2056 -5 2058 -5 2060 -4 2062 -3 2064 -4 2066 -2 2068 -4 2070 -5 2072 -4 2074 -3 2076 -4 2078 -4 2080 -4 2082 -4 2084 -4 2086 -5 2088 -4 2090 -4 2092 -0.6 2094 -0.6 2096 -0.6 2098 -0.6 2100 -0.6 2102 -0.6 2104 -0.6 2106 -4 2108 -4 2110 -4 2112 -4 2114 -2 2116 -4 2118 -2 2120 -2 2122 -4 2124 -4 2126 -2 2128 -4 2130 -4 2132 -6 2134 -5 2136 -4 2138 -4 2140 -4 2142 -4 2144 -4 2146 -4 2148 -4 2150 -6 2152 -5 2154 -4 2156 -4 2158 -3 2160 -4 2162 -3 2164 -5 2166 -4 2168 -6 2170 -4 2172 -4 2174 -4 2176 -4 2178 -3 2180 -4 2182 -4 2184 -6 2186 -3 2188 -4 2190 -4 2192 -5 2194 -4 2196 -4 2198 -3 2200 -5 2202 -4 2204 -5 2206 -4 2208 -4 2210 -5 2212 -5 2214 -5 2216 -4 2218 -5 2220 -4 2222 -5 2224 -5 2226 -2 2228 -4 2230 -4 2232 -5 2234 -6 2236 -5 2238 -4 2240 -4 2242 -5 2244 -4 2246 -0.6 2248 -4 2250 -4 2252 -5 2254 -4 2256 -5 2258 -2 2260 -5 2262 -5 2264 -5 2266 -4 2268 -4 2270 -4 2272 -3 2274 -5 2276 -5 2278 -4 2280 -4 2282 -4 2284 -4 2286 -4 2288 -5 2290 -4 2292 -4 2294 -5 2296 -5 2298 -4 2300 -5 2302 -6 2304 -5 2306 -4 2308 -2 2310 -5 2312 -4 2314 -0.6 2316 -0.6 2318 -0.6 2320 -0.6 2322 -0.6 2324 -0.6 2326 -0.6 2328 -0.6 2330 -4 2332 -4 2334 -4 2336 -4 2338 -2 2340 -5 2342 -4 2344 -5 2346 -4 2348 -4 2350 -4 2352 -4 2354 -6 2356 -4 2358 -4 2360 -4 2362 -4 2364 -4 2366 -4 2368 -3 2370 -4 2372 -2 2374 -4 2376 -5 2378 -4 2380 -4 2382 -3 2384 -6 2386 -4 2388 -5 2390 -4 2392 -6 2394 -4 2396 -5 2398 -4 2400 -4 2402 -6 2404 -4 2406 -2 2408 -4 2410 -5 2412 -4 2414 -4 2416 -3 2418 -4 2420 -4 2422 -4 2424 -6 2426 -4 2428 -5 2430 -4 2432 -4 2434 -5 2436 -4 2438 -4 2440 -4 2442 -4 2444 -4 2446 -4 2448 -4 2450 -4 2452 -4 2454 -4 2456 -4 2458 -6 2460 -4 2462 -4 2464 -4 2466 -5 2468 -6 2470 -5 2472 -4 2474 -4 2476 -5 2478 -4 2480 -5 2482 -4 2484 -3 2486 -4 2488 -4 2490 -5 2492 -5 2494 -4 2496 -4 2498 -0.6 2500 -0.6 2502 -0.6 2504 -0.6 2506 -0.6 2508 -0.6 2510 -2 2512 -4 2514 -4 2516 -4 2518 -5 2520 -5 2522 -4 2524 -4 2526 -5 2528 -5 2530 -5 2532 -2 2534 -4 2536 -5 2538 -5 2540 -4 2542 -3 2544 -4 2546 -5 2548 -4 2550 -4 2552 -5 2554 -4 2556 -4 2558 -4 2560 -2 2562 -4 2564 -4 2566 -4 2568 -3 2570 -5 2572 -4 2574 -4 2576 -4 2578 -4 2580 -4 2582 -6 2584 -4 2586 -4 2588 -6 2590 -5 2592 -4 2594 -2 2596 -4 2598 -4 2600 -2 2602 -0.6 2604 -0.6 2606 -4 2608 -5 2610 -4 2612 -4 2614 -4 2616 -4 2618 -4 2620 -4 2622 -4 2624 -4 2626 -4 2628 -3 2630 -5 2632 -5 2634 -5 2636 -4 2638 -4 2640 -4 2642 -2 2644 -5 2646 -3 2648 -4 2650 -4 2652 -5 2654 -4 2656 -6 2658 -4 2660 -4 2662 -5 2664 -4 2666 -4 2668 -5 2670 -4 2672 -4 2674 -3 2676 -4 2678 -5 2680 -5 2682 -4 2684 -3 2686 -4 2688 -4 2690 -5 2692 -5 2694 -5 2696 -4 2698 -4 2700 -5 2702 -4 2704 -5 2706 -3 2708 -4 2710 -4 2712 -2 2714 -0.6 2716 -4 2718 -3 2720 -4 2722 -4 2724 -4 2726 -5 2728 -5 2730 -4 2732 -4 2734 -4 2736 -5 2738 -5 2740 -5 2742 -4 2744 -4 2746 -4 2748 -4 2750 -4 2752 -6 2754 -4 2756 -4 2758 -4 2760 -5 2762 -4 2764 -3 2766 -4 2768 -6 2770 -2 2772 -4 2774 -4 2776 -5 2778 -5 2780 -4 2782 -6 2784 -5 2786 -5 2788 -5 2790 -6 2792 -5 2794 -4 2796 -4 2798 -4 2800 -4 2802 -3 2804 -4 2806 -5 2808 -3 2810 -3 2812 -4 2814 -4 2816 -4 2818 -0.6 2820 -0.6 2822 -0.6 2824 -0.6 2826 -0.6 2828 -0.6 2830 -0.6 2832 -6 2834 -4 2836 -4 2838 -5 2840 -4 2842 -5 2844 -4 2846 -4 2848 -4 2850 -4 2852 -5 2854 -5 2856 -4 2858 -5 2860 -4 2862 -4 2864 -5 2866 -6 2868 -4 2870 -6 2872 -5 2874 -4 2876 -4 2878 -3 2880 -4 2882 -5 2884 -5 2886 -4 2888 -4 2890 -2 2892 -4 2894 -4 2896 -4 2898 -4 2900 -6 2902 -4 2904 -4 2906 -4 2908 -5 2910 -4 2912 -2 2914 -2 2916 -6 2918 -6 2920 -2 2922 -4 2924 -5 2926 -2 2928 -4 2930 -2 2932 -3 2934 -4 2936 -4 2938 -0.6 2940 -0.6 2942 -3 2944 -5 2946 -5 2948 -2 2950 -3 2952 -4 2954 -4 2956 -4 2958 -4 2960 -5 2962 -5 2964 -5 2966 -4 2968 -5 2970 -5 2972 -5 2974 -4 2976 -2 2978 -4 2980 -4 2982 -4 2984 -5 2986 -4 2988 -4 2990 -4 2992 -4 2994 -4 2996 -4 2998 -4 3000 -6 3002 -5 3004 -0.6 3006 -0.6 3008 -0.6 3010 -0.6 3012 -0.6 3014 -0.6 3016 -4 3018 -4 3020 -6 3022 -2 3024 -4 3026 -4 3028 -5 3030 -4 3032 -5 3034 -5 3036 -4 3038 -4 3040 -4 3042 -4 3044 -4 3046 -5 3048 -4 3050 -4 3052 -5 3054 -5 3056 -2 3058 -4 3060 -4 3062 -4 3064 -6 3066 -6 3068 -4 3070 -4 3072 -4 3074 -4 3076 -4 3078 -4 3080 -4 3082 -4 3084 -4 3086 -5 3088 -4 3090 -5 3092 -5 3094 -4 3096 -4 3098 -5 3100 -4 3102 -5 3104 -5 3106 -4 3108 -2 3110 -4 3112 -5 3114 -4 3116 -0.6 3118 -4 3120 -5 3122 -5 3124 -2 3126 -6 3128 -5 3130 -4 3132 -4 3134 -5 3136 -3 3138 -3 3140 -5 3142 -5 3144 -4 3146 -4 3148 -4 3150 -4 3152 -4 3154 -4 3156 -4 3158 -4 3160 -3 3162 -4 3164 -5 3166 -4 3168 -5 3170 -4 3172 -2 3174 -3 3176 -4 3178 -4 3180 -5 3182 -6 3184 -5 3186 -4 3188 -4 3190 -4 3192 -4 3194 -6 3196 -4 3198 -4 3200 -4 3202 -5 3204 -6 3206 -4 3208 -4 3210 -5 3212 -4 3214 -6 3216 -4 3218 -4 3220 -4 3222 -5 3224 -5 3226 -4 3228 -5 3230 -4 3232 -4 3234 -6 3236 -5 3238 -5 3240 -5 3242 -4 3244 -6 3246 -4 3248 -6 3250 -6 3252 -0.6 3254 -0.6 3256 -4 3258 -2 3260 -4 3262 -4 3264 -2 3266 -4 3268 -4 3270 -4 3272 -4 3274 -4 3276 -4 3278 -3 3280 -5 3282 -5 3284 -4 3286 -4 3288 -4 3290 -5 3292 -5 3294 -4 3296 -4 3298 -5 3300 -4 3302 -5 3304 -4 3306 -2 3308 -4 3310 -4 3312 -5 3314 -5 3316 -4 3318 -4 3320 -3 3322 -3 3324 -5 3326 -5 3328 -2 3330 -4 3332 -4 3334 -5 3336 -4 3338 -4 3340 -4 3342 -5 3344 -4 3346 -4 3348 -6 3350 -4 3352 -4 3354 -4 3356 -4 3358 -5 3360 -4 3362 -4 3364 -0.6 3366 -0.6 3368 -0.6 3370 -0.6 3372 -0.6 3374 -0.6 3376 -5 3378 -3 3380 -4 3382 -4 3384 -4 3386 -4 3388 -4 3390 -5 3392 -3 3394 -5 3396 -3 3398 -4 3400 -5 3402 -3 3404 -2 3406 -4 3408 -4 3410 -5 3412 -5 3414 -6 3416 -4 3418 -4 3420 -5 3422 -4 3424 -6 3426 -4 3428 -5 3430 -4 3432 -4 3434 -4 3436 -5 3438 -4 3440 -5 3442 -5 3444 -4 3446 -5 3448 -5 3450 -5 3452 -3 3454 -4 3456 -4 3458 -5 3460 -4 3462 -5 3464 -4 3466 -3 3468 -4 3470 -5 3472 -5 3474 -4 3476 -4 3478 -4 3480 -6 3482 -5 3484 -5 3486 -4 3488 -5 3490 -4 3492 -4 3494 -4 3496 -4 3498 -5 3500 -5 3502 -4 3504 -4 3506 -4 3508 -6 3510 -4 3512 -2 3514 -4 3516 -4 3518 -4 3520 -4 3522 -6 3524 -3 3526 -4 3528 -4 3530 -4 3532 -4 3534 -5 3536 -4 3538 -6 3540 -5 3542 -4 3544 -5 3546 -0.6 3548 -0.6 3550 -0.6 3552 -0.6 3554 -0.6 3556 -0.6 3558 -5 3560 -3 3562 -4 3564 -5 3566 -4 3568 -4 3570 -4 3572 -4 3574 -2 3576 -5 3578 -5 3580 -2 3582 -5 3584 -4 3586 -5 3588 -3 3590 -4 3592 -5 3594 -0.6 3596 -0.6 3598 -0.6 3600 -0.6 3602 -0.6 3604 -0.6 3606 -0.6 3608 -0.6 3610 -4 3612 -4 3614 -5 3616 -5 3618 -4 3620 -4 3622 -5 3624 -5 3626 -3 3628 -6 3630 -5 3632 -4 3634 -5 3636 -4 3638 -4 3640 -5 3642 -4 3644 -5 3646 -3 3648 -4 3650 -5 3652 -6 3652 6 3650 5 3648 4 3646 3 3644 5 3642 4 3640 5 3638 4 3636 4 3634 5 3632 4 3630 5 3628 6 3626 3 3624 5 3622 5 3620 4 3618 4 3616 5 3614 5 3612 4 3610 4 3608 0.6 3606 0.6 3604 0.6 3602 0.6 3600 0.6 3598 0.6 3596 0.6 3594 0.6 3592 5 3590 4 3588 3 3586 5 3584 4 3582 5 3580 2 3578 5 3576 5 3574 2 3572 4 3570 4 3568 4 3566 4 3564 5 3562 4 3560 3 3558 5 3556 0.6 3554 0.6 3552 0.6 3550 0.6 3548 0.6 3546 0.6 3544 5 3542 4 3540 5 3538 6 3536 4 3534 5 3532 4 3530 4 3528 4 3526 4 3524 3 3522 6 3520 4 3518 4 3516 4 3514 4 3512 2 3510 4 3508 6 3506 4 3504 4 3502 4 3500 5 3498 5 3496 4 3494 4 3492 4 3490 4 3488 5 3486 4 3484 5 3482 5 3480 6 3478 4 3476 4 3474 4 3472 5 3470 5 3468 4 3466 3 3464 4 3462 5 3460 4 3458 5 3456 4 3454 4 3452 3 3450 5 3448 5 3446 5 3444 4 3442 5 3440 5 3438 4 3436 5 3434 4 3432 4 3430 4 3428 5 3426 4 3424 6 3422 4 3420 5 3418 4 3416 4 3414 6 3412 5 3410 5 3408 4 3406 4 3404 2 3402 3 3400 5 3398 4 3396 3 3394 5 3392 3 3390 5 3388 4 3386 4 3384 4 3382 4 3380 4 3378 3 3376 5 3374 0.6 3372 0.6 3370 0.6 3368 0.6 3366 0.6 3364 0.6 3362 4 3360 4 3358 5 3356 4 3354 4 3352 4 3350 4 3348 6 3346 4 3344 4 3342 5 3340 4 3338 4 3336 4 3334 5 3332 4 3330 4 3328 2 3326 5 3324 5 3322 3 3320 3 3318 4 3316 4 3314 5 3312 5 3310 4 3308 4 3306 2 3304 4 3302 5 3300 4 3298 5 3296 4 3294 4 3292 5 3290 5 3288 4 3286 4 3284 4 3282 5 3280 5 3278 3 3276 4 3274 4 3272 4 3270 4 3268 4 3266 4 3264 2 3262 4 3260 4 3258 2 3256 4 3254 0.6 3252 0.6 3250 6 3248 6 3246 4 3244 6 3242 4 3240 5 3238 5 3236 5 3234 6 3232 4 3230 4 3228 5 3226 4 3224 5 3222 5 3220 4 3218 4 3216 4 3214 6 3212 4 3210 5 3208 4 3206 4 3204 6 3202 5 3200 4 3198 4 3196 4 3194 6 3192 4 3190 4 3188 4 3186 4 3184 5 3182 6 3180 5 3178 4 3176 4 3174 3 3172 2 3170 4 3168 5 3166 4 3164 5 3162 4 3160 3 3158 4 3156 4 3154 4 3152 4 3150 4 3148 4 3146 4 3144 4 3142 5 3140 5 3138 3 3136 3 3134 5 3132 4 3130 4 3128 5 3126 6 3124 2 3122 5 3120 5 3118 4 3116 0.6 3114 4 3112 5 3110 4 3108 2 3106 4 3104 5 3102 5 3100 4 3098 5 3096 4 3094 4 3092 5 3090 5 3088 4 3086 5 3084 4 3082 4 3080 4 3078 4 3076 4 3074 4 3072 4 3070 4 3068 4 3066 6 3064 6 3062 4 3060 4 3058 4 3056 2 3054 5 3052 5 3050 4 3048 4 3046 5 3044 4 3042 4 3040 4 3038 4 3036 4 3034 5 3032 5 3030 4 3028 5 3026 4 3024 4 3022 2 3020 6 3018 4 3016 4 3014 0.6 3012 0.6 3010 0.6 3008 0.6 3006 0.6 3004 0.6 3002 5 3000 6 2998 4 2996 4 2994 4 2992 4 2990 4 2988 4 2986 4 2984 5 2982 4 2980 4 2978 4 2976 2 2974 4 2972 5 2970 5 2968 5 2966 4 2964 5 2962 5 2960 5 2958 4 2956 4 2954 4 2952 4 2950 3 2948 2 2946 5 2944 5 2942 3 2940 0.6 2938 0.6 2936 4 2934 4 2932 3 2930 2 2928 4 2926 2 2924 5 2922 4 2920 2 2918 6 2916 6 2914 2 2912 2 2910 4 2908 5 2906 4 2904 4 2902 4 2900 6 2898 4 2896 4 2894 4 2892 4 2890 2 2888 4 2886 4 2884 5 2882 5 2880 4 2878 3 2876 4 2874 4 2872 5 2870 6 2868 4 2866 6 2864 5 2862 4 2860 4 2858 5 2856 4 2854 5 2852 5 2850 4 2848 4 2846 4 2844 4 2842 5 2840 4 2838 5 2836 4 2834 4 2832 6 2830 0.6 2828 0.6 2826 0.6 2824 0.6 2822 0.6 2820 0.6 2818 0.6 2816 4 2814 4 2812 4 2810 3 2808 3 2806 5 2804 4 2802 3 2800 4 2798 4 2796 4 2794 4 2792 5 2790 6 2788 5 2786 5 2784 5 2782 6 2780 4 2778 5 2776 5 2774 4 2772 4 2770 2 2768 6 2766 4 2764 3 2762 4 2760 5 2758 4 2756 4 2754 4 2752 6 2750 4 2748 4 2746 4 2744 4 2742 4 2740 5 2738 5 2736 5 2734 4 2732 4 2730 4 2728 5 2726 5 2724 4 2722 4 2720 4 2718 3 2716 4 2714 0.6 2712 2 2710 4 2708 4 2706 3 2704 5 2702 4 2700 5 2698 4 2696 4 2694 5 2692 5 2690 5 2688 4 2686 4 2684 3 2682 4 2680 5 2678 5 2676 4 2674 3 2672 4 2670 4 2668 5 2666 4 2664 4 2662 5 2660 4 2658 4 2656 6 2654 4 2652 5 2650 4 2648 4 2646 3 2644 5 2642 2 2640 4 2638 4 2636 4 2634 5 2632 5 2630 5 2628 3 2626 4 2624 4 2622 4 2620 4 2618 4 2616 4 2614 4 2612 4 2610 4 2608 5 2606 4 2604 0.6 2602 0.6 2600 2 2598 4 2596 4 2594 2 2592 4 2590 5 2588 6 2586 4 2584 4 2582 6 2580 4 2578 4 2576 4 2574 4 2572 4 2570 5 2568 3 2566 4 2564 4 2562 4 2560 2 2558 4 2556 4 2554 4 2552 5 2550 4 2548 4 2546 5 2544 4 2542 3 2540 4 2538 5 2536 5 2534 4 2532 2 2530 5 2528 5 2526 5 2524 4 2522 4 2520 5 2518 5 2516 4 2514 4 2512 4 2510 2 2508 0.6 2506 0.6 2504 0.6 2502 0.6 2500 0.6 2498 0.6 2496 4 2494 4 2492 5 2490 5 2488 4 2486 4 2484 3 2482 4 2480 5 2478 4 2476 5 2474 4 2472 4 2470 5 2468 6 2466 5 2464 4 2462 4 2460 4 2458 6 2456 4 2454 4 2452 4 2450 4 2448 4 2446 4 2444 4 2442 4 2440 4 2438 4 2436 4 2434 5 2432 4 2430 4 2428 5 2426 4 2424 6 2422 4 2420 4 2418 4 2416 3 2414 4 2412 4 2410 5 2408 4 2406 2 2404 4 2402 6 2400 4 2398 4 2396 5 2394 4 2392 6 2390 4 2388 5 2386 4 2384 6 2382 3 2380 4 2378 4 2376 5 2374 4 2372 2 2370 4 2368 3 2366 4 2364 4 2362 4 2360 4 2358 4 2356 4 2354 6 2352 4 2350 4 2348 4 2346 4 2344 5 2342 4 2340 5 2338 2 2336 4 2334 4 2332 4 2330 4 2328 0.6 2326 0.6 2324 0.6 2322 0.6 2320 0.6 2318 0.6 2316 0.6 2314 0.6 2312 4 2310 5 2308 2 2306 4 2304 5 2302 6 2300 5 2298 4 2296 5 2294 5 2292 4 2290 4 2288 5 2286 4 2284 4 2282 4 2280 4 2278 4 2276 5 2274 5 2272 3 2270 4 2268 4 2266 4 2264 5 2262 5 2260 5 2258 2 2256 5 2254 4 2252 5 2250 4 2248 4 2246 0.6 2244 4 2242 5 2240 4 2238 4 2236 5 2234 6 2232 5 2230 4 2228 4 2226 2 2224 5 2222 5 2220 4 2218 5 2216 4 2214 5 2212 5 2210 5 2208 4 2206 4 2204 5 2202 4 2200 5 2198 3 2196 4 2194 4 2192 5 2190 4 2188 4 2186 3 2184 6 2182 4 2180 4 2178 3 2176 4 2174 4 2172 4 2170 4 2168 6 2166 4 2164 5 2162 3 2160 4 2158 3 2156 4 2154 4 2152 5 2150 6 2148 4 2146 4 2144 4 2142 4 2140 4 2138 4 2136 4 2134 5 2132 6 2130 4 2128 4 2126 2 2124 4 2122 4 2120 2 2118 2 2116 4 2114 2 2112 4 2110 4 2108 4 2106 4 2104 0.6 2102 0.6 2100 0.6 2098 0.6 2096 0.6 2094 0.6 2092 0.6 2090 4 2088 4 2086 5 2084 4 2082 4 2080 4 2078 4 2076 4 2074 3 2072 4 2070 5 2068 4 2066 2 2064 4 2062 3 2060 4 2058 5 2056 5 2054 5 2052 4 2050 4 2048 5 2046 4 2044 4 2042 3 2040 3 2038 5 2036 6 2034 4 2032 5 2030 5 2028 4 2026 2 2024 5 2022 3 2020 4 2018 4 2016 4 2014 6 2012 4 2010 4 2008 5 2006 4 2004 5 2002 4 2000 6 1998 6 1996 0.6 1994 0.6 1992 0.6 1990 0.6 1988 0.6 1986 0.6 1984 0.6 1982 4 1980 5 1978 3 1976 5 1974 6 1972 4 1970 3 1968 4 1966 4 1964 4 1962 4 1960 4 1958 5 1956 4 1954 6 1952 2 1950 4 1948 4 1946 4 1944 4 1942 4 1940 4 1938 4 1936 3 1934 3 1932 4 1930 5 1928 3 1926 4 1924 4 1922 5 1920 5 1918 4 1916 3 1914 4 1912 5 1910 4 1908 0.6 1906 4 1904 3 1902 6 1900 6 1898 4 1896 3 1894 4 1892 4 1890 5 1888 4 1886 6 1884 4 1882 3 1880 3 1878 5 1876 4 1874 4 1872 5 1870 5 1868 4 1866 4 1864 4 1862 5 1860 5 1858 4 1856 4 1854 4 1852 4 1850 3 1848 4 1846 4 1844 5 1842 4 1840 4 1838 4 1836 4 1834 3 1832 6 1830 5 1828 2 1826 2 1824 4 1822 4 1820 3 1818 5 1816 4 1814 4 1812 5 1810 5 1808 4 1806 4 1804 5 1802 4 1800 0.6 1798 4 1796 5 1794 4 1792 4 1790 4 1788 4 1786 4 1784 4 1782 4 1780 4 1778 4 1776 2 1774 2 1772 4 1770 4 1768 2 1766 2 1764 6 1762 4 1760 4 1758 4 1756 4 1754 4 1752 4 1750 5 1748 6 1746 5 1744 4 1742 4 1740 6 1738 4 1736 4 1734 5 1732 4 1730 4 1728 4 1726 4 1724 5 1722 6 1720 4 1718 4 1716 4 1714 5 1712 6 1710 5 1708 5 1706 4 1704 4 1702 4 1700 5 1698 4 1696 5 1694 4 1692 5 1690 6 1688 4 1686 5 1684 5 1682 4 1680 3 1678 5 1676 4 1674 2 1672 4 1670 4 1668 5 1666 3 1664 5 1662 4 1660 4 1658 4 1656 2 1654 4 1652 4 1650 0.6 1648 0.6 1646 0.6 1644 0.6 1642 0.6 1640 0.6 1638 5 1636 4 1634 5 1632 6 1630 2 1628 5 1626 5 1624 4 1622 4 1620 2 1618 4 1616 4 1614 5 1612 5 1610 5 1608 6 1606 6 1604 3 1602 4 1600 4 1598 4 1596 4 1594 4 1592 4 1590 2 1588 4 1586 4 1584 5 1582 4 1580 4 1578 5 1576 4 1574 4 1572 4 1570 5 1568 2 1566 3 1564 4 1562 6 1560 4 1558 4 1556 5 1554 2 1552 4 1550 4 1548 4 1546 3 1544 4 1542 4 1540 4 1538 5 1536 4 1534 4 1532 4 1530 5 1528 5 1526 5 1524 4 1522 4 1520 4 1518 4 1516 4 1514 4 1512 4 1510 3 1508 4 1506 2 1504 4 1502 4 1500 6 1498 6 1496 5 1494 5 1492 3 1490 2 1488 4 1486 4 1484 4 1482 4 1480 5 1478 3 1476 4 1474 4 1472 4 1470 5 1468 4 1466 5 1464 4 1462 4 1460 4 1458 3 1456 5 1454 0.6 1452 0.6 1450 0.6 1448 0.6 1446 0.6 1444 0.6 1442 0.6 1440 4 1438 4 1436 6 1434 5 1432 3 1430 4 1428 4 1426 6 1424 4 1422 5 1420 5 1418 4 1416 4 1414 5 1412 6 1410 4 1408 5 1406 4 1404 2 1402 3 1400 6 1398 4 1396 4 1394 4 1392 4 1390 4 1388 4 1386 5 1384 4 1382 4 1380 2 1378 4 1376 4 1374 4 1372 3 1370 4 1368 5 1366 4 1364 4 1362 4 1360 5 1358 5 1356 4 1354 4 1352 5 1350 5 1348 4 1346 4 1344 4 1342 5 1340 5 1338 4 1336 4 1334 4 1332 4 1330 4 1328 4 1326 3 1324 4 1322 4 1320 4 1318 4 1316 4 1314 5 1312 4 1310 3 1308 4 1306 4 1304 4 1302 5 1300 4 1298 5 1296 4 1294 6 1292 4 1290 4 1288 2 1286 4 1284 4 1282 4 1280 3 1278 2 1276 6 1274 4 1272 5 1270 4 1268 4 1266 4 1264 6 1262 5 1260 4 1258 4 1256 0.6 1254 3 1252 4 1250 2 1248 5 1246 4 1244 4 1242 4 1240 5 1238 2 1236 6 1234 4 1232 4 1230 5 1228 4 1226 5 1224 4 1222 6 1220 4 1218 5 1216 4 1214 4 1212 4 1210 4 1208 4 1206 5 1204 5 1202 5 1200 0.6 1198 0.6 1196 0.6 1194 0.6 1192 0.6 1190 0.6 1188 0.6 1186 0.6 1184 6 1182 4 1180 4 1178 4 1176 6 1174 4 1172 4 1170 4 1168 4 1166 4 1164 5 1162 4 1160 2 1158 4 1156 4 1154 4 1152 5 1150 5 1148 5 1146 6 1144 4 1142 4 1140 5 1138 3 1136 4 1134 6 1132 4 1130 4 1128 4 1126 6 1124 5 1122 4 1120 3 1118 3 1116 4 1114 6 1112 5 1110 2 1108 2 1106 4 1104 4 1102 4 1100 4 1098 5 1096 4 1094 5 1092 5 1090 5 1088 5 1086 4 1084 5 1082 4 1080 5 1078 4 1076 5 1074 5 1072 4 1070 5 1068 4 1066 5 1064 3 1062 5 1060 4 1058 4 1056 4 1054 4 1052 3 1050 6 1048 4 1046 4 1044 4 1042 4 1040 4 1038 4 1036 4 1034 2 1032 5 1030 5 1028 5 1026 4 1024 4 1022 5 1020 4 1018 6 1016 4 1014 4 1012 5 1010 4 1008 5 1006 5 1004 4 1002 0.6 1000 0.6 998 0.6 996 0.6 994 0.6 992 0.6 990 0.6 988 6 986 6 984 6 982 6 980 6 978 6 976 6 974 6 972 6 970 6 968 6 966 6 964 6 962 6 960 4 958 4 956 4 954 4 952 0.6 950 0.6 948 0.6 946 3 944 3 942 3 940 0.6 938 0.6 936 0.6 934 0.6 932 0.6 930 0.6 928 0.6 926 3 924 3 922 3 920 0.6 918 0.6 916 0.6 914 0.6 912 0.6 910 0.6 908 3 906 3 904 3 902 3 900 3 898 3 896 0.6Z"/></defs><rect x="580" y="58.5" width="3120" height="1.2" fill="#c29ca3"/><g transform="translate(0,59) translate(921,0) scale(0.9822,1) translate(-896,0)"><use href="#wf" fill="#c29ca3"/></g><rect x="580" y="91.5" width="3120" height="1.2" fill="#c29ca3"/><g transform="translate(0,92) translate(921,0) scale(0.9822,1) translate(-896,0)"><use href="#wf" fill="#c29ca3"/></g><rect x="580" y="256.5" width="3120" height="1.2" fill="#b3a1cc"/><g transform="translate(0,257) "><use href="#wf" fill="#b3a1cc"/></g><rect x="580" y="289.5" width="3120" height="1.2" fill="#b3a1cc"/><g transform="translate(0,290) "><use href="#wf" fill="#b3a1cc"/></g><rect x="580" y="358.5" width="3120" height="1.2" fill="#a2cbc2"/><g transform="translate(0,359) "><use href="#wf" fill="#a2cbc2"/></g><rect x="580" y="391.5" width="3120" height="1.2" fill="#a2cbc2"/><g transform="translate(0,392) "><use href="#wf" fill="#a2cbc2"/></g></svg>
<svg class="a" style="left:2127px;top:647px;" width="24" height="7" viewBox="0 0 24 7"><path d="M0.5 0.5 L23.5 0.5 L19 6.5 L5 6.5 Z" fill="#1818e8" stroke="#333" stroke-width="1.2"/></svg>
<svg class="a" style="left:2127px;top:744px;" width="24" height="7" viewBox="0 0 24 7"><path d="M0.5 0.5 L23.5 0.5 L19 6.5 L5 6.5 Z" fill="#1818e8" stroke="#333" stroke-width="1.2"/></svg>
<svg class="a" style="left:2141px;top:846px;" width="24" height="7" viewBox="0 0 24 7"><path d="M0.5 0.5 L23.5 0.5 L19 6.5 L5 6.5 Z" fill="#1818e8" stroke="#333" stroke-width="1.2"/></svg>
<svg class="a" style="left:2127px;top:942px;" width="24" height="7" viewBox="0 0 24 7"><path d="M0.5 0.5 L23.5 0.5 L19 6.5 L5 6.5 Z" fill="#1818e8" stroke="#333" stroke-width="1.2"/></svg>
<svg class="a" style="left:2127px;top:1044px;" width="24" height="7" viewBox="0 0 24 7"><path d="M0.5 0.5 L23.5 0.5 L19 6.5 L5 6.5 Z" fill="#1818e8" stroke="#333" stroke-width="1.2"/></svg>
<svg class="a" style="left:578px;top:744px;" width="9" height="7" viewBox="0 0 9 7"><path d="M0 0 L8 0 L0 6 Z" fill="#1010ff"/><path d="M8 0 L3 5" stroke="#333" stroke-width="1.5"/></svg>
<svg class="a" style="left:579px;top:800px;" width="9" height="8" viewBox="0 0 9 8"><path d="M0 0 L0 7 L8 7 Z" fill="#f4f4f4"/></svg>
<svg class="a" style="left:3691px;top:744px;" width="9" height="7" viewBox="0 0 9 7"><path d="M9 0 L1 0 L9 6 Z" fill="#1010ff"/><path d="M1 0 L6 5" stroke="#333" stroke-width="1.5"/></svg>
<svg class="a" style="left:578px;top:941px;" width="9" height="7" viewBox="0 0 9 7"><path d="M0 0 L8 0 L0 6 Z" fill="#1010ff"/><path d="M8 0 L3 5" stroke="#333" stroke-width="1.5"/></svg>
<svg class="a" style="left:579px;top:998px;" width="9" height="8" viewBox="0 0 9 8"><path d="M0 0 L0 7 L8 7 Z" fill="#f4f4f4"/></svg>
<svg class="a" style="left:3691px;top:941px;" width="9" height="7" viewBox="0 0 9 7"><path d="M9 0 L1 0 L9 6 Z" fill="#1010ff"/><path d="M1 0 L6 5" stroke="#333" stroke-width="1.5"/></svg>
<svg class="a" style="left:578px;top:1044px;" width="9" height="7" viewBox="0 0 9 7"><path d="M0 0 L8 0 L0 6 Z" fill="#1010ff"/><path d="M8 0 L3 5" stroke="#333" stroke-width="1.5"/></svg>
<svg class="a" style="left:579px;top:1100px;" width="9" height="8" viewBox="0 0 9 8"><path d="M0 0 L0 7 L8 7 Z" fill="#f4f4f4"/></svg>
<svg class="a" style="left:3691px;top:1044px;" width="9" height="7" viewBox="0 0 9 7"><path d="M9 0 L1 0 L9 6 Z" fill="#1010ff"/><path d="M1 0 L6 5" stroke="#333" stroke-width="1.5"/></svg>
<svg class="a" style="left:3723px;top:847px;" width="9" height="7" viewBox="0 0 9 7"><path d="M9 0 L1 0 L9 6 Z" fill="#1010ff"/></svg>
<svg class="a" style="left:579px;top:896px;" width="9" height="8" viewBox="0 0 9 8"><path d="M0 0 L0 7 L8 7 Z" fill="#f4f4f4"/></svg>
<div class="a" style="left:891px;top:588px;width:2px;height:1338px;background:#000;"></div>
<svg class="a" style="left:882px;top:587px;" width="20" height="30" viewBox="0 0 20 30"><path d="M2 1 L18 1 L18 18 L10 27 L2 18 Z" fill="#fff" stroke="#222" stroke-width="1"/><rect x="6" y="6" width="2.5" height="6" fill="#222"/><rect x="11.5" y="6" width="2.5" height="6" fill="#222"/></svg>
<div class="a" style="left:3811px;top:544px;width:21px;height:1382px;background:#6a6a6a;"></div>
<div class="a" style="left:3811px;top:544px;width:21px;height:25px;background:#555;"></div>
<svg class="a" style="left:3815px;top:547px;" width="16" height="18" viewBox="0 0 16 18"><path d="M2 2 L14 2 L14 11 L6 11 L2 16 Z" fill="none" stroke="#eee" stroke-width="2"/></svg>
<div class="a" style="left:3811px;top:569px;width:21px;height:27px;background:#2e2e2e;"></div>
<svg class="a" style="left:3813px;top:577px;" width="16" height="10" viewBox="0 0 16 10"><path d="M1 9 L8 1 L15 9 Z" fill="#eee"/></svg>
<div class="a" style="left:3811px;top:1840px;width:21px;height:86px;background:#2e2e2e;"></div>
<svg class="a" style="left:3814px;top:1847px;" width="14" height="8" viewBox="0 0 14 8"><path d="M0 0 L14 0 L7 8 Z" fill="#eee"/></svg>
<div class="a" style="left:3811px;top:1866px;width:21px;height:60px;background:#4a4a4a;"></div>
<div class="t" style="left:3814px;top:1870.0px;font-size:16px;line-height:16px;color:#eee;font-family:'Liberation Sans';font-weight:bold">+</div>
<div class="t" style="left:3815px;top:1904.0px;font-size:16px;line-height:16px;color:#eee;font-family:'Liberation Sans';font-weight:bold">−</div>
<div class="a" style="left:577px;top:1926px;width:3255px;height:25px;background:#606060;"></div>
<div class="a" style="left:3713px;top:1933px;width:2px;height:14px;background:#333;"></div>
<div class="a" style="left:3725px;top:1926px;width:26px;height:26px;background:#2e2e2e;"></div>
<svg class="a" style="left:3733px;top:1932px;" width="10" height="14" viewBox="0 0 10 14"><path d="M0 0 L10 7 L0 14 Z" fill="#eee"/></svg>
<div class="a" style="left:3751px;top:1926px;width:81px;height:26px;background:#4e4e4e;"></div>
<div class="t" style="left:3757px;top:1930.0px;font-size:18px;line-height:18px;color:#eee;font-family:'Liberation Sans';font-weight:bold">+</div>
<div class="t" style="left:3791px;top:1930.0px;font-size:18px;line-height:18px;color:#eee;font-family:'Liberation Sans';font-weight:bold">−</div>
<svg class="a" style="left:3815px;top:1931px;" width="16" height="16" viewBox="0 0 16 16"><circle cx="7" cy="7" r="5" fill="none" stroke="#eee" stroke-width="2"/><line x1="11" y1="11" x2="15" y2="15" stroke="#eee" stroke-width="2"/></svg>
<div class="a" style="left:4px;top:1951px;width:3828px;height:2px;background:#2a2a2a;"></div>
<div class="a" style="left:4px;top:1953px;width:3828px;height:38px;background:#474747;border-top:1px solid #6a6a6a"></div>
<svg class="a" style="left:3426px;top:1965px;" width="14" height="24" viewBox="0 0 14 24"><path d="M1 1 L13 1 L13 13 L7 23 L1 13 Z" fill="#fff"/><rect x="4" y="4" width="2" height="5" fill="#333"/><rect x="8" y="4" width="2" height="5" fill="#333"/></svg>
<div class="t" style="left:3453px;top:1968.0px;font-size:18px;line-height:18px;color:#d8d8d8;font-family:'Liberation Sans';">00:00:51:02</div>
<svg class="a" style="left:3569px;top:1967px;" width="16" height="16" viewBox="0 0 16 16"><path d="M1 1 L15 1 L15 15 Z" fill="#d8c060" stroke="#222" stroke-width="0.8"/></svg>
<svg class="a" style="left:3704px;top:1967px;" width="24" height="20" viewBox="0 0 24 20"><rect x="1" y="1" width="22" height="18" fill="#d8c060"/><path d="M2 17 L12 5 L22 17 Z" fill="#3a3a3a" stroke="#fff" stroke-width="1.5"/></svg>
<div class="a" style="left:5px;top:1926px;width:13px;height:65px;background:#3a3a3a;"></div>
<div class="t" style="left:9px;top:1958.0px;font-size:16px;line-height:16px;color:#aaa;font-family:'Liberation Sans';">R</div>
<div class="a" style="left:18px;top:1145px;width:2627px;height:846px;background:#0c0c0c;"></div>
<div class="a" style="left:18px;top:1145px;width:2627px;height:44px;background:#ffffff;"></div>
<svg class="a" style="left:29px;top:1157px;" width="24" height="20" viewBox="0 0 24 20"><rect x="0.5" y="0.5" width="23" height="19" fill="#b8bcc4" stroke="#888"/><rect x="2" y="5" width="20" height="13" fill="#000"/><text x="3" y="15.5" font-family="Liberation Sans" font-size="10" font-weight="bold" fill="#fff">C:\.</text><rect x="16" y="2" width="5" height="1.5" fill="#667"/></svg>
<div class="t" style="left:59px;top:1158.8px;font-size:18.5px;line-height:18.5px;color:#777;font-family:'Liberation Sans';">Command Prompt</div>
<div class="a" style="left:2463px;top:1166px;width:15px;height:1px;background:#444;"></div>
<div class="a" style="left:2532px;top:1159px;width:15px;height:15px;background:transparent;border:1px solid #444;"></div>
<svg class="a" style="left:2603px;top:1159px;" width="15" height="15" viewBox="0 0 15 15"><line x1="0" y1="0" x2="15" y2="15" stroke="#444" stroke-width="1"/><line x1="15" y1="0" x2="0" y2="15" stroke="#444" stroke-width="1"/></svg>
<div class="a" style="left:2619px;top:1189px;width:26px;height:802px;background:#f0f0f0;"></div>
<svg class="a" style="left:2624px;top:1199px;" width="16" height="10" viewBox="0 0 16 10"><path d="M2 8 L8 2 L14 8" fill="none" stroke="#555" stroke-width="2"/></svg>
<div class="a" style="left:2620px;top:1217px;width:24px;height:25px;background:#cdcdcd;"></div>
<pre class="t" style="left:18px;top:1191px;font-family:'Liberation Mono';font-size:18.33px;line-height:24.03px;color:#cccccc;margin:0;white-space:pre">C:\Users\drHirudo\Desktop\MAME64&gt;mame64 digdug1 -pb digdug1.inp -mngwrite digdug1.mng -wavwrite snap/digdug1.wav -nothrottle -exit_after_playback -skip_gameinfo -window
[LUA ERROR] in run: plugins\boot.lua:41: attempt to index a nil value (field &#x27;entries&#x27;)
Input file: digdug1.inp
INP version 3.0
Created Wed Jun 03 07:19:31 2020

Recorded using MAME 0.221 (Apr 29 2020)
Total playback frames: 30893
Average recorded speed: 100%
Exiting MAME now...
Average speed: 710.36% (509 seconds)

C:\Users\drHirudo\Desktop\MAME64&gt;dir snap
 Volume in drive C has no label.
 Volume Serial Number is CE6F-B655

 Directory of C:\Users\drHirudo\Desktop\MAME64\snap

03.06.2020 г.  21:30    &lt;DIR&gt;          .
03.06.2020 г.  21:30    &lt;DIR&gt;          ..
02.03.2019 г.  23:10            37 888 AEXMNG2AVI.exe
02.03.2019 г.  23:10            36 864 AviFile.dll
03.06.2020 г.  07:35     6 078 462 272 digdug1.avi
03.06.2020 г.  07:35           764 648 digdug1.avi.sfk
03.06.2020 г.  21:26       115 981 666 digdug1.mng
03.06.2020 г.  21:29           764 648 digdug1.sfk
03.06.2020 г.  21:26        97 866 284 digdug1.wav
03.06.2020 г.  21:29       212 666 880 digdug2.avi
03.06.2020 г.  21:30           764 648 digdug2.avi.sfk
02.03.2019 г.  23:10             8 704 MNGj.dll
              10 File(s)  6 507 354 502 bytes
               2 Dir(s)  243 318 001 664 bytes free

C:\Users\drHirudo\Desktop\MAME64&gt;</pre>
<div class="a" style="left:2699px;top:1109px;width:542px;height:762px;background:#f0f0f0;border:1px solid #aaa"></div>
<div class="a" style="left:2700px;top:1110px;width:540px;height:45px;background:#ffffff;"></div>
<svg class="a" style="left:2712px;top:1120px;" width="22" height="24" viewBox="0 0 22 24"><g transform="scale(1.0)"><path d="M11 1 L15 16 L7 16 Z" fill="#f28a00"/><path d="M8.2 7 L13.8 7 L14.6 10 L7.4 10 Z" fill="#f4f4f4"/><path d="M6.3 13.5 L15.7 13.5 L16.3 16 L5.7 16 Z" fill="#f4f4f4"/><path d="M2 16 L20 16 L21 22 L1 22 Z" fill="#f28a00"/></g></svg>
<div class="t" style="left:2742px;top:1124.0px;font-size:18px;line-height:18px;color:#8a8a8a;font-family:'Liberation Sans';">digdug1 Properties</div>
<svg class="a" style="left:3208px;top:1125px;" width="15" height="15" viewBox="0 0 15 15"><line x1="0" y1="0" x2="15" y2="15" stroke="#333" stroke-width="1"/><line x1="15" y1="0" x2="0" y2="15" stroke="#333" stroke-width="1"/></svg>
<div class="a" style="left:2712px;top:1170px;width:71px;height:27px;background:#f0f0f0;border:1px solid #d9d9d9;"></div>
<div class="t" style="left:2720px;top:1176.2px;font-size:17.5px;line-height:17.5px;color:#000;font-family:'Liberation Sans';transform:scaleX(0.885);transform-origin:0 50%">General</div>
<div class="a" style="left:2783px;top:1170px;width:74px;height:27px;background:#f0f0f0;border:1px solid #d9d9d9;"></div>
<div class="t" style="left:2791px;top:1176.2px;font-size:17.5px;line-height:17.5px;color:#000;font-family:'Liberation Sans';transform:scaleX(0.885);transform-origin:0 50%">Security</div>
<div class="a" style="left:2928px;top:1170px;width:138px;height:27px;background:#f0f0f0;border:1px solid #d9d9d9;"></div>
<div class="t" style="left:2936px;top:1176.2px;font-size:17.5px;line-height:17.5px;color:#000;font-family:'Liberation Sans';transform:scaleX(0.885);transform-origin:0 50%">Previous Versions</div>
<div class="a" style="left:2709px;top:1196px;width:519px;height:618px;background:#fff;border:1px solid #d9d9d9;"></div>
<div class="a" style="left:2857px;top:1166px;width:71px;height:32px;background:#fff;border:1px solid #d9d9d9;border-bottom:none"></div>
<div class="t" style="left:2865px;top:1171.2px;font-size:17.5px;line-height:17.5px;color:#000;font-family:'Liberation Sans';transform:scaleX(0.885);transform-origin:0 50%">Details</div>
<div class="a" style="left:2731px;top:1215px;width:477px;height:537px;background:#fff;border:1px solid #828790;"></div>
<div class="a" style="left:2732px;top:1216px;width:475px;height:36px;background:#fff;"></div>
<div class="a" style="left:2899px;top:1225px;width:1px;height:30px;background:#e5e5e5;"></div>
<div class="a" style="left:3153px;top:1225px;width:1px;height:30px;background:#e5e5e5;"></div>
<div class="t" style="left:2743px;top:1226.2px;font-size:17.5px;line-height:17.5px;color:#1e1e1e;font-family:'Liberation Sans';transform:scaleX(0.885);transform-origin:0 50%">Property</div>
<div class="t" style="left:2908px;top:1226.2px;font-size:17.5px;line-height:17.5px;color:#1e1e1e;font-family:'Liberation Sans';transform:scaleX(0.885);transform-origin:0 50%">Value</div>
<div class="a" style="left:3181px;top:1216px;width:25px;height:535px;background:#f0f0f0;"></div>
<svg class="a" style="left:3186px;top:1229px;" width="14" height="9" viewBox="0 0 14 9"><path d="M1 8 L7 2 L13 8" fill="none" stroke="#606060" stroke-width="1.8"/></svg>
<svg class="a" style="left:3186px;top:1731px;" width="14" height="9" viewBox="0 0 14 9"><path d="M1 1 L7 7 L13 1" fill="none" stroke="#606060" stroke-width="1.8"/></svg>
<div class="a" style="left:3182px;top:1386px;width:23px;height:250px;background:#cdcdcd;"></div>
<div class="t" style="left:2743px;top:1259.2px;font-size:17.5px;line-height:17.5px;color:#1e1e1e;font-family:'Liberation Sans';transform:scaleX(0.885);transform-origin:0 50%">Length</div>
<div class="t" style="left:2908px;top:1259.2px;font-size:17.5px;line-height:17.5px;color:#1e1e1e;font-family:'Liberation Sans';transform:scaleX(0.885);transform-origin:0 50%">00:08:29</div>
<div class="t" style="left:2752px;top:1291.2px;font-size:17.5px;line-height:17.5px;color:#1e3cc0;font-family:'Liberation Sans';">Audio</div>
<div class="a" style="left:2804px;top:1301px;width:359px;height:1px;background:#b5c8e6;"></div>
<div class="t" style="left:2743px;top:1322.2px;font-size:17.5px;line-height:17.5px;color:#1e1e1e;font-family:'Liberation Sans';transform:scaleX(0.885);transform-origin:0 50%">Bit rate</div>
<div class="t" style="left:2908px;top:1322.2px;font-size:17.5px;line-height:17.5px;color:#1e1e1e;font-family:'Liberation Sans';transform:scaleX(0.885);transform-origin:0 50%">1536kbps</div>
<div class="t" style="left:2752px;top:1354.2px;font-size:17.5px;line-height:17.5px;color:#1e3cc0;font-family:'Liberation Sans';">Origin</div>
<div class="a" style="left:2806px;top:1364px;width:357px;height:1px;background:#b5c8e6;"></div>
<div class="t" style="left:2743px;top:1384.2px;font-size:17.5px;line-height:17.5px;color:#1e1e1e;font-family:'Liberation Sans';transform:scaleX(0.885);transform-origin:0 50%">Media created</div>
<div class="t" style="left:2743px;top:1411.2px;font-size:17.5px;line-height:17.5px;color:#1e1e1e;font-family:'Liberation Sans';transform:scaleX(0.885);transform-origin:0 50%">Copyright</div>
<div class="t" style="left:2752px;top:1444.2px;font-size:17.5px;line-height:17.5px;color:#1e3cc0;font-family:'Liberation Sans';">Content</div>
<div class="a" style="left:2821px;top:1454px;width:342px;height:1px;background:#b5c8e6;"></div>
<div class="t" style="left:2743px;top:1475.2px;font-size:17.5px;line-height:17.5px;color:#1e1e1e;font-family:'Liberation Sans';transform:scaleX(0.885);transform-origin:0 50%">Parental rating</div>
<div class="t" style="left:2743px;top:1502.2px;font-size:17.5px;line-height:17.5px;color:#1e1e1e;font-family:'Liberation Sans';transform:scaleX(0.885);transform-origin:0 50%">Parental rating reason</div>
<div class="t" style="left:2752px;top:1534.2px;font-size:17.5px;line-height:17.5px;color:#1e3cc0;font-family:'Liberation Sans';">File</div>
<div class="a" style="left:2788px;top:1544px;width:375px;height:1px;background:#b5c8e6;"></div>
<div class="t" style="left:2743px;top:1564.8px;font-size:17.5px;line-height:17.5px;color:#1e1e1e;font-family:'Liberation Sans';transform:scaleX(0.885);transform-origin:0 50%">Name</div>
<div class="t" style="left:2908px;top:1564.8px;font-size:17.5px;line-height:17.5px;color:#1e1e1e;font-family:'Liberation Sans';transform:scaleX(0.885);transform-origin:0 50%">digdug1.wav</div>
<div class="t" style="left:2743px;top:1591.2px;font-size:17.5px;line-height:17.5px;color:#1e1e1e;font-family:'Liberation Sans';transform:scaleX(0.885);transform-origin:0 50%">Item type</div>
<div class="t" style="left:2908px;top:1591.2px;font-size:17.5px;line-height:17.5px;color:#1e1e1e;font-family:'Liberation Sans';transform:scaleX(0.885);transform-origin:0 50%">WAV Audio File (VLC)</div>
<div class="t" style="left:2743px;top:1618.8px;font-size:17.5px;line-height:17.5px;color:#1e1e1e;font-family:'Liberation Sans';transform:scaleX(0.885);transform-origin:0 50%">Folder path</div>
<div class="t" style="left:2908px;top:1618.8px;font-size:17.5px;line-height:17.5px;color:#1e1e1e;font-family:'Liberation Sans';transform:scaleX(0.885);transform-origin:0 50%">C:\Users\drHirudo\Desktop\M...</div>
<div class="t" style="left:2743px;top:1645.8px;font-size:17.5px;line-height:17.5px;color:#1e1e1e;font-family:'Liberation Sans';transform:scaleX(0.885);transform-origin:0 50%">Date created</div>
<div class="t" style="left:2908px;top:1645.8px;font-size:17.5px;line-height:17.5px;color:#1e1e1e;font-family:'Liberation Sans';transform:scaleX(0.885);transform-origin:0 50%">3.6.2020 г. 21:25</div>
<div class="t" style="left:2743px;top:1672.8px;font-size:17.5px;line-height:17.5px;color:#1e1e1e;font-family:'Liberation Sans';transform:scaleX(0.885);transform-origin:0 50%">Date modified</div>
<div class="t" style="left:2908px;top:1672.8px;font-size:17.5px;line-height:17.5px;color:#1e1e1e;font-family:'Liberation Sans';transform:scaleX(0.885);transform-origin:0 50%">3.6.2020 г. 21:26</div>
<div class="t" style="left:2743px;top:1699.8px;font-size:17.5px;line-height:17.5px;color:#1e1e1e;font-family:'Liberation Sans';transform:scaleX(0.885);transform-origin:0 50%">Size</div>
<div class="t" style="left:2908px;top:1699.8px;font-size:17.5px;line-height:17.5px;color:#1e1e1e;font-family:'Liberation Sans';transform:scaleX(0.885);transform-origin:0 50%">93.3 MB</div>
<div class="t" style="left:2743px;top:1726.2px;font-size:17.5px;line-height:17.5px;color:#1e1e1e;font-family:'Liberation Sans';transform:scaleX(0.885);transform-origin:0 50%">Attributes</div>
<div class="t" style="left:2908px;top:1726.2px;font-size:17.5px;line-height:17.5px;color:#1e1e1e;font-family:'Liberation Sans';transform:scaleX(0.885);transform-origin:0 50%">A</div>
<div class="t" style="left:2731px;top:1770.2px;font-size:17.5px;line-height:17.5px;color:#0066cc;font-family:'Liberation Sans';transform:scaleX(0.885);transform-origin:0 50%"><u>Remove Properties and Personal Information</u></div>
<div class="a" style="left:2878px;top:1828px;width:109px;height:31px;background:#e1e1e1;border:1px solid #adadad;"></div>
<div class="t" style="left:2878.0px;top:1834.2px;width:109px;text-align:center;font-size:17.5px;line-height:17.5px;color:#000;font-family:'Liberation Sans';transform:scaleX(0.885)">OK</div>
<div class="a" style="left:2999px;top:1828px;width:109px;height:31px;background:#e1e1e1;border:1px solid #adadad;"></div>
<div class="t" style="left:2999.0px;top:1834.2px;width:109px;text-align:center;font-size:17.5px;line-height:17.5px;color:#000;font-family:'Liberation Sans';transform:scaleX(0.885)">Cancel</div>
<div class="a" style="left:3121px;top:1828px;width:109px;height:31px;background:#cccccc;border:1px solid #adadad;"></div>
<div class="t" style="left:3121.0px;top:1834.2px;width:109px;text-align:center;font-size:17.5px;line-height:17.5px;color:#8d8d8d;font-family:'Liberation Sans';transform:scaleX(0.885)"><u>A</u>pply</div>
<div class="a" style="left:3252px;top:1128px;width:542px;height:762px;background:#f0f0f0;border:1px solid #aaa"></div>
<div class="a" style="left:3253px;top:1129px;width:540px;height:45px;background:#ffffff;"></div>
<svg class="a" style="left:3265px;top:1139px;" width="22" height="24" viewBox="0 0 22 24"><g transform="scale(1.0)"><path d="M11 1 L15 16 L7 16 Z" fill="#f28a00"/><path d="M8.2 7 L13.8 7 L14.6 10 L7.4 10 Z" fill="#f4f4f4"/><path d="M6.3 13.5 L15.7 13.5 L16.3 16 L5.7 16 Z" fill="#f4f4f4"/><path d="M2 16 L20 16 L21 22 L1 22 Z" fill="#f28a00"/></g></svg>
<div class="t" style="left:3295px;top:1143.0px;font-size:18px;line-height:18px;color:#1a1a1a;font-family:'Liberation Sans';">digdug1 Properties</div>
<svg class="a" style="left:3761px;top:1144px;" width="15" height="15" viewBox="0 0 15 15"><line x1="0" y1="0" x2="15" y2="15" stroke="#333" stroke-width="1"/><line x1="15" y1="0" x2="0" y2="15" stroke="#333" stroke-width="1"/></svg>
<div class="a" style="left:3265px;top:1189px;width:71px;height:27px;background:#f0f0f0;border:1px solid #d9d9d9;"></div>
<div class="t" style="left:3273px;top:1195.2px;font-size:17.5px;line-height:17.5px;color:#000;font-family:'Liberation Sans';transform:scaleX(0.885);transform-origin:0 50%">General</div>
<div class="a" style="left:3336px;top:1189px;width:74px;height:27px;background:#f0f0f0;border:1px solid #d9d9d9;"></div>
<div class="t" style="left:3344px;top:1195.2px;font-size:17.5px;line-height:17.5px;color:#000;font-family:'Liberation Sans';transform:scaleX(0.885);transform-origin:0 50%">Security</div>
<div class="a" style="left:3481px;top:1189px;width:138px;height:27px;background:#f0f0f0;border:1px solid #d9d9d9;"></div>
<div class="t" style="left:3489px;top:1195.2px;font-size:17.5px;line-height:17.5px;color:#000;font-family:'Liberation Sans';transform:scaleX(0.885);transform-origin:0 50%">Previous Versions</div>
<div class="a" style="left:3262px;top:1215px;width:519px;height:618px;background:#fff;border:1px solid #d9d9d9;"></div>
<div class="a" style="left:3410px;top:1185px;width:71px;height:32px;background:#fff;border:1px solid #d9d9d9;border-bottom:none"></div>
<div class="t" style="left:3418px;top:1190.2px;font-size:17.5px;line-height:17.5px;color:#000;font-family:'Liberation Sans';transform:scaleX(0.885);transform-origin:0 50%">Details</div>
<div class="a" style="left:3284px;top:1234px;width:477px;height:537px;background:#fff;border:1px solid #828790;"></div>
<div class="a" style="left:3285px;top:1235px;width:475px;height:36px;background:#fff;"></div>
<div class="a" style="left:3452px;top:1244px;width:1px;height:30px;background:#e5e5e5;"></div>
<div class="a" style="left:3706px;top:1244px;width:1px;height:30px;background:#e5e5e5;"></div>
<div class="t" style="left:3296px;top:1245.2px;font-size:17.5px;line-height:17.5px;color:#1e1e1e;font-family:'Liberation Sans';transform:scaleX(0.885);transform-origin:0 50%">Property</div>
<div class="t" style="left:3461px;top:1245.2px;font-size:17.5px;line-height:17.5px;color:#1e1e1e;font-family:'Liberation Sans';transform:scaleX(0.885);transform-origin:0 50%">Value</div>
<div class="a" style="left:3734px;top:1235px;width:25px;height:535px;background:#f0f0f0;"></div>
<svg class="a" style="left:3739px;top:1248px;" width="14" height="9" viewBox="0 0 14 9"><path d="M1 8 L7 2 L13 8" fill="none" stroke="#606060" stroke-width="1.8"/></svg>
<svg class="a" style="left:3739px;top:1750px;" width="14" height="9" viewBox="0 0 14 9"><path d="M1 1 L7 7 L13 1" fill="none" stroke="#606060" stroke-width="1.8"/></svg>
<div class="a" style="left:3735px;top:1325px;width:23px;height:213px;background:#cdcdcd;"></div>
<div class="t" style="left:3296px;top:1277.2px;font-size:17.5px;line-height:17.5px;color:#1e1e1e;font-family:'Liberation Sans';transform:scaleX(0.885);transform-origin:0 50%">Length</div>
<div class="t" style="left:3461px;top:1277.2px;font-size:17.5px;line-height:17.5px;color:#1e1e1e;font-family:'Liberation Sans';transform:scaleX(0.885);transform-origin:0 50%">00:08:29</div>
<div class="t" style="left:3296px;top:1304.2px;font-size:17.5px;line-height:17.5px;color:#1e1e1e;font-family:'Liberation Sans';transform:scaleX(0.885);transform-origin:0 50%">Frame width</div>
<div class="t" style="left:3461px;top:1304.2px;font-size:17.5px;line-height:17.5px;color:#1e1e1e;font-family:'Liberation Sans';transform:scaleX(0.885);transform-origin:0 50%">224</div>
<div class="t" style="left:3296px;top:1331.2px;font-size:17.5px;line-height:17.5px;color:#1e1e1e;font-family:'Liberation Sans';transform:scaleX(0.885);transform-origin:0 50%">Frame height</div>
<div class="t" style="left:3461px;top:1331.2px;font-size:17.5px;line-height:17.5px;color:#1e1e1e;font-family:'Liberation Sans';transform:scaleX(0.885);transform-origin:0 50%">288</div>
<div class="t" style="left:3296px;top:1358.8px;font-size:17.5px;line-height:17.5px;color:#1e1e1e;font-family:'Liberation Sans';transform:scaleX(0.885);transform-origin:0 50%">Data rate</div>
<div class="t" style="left:3461px;top:1358.8px;font-size:17.5px;line-height:17.5px;color:#1e1e1e;font-family:'Liberation Sans';transform:scaleX(0.885);transform-origin:0 50%">93858kbps</div>
<div class="t" style="left:3296px;top:1385.8px;font-size:17.5px;line-height:17.5px;color:#1e1e1e;font-family:'Liberation Sans';transform:scaleX(0.885);transform-origin:0 50%">Total bitrate</div>
<div class="t" style="left:3461px;top:1385.8px;font-size:17.5px;line-height:17.5px;color:#1e1e1e;font-family:'Liberation Sans';transform:scaleX(0.885);transform-origin:0 50%">95394kbps</div>
<div class="t" style="left:3296px;top:1412.8px;font-size:17.5px;line-height:17.5px;color:#1e1e1e;font-family:'Liberation Sans';transform:scaleX(0.885);transform-origin:0 50%">Frame rate</div>
<div class="t" style="left:3461px;top:1412.8px;font-size:17.5px;line-height:17.5px;color:#1e1e1e;font-family:'Liberation Sans';transform:scaleX(0.885);transform-origin:0 50%">60.61 frames/second</div>
<div class="t" style="left:3305px;top:1445.2px;font-size:17.5px;line-height:17.5px;color:#1e3cc0;font-family:'Liberation Sans';">Audio</div>
<div class="a" style="left:3357px;top:1455px;width:359px;height:1px;background:#b5c8e6;"></div>
<div class="t" style="left:3296px;top:1476.2px;font-size:17.5px;line-height:17.5px;color:#1e1e1e;font-family:'Liberation Sans';transform:scaleX(0.885);transform-origin:0 50%">Bit rate</div>
<div class="t" style="left:3461px;top:1476.2px;font-size:17.5px;line-height:17.5px;color:#1e1e1e;font-family:'Liberation Sans';transform:scaleX(0.885);transform-origin:0 50%">1536kbps</div>
<div class="t" style="left:3296px;top:1502.2px;font-size:17.5px;line-height:17.5px;color:#1e1e1e;font-family:'Liberation Sans';transform:scaleX(0.885);transform-origin:0 50%">Channels</div>
<div class="t" style="left:3461px;top:1502.2px;font-size:17.5px;line-height:17.5px;color:#1e1e1e;font-family:'Liberation Sans';transform:scaleX(0.885);transform-origin:0 50%">2 (stereo)</div>
<div class="t" style="left:3296px;top:1530.2px;font-size:17.5px;line-height:17.5px;color:#1e1e1e;font-family:'Liberation Sans';transform:scaleX(0.885);transform-origin:0 50%">Audio sample rate</div>
<div class="t" style="left:3461px;top:1530.2px;font-size:17.5px;line-height:17.5px;color:#1e1e1e;font-family:'Liberation Sans';transform:scaleX(0.885);transform-origin:0 50%">48.000 kHz</div>
<div class="t" style="left:3305px;top:1562.2px;font-size:17.5px;line-height:17.5px;color:#1e3cc0;font-family:'Liberation Sans';">Media</div>
<div class="a" style="left:3360px;top:1572px;width:356px;height:1px;background:#b5c8e6;"></div>
<div class="t" style="left:3296px;top:1592.2px;font-size:17.5px;line-height:17.5px;color:#1e1e1e;font-family:'Liberation Sans';transform:scaleX(0.885);transform-origin:0 50%">Contributing artists</div>
<div class="t" style="left:3296px;top:1620.2px;font-size:17.5px;line-height:17.5px;color:#1e1e1e;font-family:'Liberation Sans';transform:scaleX(0.885);transform-origin:0 50%">Year</div>
<div class="t" style="left:3296px;top:1647.0px;font-size:17.5px;line-height:17.5px;color:#1e1e1e;font-family:'Liberation Sans';transform:scaleX(0.885);transform-origin:0 50%">Genre</div>
<div class="t" style="left:3305px;top:1679.2px;font-size:17.5px;line-height:17.5px;color:#1e3cc0;font-family:'Liberation Sans';">Origin</div>
<div class="a" style="left:3359px;top:1689px;width:357px;height:1px;background:#b5c8e6;"></div>
<div class="t" style="left:3296px;top:1710.2px;font-size:17.5px;line-height:17.5px;color:#1e1e1e;font-family:'Liberation Sans';transform:scaleX(0.885);transform-origin:0 50%">Media created</div>
<div class="t" style="left:3296px;top:1737.2px;font-size:17.5px;line-height:17.5px;color:#1e1e1e;font-family:'Liberation Sans';transform:scaleX(0.885);transform-origin:0 50%">Copyright</div>
<div class="t" style="left:3284px;top:1789.2px;font-size:17.5px;line-height:17.5px;color:#0066cc;font-family:'Liberation Sans';transform:scaleX(0.885);transform-origin:0 50%"><u>Remove Properties and Personal Information</u></div>
<div class="a" style="left:3431px;top:1847px;width:109px;height:31px;background:#e1e1e1;border:2px solid #0078d7;"></div>
<div class="t" style="left:3431.0px;top:1853.2px;width:109px;text-align:center;font-size:17.5px;line-height:17.5px;color:#000;font-family:'Liberation Sans';transform:scaleX(0.885)">OK</div>
<div class="a" style="left:3552px;top:1847px;width:109px;height:31px;background:#e1e1e1;border:1px solid #adadad;"></div>
<div class="t" style="left:3552.0px;top:1853.2px;width:109px;text-align:center;font-size:17.5px;line-height:17.5px;color:#000;font-family:'Liberation Sans';transform:scaleX(0.885)">Cancel</div>
<div class="a" style="left:3674px;top:1847px;width:109px;height:31px;background:#cccccc;border:1px solid #adadad;"></div>
<div class="t" style="left:3674.0px;top:1853.2px;width:109px;text-align:center;font-size:17.5px;line-height:17.5px;color:#8d8d8d;font-family:'Liberation Sans';transform:scaleX(0.885)"><u>A</u>pply</div>
</body></html>
